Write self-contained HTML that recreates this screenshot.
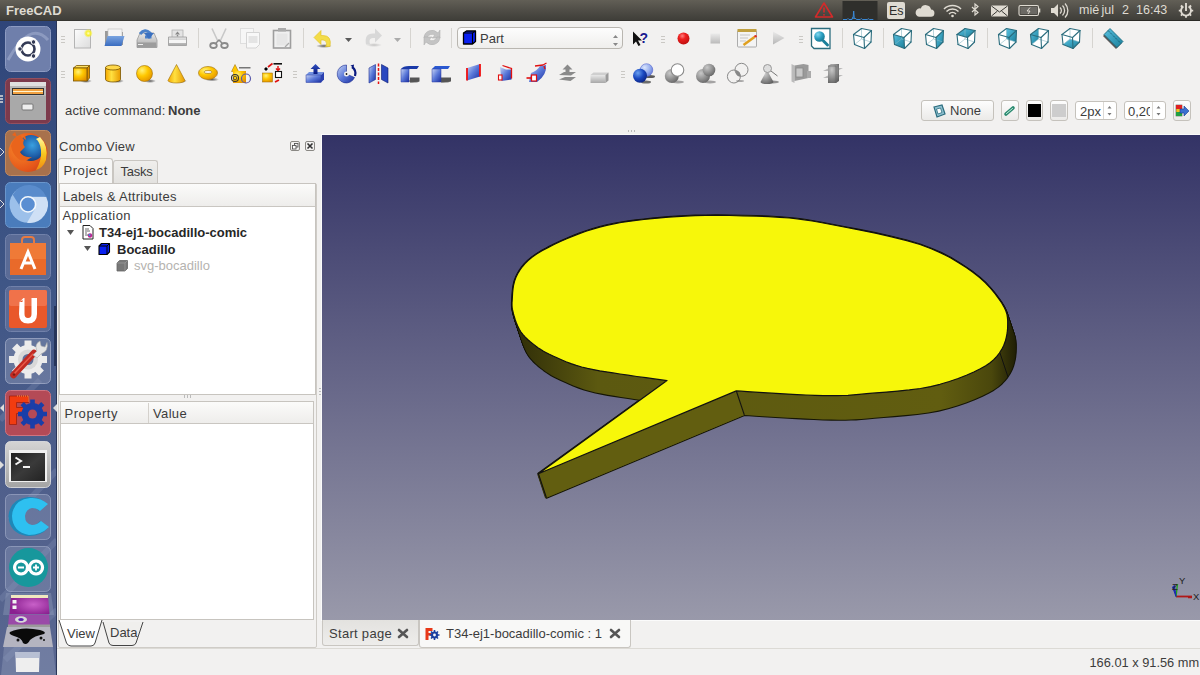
<!DOCTYPE html>
<html><head><meta charset="utf-8">
<style>
*{margin:0;padding:0;box-sizing:border-box}
html,body{width:1200px;height:675px;overflow:hidden;background:#f2f1f0;font-family:"Liberation Sans",sans-serif;color:#3c3c3c;position:relative}
.a{position:absolute}
.t{position:absolute;white-space:nowrap;font-size:13px;line-height:15px;color:#3c3c3c}
#panel{left:0;top:0;width:1200px;height:21px;background:linear-gradient(#625f56,#4b4943 60%,#3f3e39 95%,#2e2d29)}
#launcher{left:0;top:21px;width:57px;height:654px;background:linear-gradient(#1e2b4f 0px,#34497c 20px,#3d5589 300px,#41588a 654px);border-right:1px solid #1e2a48}
#view{left:322px;top:135px;width:878px;height:485px;background:linear-gradient(#333366,#9999aa)}
.grip{position:absolute;width:4px;height:7px;background:repeating-linear-gradient(#cac8c4 0 1px,transparent 1px 3px)}
.sep{position:absolute;width:1px;height:20px;background:#d6d4d0}
.box{position:absolute;background:#fff;border:1px solid #c7c4bf}
.hdr{position:absolute;background:linear-gradient(#fbfbfa,#eeedeb);border-bottom:1px solid #c9c6c1}
.tile{position:absolute;left:5px;width:46px;height:46px;border-radius:5px}
</style></head><body>
<div id="panel" class="a"><div class="t" style="left:6px;top:3px;font-weight:bold;color:#dfdbd2;font-size:13px;line-height:15px">FreeCAD</div>
<svg class="a" style="left:800px;top:0" width="400" height="21" viewBox="800 0 400 21">
<path d="M824 3 L832.5 17 H815.5z" fill="none" stroke="#d42a2a" stroke-width="1.6" stroke-linejoin="round"/>
<path d="M824 7.5 v5" stroke="#d42a2a" stroke-width="1.6"/><circle cx="824" cy="14.8" r="0.9" fill="#d42a2a"/>
<rect x="842.5" y="1" width="35" height="19" fill="#2f2f2c"/>
<path d="M843 19.5 h4 l1 -1 l1 1 h3 l0.5 -2 l0.5 1.5 l0.7 -8 l0.6 8 l1 -1 l1 1.5 h4 l1 -1 l1 1 h5 l1 -0.8 l1 0.8 h4" stroke="#3a8ad8" stroke-width="1" fill="none"/>
<rect x="887" y="2" width="18" height="17" rx="2" fill="#dfdbd2"/>
<text x="889" y="15" font-family="Liberation Sans" font-size="12.5" fill="#2e2d2a">Es</text>
<path d="M919 16.8 h11.5 a3.6 3.6 0 0 0 0.6 -7.2 a5.4 5.4 0 0 0 -10.3 -1.2 a4 4 0 0 0 -1.8 8.4z" fill="#dfdbd2"/>
<path d="M944 9 a12 12 0 0 1 17 0 M946.5 11.5 a8.5 8.5 0 0 1 12 0 M949 14 a5 5 0 0 1 7 0" stroke="#dfdbd2" stroke-width="1.5" fill="none"/>
<circle cx="952.5" cy="16" r="1.3" fill="#dfdbd2"/>
<path d="M972 7 l6 5.5 l-3 2.5 v-11 l3 2.5 l-6 5.5" stroke="#dfdbd2" stroke-width="1.2" fill="none"/>
<rect x="991" y="5.5" width="17" height="11" rx="1" fill="#dfdbd2"/>
<path d="M991.5 6 l8 6 l8 -6 M991.5 16 l6 -5 M1007.5 16 l-6 -5" stroke="#3c3b37" stroke-width="1" fill="none"/>
<rect x="1019" y="5.5" width="19.5" height="10" rx="1.5" fill="none" stroke="#dfdbd2" stroke-width="1.1"/>
<rect x="1038.5" y="8.5" width="1.8" height="4" fill="#dfdbd2"/>
<rect x="1020.5" y="7" width="16.5" height="7" fill="#6b6964"/>
<path d="M1030 7.5 l-3 3.5 h3 l-2 3" stroke="#dfdbd2" stroke-width="1" fill="none"/>
<path d="M1051 8 h3 l4 -4 v13 l-4 -4 h-3z" fill="#dfdbd2"/>
<path d="M1060 7.5 a4 4 0 0 1 0 6 M1062.5 5.5 a7 7 0 0 1 0 10 M1065 3.5 a10 10 0 0 1 0 14" stroke="#dfdbd2" stroke-width="1.3" fill="none"/>
<g transform="translate(1186 10.6)">
<path d="M-2.6 -4.2 A5 5 0 1 0 2.6 -4.2" fill="none" stroke="#dfdbd2" stroke-width="1.9"/>
<path d="M0 -7.5 v8" stroke="#dfdbd2" stroke-width="1.9"/>
<g stroke="#dfdbd2" stroke-width="1.8"><path d="M-7.2 0h2.2M5 0h2.2M0 5v2.2M-5.1 -5.1l1.5 1.5M5.1 -5.1l-1.5 1.5M-5.1 5.1l1.5 -1.5M5.1 5.1l-1.5 -1.5"/></g>
</g>
<rect x="800" y="20" width="400" height="1" fill="#2a2925"/>
</svg>
<div class="t" style="left:1079px;top:3px;color:#dfdbd2;font-size:12.5px">mié</div>
<div class="t" style="left:1101.5px;top:3px;color:#dfdbd2;font-size:12.5px">jul</div>
<div class="t" style="left:1122px;top:3px;color:#dfdbd2;font-size:12.5px">2</div>
<div class="t" style="left:1136px;top:3px;color:#dfdbd2;font-size:12.5px">16:43</div>
</div>
<div id="launcher" class="a"><svg class="a" style="left:0;top:-21px" width="57" height="675" viewBox="0 0 57 675">
<defs>
<linearGradient id="lbg" x1="0" y1="0" x2="0" y2="1"><stop offset="0" stop-color="#2f4579"/><stop offset="0.4" stop-color="#3f5686"/><stop offset="0.7" stop-color="#4f5f8b"/><stop offset="1" stop-color="#5a6790"/></linearGradient>
<linearGradient id="tileg" x1="0" y1="0" x2="0" y2="1"><stop offset="0" stop-color="#ffffff" stop-opacity="0.28"/><stop offset="1" stop-color="#ffffff" stop-opacity="0.08"/></linearGradient>
<radialGradient id="ffg" cx="0.55" cy="0.4" r="0.6"><stop offset="0" stop-color="#3aa0e0"/><stop offset="0.7" stop-color="#1e5ea8"/><stop offset="1" stop-color="#16407e"/></radialGradient>
</defs>
<rect x="0" y="21" width="57" height="654" fill="url(#lbg)"/>
<path d="M10 520 L57 470 M0 600 L57 540 M5 660 L57 610 M0 420 L40 380" stroke="#8e9cc0" stroke-width="6" opacity="0.25"/>
<rect x="54" y="306" width="2" height="60" fill="#26355a"/>
<rect x="56" y="21" width="1" height="654" fill="#2a3658"/>
<!-- 1 ubuntu -->
<rect x="5.5" y="26.5" width="45" height="45" rx="5" fill="#6f7fab" stroke="#8d9bc2"/>
<path d="M8 60 Q30 20 48 40" stroke="#a9b5d6" stroke-width="3" fill="none" opacity="0.5"/>
<circle cx="28" cy="49" r="12.5" fill="#fff"/>
<circle cx="28" cy="49" r="6.5" fill="none" stroke="#333a55" stroke-width="2.6"/>
<circle cx="33.5" cy="42" r="2.3" fill="#333a55" stroke="#fff" stroke-width="1"/><circle cx="20" cy="49" r="2.3" fill="#333a55" stroke="#fff" stroke-width="1"/><circle cx="33.5" cy="56" r="2.3" fill="#333a55" stroke="#fff" stroke-width="1"/>
<!-- 2 files -->
<rect x="5.5" y="78.5" width="45" height="45" rx="5" fill="#7c3a4c" stroke="#94505f"/>
<rect x="10" y="82" width="36" height="38" rx="1.5" fill="#b9b9b9"/>
<rect x="10" y="82" width="36" height="4" fill="#e0e0e0"/>
<rect x="12" y="88" width="32" height="7" fill="#333"/>
<rect x="13" y="89" width="30" height="5" fill="#f0a040"/><rect x="13" y="91" width="30" height="1" fill="#fff5d0"/>
<rect x="10" y="96" width="36" height="24" fill="#a9a9a9"/>
<rect x="22" y="104" width="11" height="6" rx="1" fill="#eee" stroke="#777"/>
<path d="M0 96h3M0 99h3M0 102h3" stroke="#ddd" stroke-width="1.5"/>
<!-- 3 firefox -->
<rect x="5.5" y="130.5" width="45" height="45" rx="5" fill="#a8714c" stroke="#c08a62"/>
<radialGradient id="foxg" cx="0.3" cy="0.4" r="0.8"><stop offset="0" stop-color="#f7882a"/><stop offset="0.7" stop-color="#e5561a"/><stop offset="1" stop-color="#c8401a"/></radialGradient>
<linearGradient id="flame" x1="0" y1="0" x2="0" y2="1"><stop offset="0" stop-color="#fff8a0"/><stop offset="0.5" stop-color="#f8c820"/><stop offset="1" stop-color="#f08a10"/></linearGradient>
<circle cx="28" cy="152.5" r="19.5" fill="url(#foxg)"/>
<circle cx="31" cy="148" r="13" fill="url(#ffg)"/>
<path d="M40 137 Q49 146 46 160 Q43 168 36 170 Q42 160 41 150 Q40 142 36 139z" fill="url(#flame)"/>
<path d="M11 146 Q13 138 20 135 L24 140 Q22 144 25 147 L20 152 Q23 158 32 157 Q26 162 20 160 Q14 156 12 150z" fill="#e9641c"/>
<path d="M12 135 l3 -3 l2 5z M23 138 l2 -3 l1 5z" fill="#e9641c"/>
<path d="M0 148l4 4l-4 4" stroke="#ddd" fill="none" stroke-width="1"/>
<!-- 4 chromium -->
<rect x="5.5" y="182.5" width="45" height="45" rx="5" fill="#4a7cbc" stroke="#6a96cc"/>
<circle cx="28" cy="204.4" r="18.4" fill="#9cc0ea"/>
<path d="M28 196.8 H46.2 A18.4 18.4 0 0 1 27 222.8 L35 209z" fill="#cfe0f5"/>
<path d="M46.2 196.8 A18.4 18.4 0 0 0 12.7 194.7 L21 208 L28 196.8z" fill="#5a8ccc"/>
<circle cx="28" cy="204.4" r="7.6" fill="#5a8ed2" stroke="#f4f8fc" stroke-width="1.6"/>
<path d="M0 200l4 4l-4 4" stroke="#ddd" fill="none" stroke-width="1"/>
<!-- 5 software center -->
<rect x="5.5" y="234.5" width="45" height="45" rx="5" fill="#5a6b96" stroke="#7181aa"/>
<rect x="10" y="243" width="36" height="32" fill="#ef7a37"/>
<rect x="10" y="259" width="36" height="16" fill="#e96a2a"/>
<path d="M22 245 v-5 q0-3 3-3 h6 q3 0 3 3 v5" stroke="#e87a40" stroke-width="2" fill="none"/>
<path d="M21 269 L28 252 L35 269 M23 263 H33" stroke="#fff" stroke-width="3" fill="none"/>
<!-- 6 ubuntu one -->
<rect x="5.5" y="286.5" width="45" height="45" rx="5" fill="#5a6b96" stroke="#7181aa"/>
<rect x="9" y="290" width="38" height="38" rx="2" fill="#e9582a"/>
<rect x="9" y="290" width="38" height="16" rx="2" fill="#f0724a"/>
<path d="M19.5 302 l4 -4 h1 v16 q0 4 3.5 4 q3.5 0 3.5 -4 v-16 h5.5 v16 q0 9.5 -9 9.5 q-9 0 -9 -9.5z" fill="#fff"/><path d="M19.5 302 h3 v-2z" fill="#e9582a"/>
<!-- 7 system settings -->
<rect x="5.5" y="338.5" width="45" height="45" rx="5" fill="#8d98b8" fill-opacity="0.45" stroke="#a9b3cf" stroke-opacity="0.7"/>
<g transform="translate(28 359.5)">
<circle r="14.5" fill="#ececec"/>
<g fill="#ececec"><rect x="-3.5" y="-19" width="7" height="38"/><rect x="-19" y="-3.5" width="38" height="7"/><rect x="-3.5" y="-19" width="7" height="38" transform="rotate(45)"/><rect x="-3.5" y="-19" width="7" height="38" transform="rotate(-45)"/></g>
<circle r="10" fill="#d8d8d8"/>
<circle r="5.5" fill="#5d6e98"/>
</g>
<path d="M13.5 375 L34 353" stroke="#c02a22" stroke-width="6.5" stroke-linecap="round"/>
<path d="M14 374 L33 354" stroke="#e85a4a" stroke-width="1.5" stroke-linecap="round"/>
<circle cx="14" cy="374.5" r="1.2" fill="#7a1a14"/>
<path d="M33 355 L37 351 Q34 344 40 341 L41 346 L45 347 L47 342.5 Q49 351 41 354 L37 358z" fill="#e4e4e4" stroke="#aaa" stroke-width="0.6"/>
<!-- 8 freecad -->
<rect x="5.5" y="390.5" width="45" height="45" rx="5" fill="#b44a56" stroke="#cf7480"/>
<path d="M9.5 396 h19 v6.5 h-12 v5 h9 v6 h-9 v11 h-7z" fill="#f23c10" stroke="#9a1a08" stroke-width="0.7"/>
<path d="M17 396 h11.5 v6" fill="none" stroke="#ff9a50" stroke-width="1" stroke-dasharray="1 1"/>
<g transform="translate(32.5 414)"><circle r="11" fill="#1a3ea8"/><g stroke="#1a3ea8" stroke-width="4.6"><path d="M0 -14.5v29M-14.5 0h29M-10.3 -10.3l20.6 20.6M10.3 -10.3l-20.6 20.6"/></g><circle r="4.5" fill="#b44a56"/></g>
<path d="M0 408l4 -4v8z M57 404 l-4 4 l4 4z" fill="#ddd"/>
<!-- 9 terminal -->
<linearGradient id="termg" x1="0" y1="0" x2="0" y2="1"><stop offset="0" stop-color="#d4d4d4"/><stop offset="1" stop-color="#a4a4a4"/></linearGradient>
<linearGradient id="scrg" x1="0" y1="0" x2="1" y2="1"><stop offset="0" stop-color="#1e1e1e"/><stop offset="0.5" stop-color="#3a3a3a"/><stop offset="1" stop-color="#222"/></linearGradient>
<rect x="5.5" y="441.5" width="45" height="46" rx="5" fill="url(#termg)" stroke="#e4e4e4" stroke-width="0.8"/>
<rect x="9" y="450" width="38" height="32" fill="#f0f0f0"/>
<rect x="11" y="453" width="34" height="28" fill="url(#scrg)"/>
<path d="M15.5 457.5l5.5 3.5l-5.5 3.5" stroke="#f4f4f4" stroke-width="2" fill="none"/><path d="M23 467h7" stroke="#f4f4f4" stroke-width="2"/>
<path d="M0 461l4 4l-4 4z" fill="#ddd"/>
<!-- 10 C -->
<rect x="5.5" y="494.5" width="45" height="45" rx="5" fill="#8d98b8" fill-opacity="0.4" stroke="#a9b3cf" stroke-opacity="0.6"/>
<path d="M46 503 Q38 496 28 497 Q10 499 8.5 516 Q9 533 27 536 Q40 537 48 528 L40 521 Q36 526 31 526 Q23 525 23 516 Q24 508 31 507 Q36 507 39 511z" fill="#1e88b8"/>
<path d="M48 504 Q40 497 30 498 Q13 500 12 516 Q12.5 532 29 535 Q41 535 49 527 L41 521 Q37 525 32 525 Q25 524 25 516 Q26 509 32 508 Q37 508 40 511z" fill="#2ec0f0"/>
<!-- 11 arduino -->
<rect x="5.5" y="546.5" width="45" height="45" rx="5" fill="#8d98b8" fill-opacity="0.4" stroke="#a9b3cf" stroke-opacity="0.6"/>
<circle cx="28.5" cy="567.5" r="19.5" fill="#17979c"/>
<path d="M21 561 a6.5 6.5 0 1 0 0.1 0z M36 561 a6.5 6.5 0 1 0 0.1 0z" fill="none" stroke="#fff" stroke-width="3"/>
<path d="M18 567.5h6M33 567.5h6M36 564.5v6" stroke="#fff" stroke-width="1.8"/>
<!-- stacked -->
<radialGradient id="purp" cx="0.6" cy="0.5" r="0.6"><stop offset="0" stop-color="#c860c8"/><stop offset="1" stop-color="#8a2090"/></radialGradient>
<path d="M6 593 h45 l3 22 h-51z" fill="#9aa6c4" fill-opacity="0.35"/>
<path d="M11 595 h37 l1.5 19 h-40z" fill="url(#purp)"/>
<rect x="11" y="595" width="37" height="3" fill="#f0e8c0"/>
<rect x="12.5" y="600" width="4" height="3.5" fill="#f2f2f2"/><rect x="12.5" y="605.5" width="4" height="3.5" fill="#f2f2f2"/>
<path d="M9 614.5 h40 l1 12.5 h-42z" fill="#9a4aa8"/>
<ellipse cx="21" cy="619.5" rx="6" ry="3.2" fill="#d8d8d8"/><ellipse cx="21" cy="619.5" rx="2.8" ry="1.6" fill="#5a20b0"/>
<rect x="8" y="624.5" width="42" height="2.5" fill="#9a9a9a"/>
<path d="M7 627 h43 l3 20 h-50z" fill="#b4b4c0"/>
<path d="M10 632 Q22 626 40 630 Q47 632 44 634 Q34 636 30 640 Q27 646 23 643 Q22 638 14 636 Q8 634 10 632z" fill="#0a0a0a"/>
<circle cx="18" cy="640" r="1.5" fill="#111"/><circle cx="41" cy="638" r="1.5" fill="#111"/><circle cx="44" cy="640" r="1" fill="#111"/>
<path d="M4 647 h49 l3 28 h-55z" fill="#9aa6c4" fill-opacity="0.35"/>
<path d="M15 652 h25 l-1 20 h-23z" fill="#c9cfe0" fill-opacity="0.8"/>
<path d="M16 658 h23 v14 h-23z" fill="#eeeeee"/>
</svg>
</div>

<!-- toolbars -->
<div class="grip" style="left:61px;top:36px"></div>
<div class="grip" style="left:61px;top:71px"></div>
<div class="sep" style="left:198px;top:28px"></div>
<div class="sep" style="left:303px;top:28px"></div>
<div class="sep" style="left:410px;top:28px"></div>
<div class="sep" style="left:451px;top:28px"></div>
<div class="grip" style="left:661px;top:36px"></div>
<div class="grip" style="left:799px;top:36px"></div>
<div class="sep" style="left:842px;top:28px"></div>
<div class="sep" style="left:883px;top:28px"></div>
<div class="sep" style="left:987px;top:28px"></div>
<div class="sep" style="left:1092px;top:28px"></div>
<div class="grip" style="left:293px;top:71px"></div>
<div class="grip" style="left:621px;top:71px"></div>
<!-- workbench combo -->
<div class="a" style="left:457px;top:27px;width:166px;height:22px;border:1px solid #b9b6b0;border-radius:4px;background:linear-gradient(#fdfdfd,#efeeec)"></div>
<div class="t" style="left:480px;top:31px;font-size:13px;color:#3c3c3c">Part</div>
<svg class="a" style="left:0;top:0" width="1200" height="100" viewBox="0 0 1200 100">
<defs>
<linearGradient id="pg" x1="0" y1="0" x2="1" y2="1"><stop offset="0" stop-color="#fdfdfd"/><stop offset="1" stop-color="#dcdcdc"/></linearGradient>
<radialGradient id="glow"><stop offset="0" stop-color="#ffffc0"/><stop offset="0.5" stop-color="#f6ee30"/><stop offset="1" stop-color="#f6ee30" stop-opacity="0"/></radialGradient>
<linearGradient id="blu" x1="0" y1="0" x2="0" y2="1"><stop offset="0" stop-color="#7aa4e0"/><stop offset="1" stop-color="#3a6cc0"/></linearGradient>
<linearGradient id="gry" x1="0" y1="0" x2="0" y2="1"><stop offset="0" stop-color="#e8e8e8"/><stop offset="1" stop-color="#a8a8a8"/></linearGradient>
<radialGradient id="gold" cx="0.35" cy="0.3" r="0.8"><stop offset="0" stop-color="#fff27a"/><stop offset="0.45" stop-color="#ffc800"/><stop offset="1" stop-color="#e08e00"/></radialGradient>
<linearGradient id="goldl" x1="0" y1="0" x2="1" y2="0"><stop offset="0" stop-color="#f5a800"/><stop offset="0.4" stop-color="#ffe040"/><stop offset="1" stop-color="#e89a00"/></linearGradient>
<linearGradient id="pb" x1="0" y1="0" x2="1" y2="1"><stop offset="0" stop-color="#c8d4f4"/><stop offset="0.5" stop-color="#5a78d8"/><stop offset="1" stop-color="#1a2ea0"/></linearGradient>
<linearGradient id="pbd" x1="0" y1="0" x2="0" y2="1"><stop offset="0" stop-color="#3050c0"/><stop offset="1" stop-color="#0a1a80"/></linearGradient>
<radialGradient id="rball" cx="0.4" cy="0.3" r="0.7"><stop offset="0" stop-color="#ff8080"/><stop offset="0.4" stop-color="#ee2020"/><stop offset="1" stop-color="#c01010"/></radialGradient>
<linearGradient id="teal" x1="0" y1="0" x2="1" y2="1"><stop offset="0" stop-color="#58c0e0"/><stop offset="1" stop-color="#1a7f9a"/></linearGradient>
<radialGradient id="tball" cx="0.35" cy="0.3" r="0.8"><stop offset="0" stop-color="#80d8f0"/><stop offset="0.5" stop-color="#2a9ec0"/><stop offset="1" stop-color="#13708a"/></radialGradient>
<radialGradient id="bball" cx="0.35" cy="0.3" r="0.8"><stop offset="0" stop-color="#6aa0f0"/><stop offset="0.5" stop-color="#1a48c0"/><stop offset="1" stop-color="#0a1e7a"/></radialGradient>
<radialGradient id="lbball" cx="0.35" cy="0.3" r="0.8"><stop offset="0" stop-color="#d8e4fc"/><stop offset="0.6" stop-color="#90a8ec"/><stop offset="1" stop-color="#5a70d0"/></radialGradient>
<radialGradient id="gball" cx="0.35" cy="0.3" r="0.8"><stop offset="0" stop-color="#c8c8c8"/><stop offset="0.6" stop-color="#8a8a8a"/><stop offset="1" stop-color="#606060"/></radialGradient>
<radialGradient id="shad"><stop offset="0" stop-color="#333" stop-opacity="0.8"/><stop offset="1" stop-color="#333" stop-opacity="0"/></radialGradient>
</defs>
<!-- ===== ROW 1 ===== -->
<!-- new -->
<rect x="74.5" y="29.5" width="16" height="18.5" fill="url(#pg)" stroke="#b4b4b4"/>
<circle cx="88.3" cy="33.3" r="4.5" fill="url(#glow)"/>
<!-- open -->
<path d="M105 31 h6 l1 1 h11 v13 h-18z" fill="#9a9a9a"/>
<rect x="108" y="29" width="14" height="8" fill="#f4f4f4" stroke="#bbb" stroke-width="0.6"/>
<path d="M107.5 36 h17 l-3 10 h-17z" fill="url(#blu)"/>
<!-- save -->
<path d="M137 40 l3 -7 h14 l3 7 v7.5 h-20z" fill="url(#gry)" stroke="#9a9a9a" stroke-width="0.8"/>
<rect x="137" y="42.5" width="19" height="5" fill="#9c9c9c"/>
<rect x="138" y="44" width="5" height="1" fill="#eee"/>
<path d="M140 34 q5 -6 10 -1 l0 -1 v5 h-5" fill="none" stroke="#4a80c8" stroke-width="3"/>
<path d="M144 33 h10 l-5 6z" fill="#3a70c0"/>
<!-- print -->
<rect x="172" y="30" width="11" height="8" fill="#e4e4e4" stroke="#aaa" stroke-width="0.7"/>
<path d="M177.5 31.5 l-2.5 3 h5z M176.8 34 h1.4 v2.5 h-1.4z" fill="#888"/>
<path d="M168.5 37 h18 v8.5 h-18z" fill="url(#gry)" stroke="#999" stroke-width="0.8"/>
<rect x="169" y="40" width="17" height="3" fill="#f5f5f5"/>
<!-- cut -->
<path d="M212 28.5 l6 13 M226 28.5 l-6 13" stroke="#c8c8c8" stroke-width="1.6" fill="none"/>
<ellipse cx="213.5" cy="45.5" rx="3.3" ry="2.5" fill="none" stroke="#8a8a8a" stroke-width="1.8"/>
<ellipse cx="224.5" cy="45.5" rx="3.3" ry="2.5" fill="none" stroke="#8a8a8a" stroke-width="1.8"/>
<path d="M216 43 l3 -3 l3 3" stroke="#8a8a8a" stroke-width="1.5" fill="none"/>
<!-- copy -->
<rect x="240.5" y="28.5" width="13" height="15" fill="#f6f6f6" stroke="#dedede"/>
<path d="M246.5 32.5 h13 v12 l-3.5 3.5 h-9.5z" fill="#f8f8f8" stroke="#d4d4d4"/>
<rect x="248.5" y="36" width="9" height="7" fill="#e4e4e4"/>
<!-- paste -->
<rect x="273.5" y="30.5" width="17" height="17.5" fill="#f0f0f0" stroke="#9e9e9e" stroke-width="1.6"/>
<rect x="278" y="28" width="8" height="3.5" fill="#aaa"/>
<rect x="276.5" y="33.5" width="11" height="12" fill="#e6e6e6"/>
<path d="M285 47 l4 -4" stroke="#aaa" stroke-width="1.2"/>
<!-- undo -->
<ellipse cx="324" cy="46" rx="8" ry="2" fill="url(#shad)"/>
<path d="M330 46.5 q2 -11 -7 -11 h-2 v-5 l-7 7 l7 7 v-4.5 h2 q3.5 0 3.5 3.5 q0 2 -1 3z" fill="#f3dc48" stroke="#e0c020" stroke-width="0.6"/>
<path d="M345 38 h7 l-3.5 4z" fill="#5a5a5a"/>
<!-- redo -->
<ellipse cx="374" cy="45" rx="8" ry="2" fill="url(#shad)" opacity="0.3"/>
<path d="M366 44.5 q-2 -11 7 -11 h2 v-5 l7 7 l-7 7 v-4.5 h-2 q-3.5 0 -3.5 3.5 q0 2 1 3z" fill="#d8d8d8"/>
<path d="M394 38 h7 l-3.5 4z" fill="#ababab"/>
<!-- refresh -->
<path d="M424 38 a8 8 0 0 1 14 -5 l2 -3 v8 h-8 l3 -2.5 a5 5 0 0 0 -8 2.5z" fill="#c4c4c4" stroke="#aaa" stroke-width="0.5"/>
<path d="M440 37 a8 8 0 0 1 -14 5 l-2 3 v-8 h8 l-3 2.5 a5 5 0 0 0 8 -2.5z" fill="#c4c4c4" stroke="#aaa" stroke-width="0.5"/>
<!-- workbench cube -->
<path d="M463.5 33 l3 -2 h9 v10.5 l-3 2.5 h-9z" fill="#0a20f0" stroke="#000" stroke-width="1.3" stroke-linejoin="round"/>
<path d="M463.5 33 h9 l3 -2 M472.5 33 v11" stroke="#000" stroke-width="1.1" fill="none"/>
<path d="M613 38 l2.5 -3 l2.5 3z M613 43 l2.5 3 l2.5 -3z" fill="#888"/>
<!-- whats this -->
<path d="M633 31.5 v13 l3 -3 l2.5 4.5 l2 -1 l-2.5 -4.5 h4z" fill="#111"/>
<text x="639.5" y="43" font-family="Liberation Sans" font-weight="bold" font-size="14" fill="#1a1a90">?</text>
<!-- record -->
<circle cx="683.5" cy="38.4" r="6" fill="url(#rball)"/>
<!-- stop -->
<rect x="710.5" y="33.5" width="9.5" height="10" fill="url(#gry)" opacity="0.75"/>
<!-- macro edit -->
<rect x="737.5" y="30.5" width="19" height="16.5" rx="1" fill="#f4f4f4" stroke="#999" stroke-width="0.8"/>
<rect x="737.5" y="29" width="19" height="3" fill="#c0a040"/>
<path d="M740 35h10M740 38h8M740 41h6" stroke="#bbb" stroke-width="0.8"/>
<path d="M743.5 45 l11 -8" stroke="#e0a020" stroke-width="2.6"/>
<circle cx="755.5" cy="36.3" r="1.3" fill="#e03020"/>
<!-- play -->
<path d="M773 31.5 v13 l11.5 -6.5z" fill="url(#gry)" opacity="0.8"/>
<!-- fit all -->
<path d="M811.5 28.5 h18.5 v20 h-16 l-2.5 -2.5z" fill="#fff" stroke="#2b6d7e" stroke-width="1.3"/>
<circle cx="819.5" cy="36.5" r="5.3" fill="url(#tball)"/>
<path d="M823.5 41 l4 4" stroke="#1a7f9a" stroke-width="3" stroke-linecap="round"/>
<!-- ruler -->
<path d="M1104 34.5 l6 -6 l13 13 l-6 6z" fill="#333" opacity="0.8" transform="translate(-1 1.5)"/>
<path d="M1104 34.5 l6 -6 l13 13 l-6 6z" fill="url(#teal)" stroke="#15677c" stroke-width="0.8"/>
<path d="M1108 30.5l2 2M1110.5 33l1.5 1.5M1113 35.5l2 2M1115.5 38l1.5 1.5M1118 40.5l2 2" stroke="#13576a" stroke-width="0.8"/>
<!--CUBES--><polygon points="853.5,34.5 861.5,28.5 871.5,30.5 871.0,42.0 864.5,48.5 854.5,44.5" fill="#fff"/><line x1="861.5" y1="39.0" x2="861.5" y2="28.5" stroke="#8ab8c4" stroke-width="0.6"/><line x1="861.5" y1="39.0" x2="871.0" y2="42.0" stroke="#8ab8c4" stroke-width="0.6"/><line x1="861.5" y1="39.0" x2="854.5" y2="44.5" stroke="#8ab8c4" stroke-width="0.6"/><line x1="853.5" y1="34.5" x2="864.0" y2="37.5" stroke="#2b6d7e" stroke-width="1.1" stroke-linecap="round"/><line x1="864.0" y1="37.5" x2="864.5" y2="48.5" stroke="#2b6d7e" stroke-width="1.1" stroke-linecap="round"/><line x1="864.5" y1="48.5" x2="854.5" y2="44.5" stroke="#2b6d7e" stroke-width="1.1" stroke-linecap="round"/><line x1="854.5" y1="44.5" x2="853.5" y2="34.5" stroke="#2b6d7e" stroke-width="1.1" stroke-linecap="round"/><line x1="853.5" y1="34.5" x2="861.5" y2="28.5" stroke="#2b6d7e" stroke-width="1.1" stroke-linecap="round"/><line x1="861.5" y1="28.5" x2="871.5" y2="30.5" stroke="#2b6d7e" stroke-width="1.1" stroke-linecap="round"/><line x1="871.5" y1="30.5" x2="864.0" y2="37.5" stroke="#2b6d7e" stroke-width="1.1" stroke-linecap="round"/><line x1="871.5" y1="30.5" x2="871.0" y2="42.0" stroke="#2b6d7e" stroke-width="1.1" stroke-linecap="round"/><line x1="871.0" y1="42.0" x2="864.5" y2="48.5" stroke="#2b6d7e" stroke-width="1.1" stroke-linecap="round"/><polygon points="893.5,34.5 901.5,28.5 911.5,30.5 911.0,42.0 904.5,48.5 894.5,44.5" fill="#fff"/><polygon points="893.5,34.5 904.0,37.5 904.5,48.5 894.5,44.5" fill="url(#teal)"/><line x1="901.5" y1="39.0" x2="901.5" y2="28.5" stroke="#8ab8c4" stroke-width="0.6"/><line x1="901.5" y1="39.0" x2="911.0" y2="42.0" stroke="#8ab8c4" stroke-width="0.6"/><line x1="901.5" y1="39.0" x2="894.5" y2="44.5" stroke="#8ab8c4" stroke-width="0.6"/><line x1="893.5" y1="34.5" x2="904.0" y2="37.5" stroke="#2b6d7e" stroke-width="1.1" stroke-linecap="round"/><line x1="904.0" y1="37.5" x2="904.5" y2="48.5" stroke="#2b6d7e" stroke-width="1.1" stroke-linecap="round"/><line x1="904.5" y1="48.5" x2="894.5" y2="44.5" stroke="#2b6d7e" stroke-width="1.1" stroke-linecap="round"/><line x1="894.5" y1="44.5" x2="893.5" y2="34.5" stroke="#2b6d7e" stroke-width="1.1" stroke-linecap="round"/><line x1="893.5" y1="34.5" x2="901.5" y2="28.5" stroke="#2b6d7e" stroke-width="1.1" stroke-linecap="round"/><line x1="901.5" y1="28.5" x2="911.5" y2="30.5" stroke="#2b6d7e" stroke-width="1.1" stroke-linecap="round"/><line x1="911.5" y1="30.5" x2="904.0" y2="37.5" stroke="#2b6d7e" stroke-width="1.1" stroke-linecap="round"/><line x1="911.5" y1="30.5" x2="911.0" y2="42.0" stroke="#2b6d7e" stroke-width="1.1" stroke-linecap="round"/><line x1="911.0" y1="42.0" x2="904.5" y2="48.5" stroke="#2b6d7e" stroke-width="1.1" stroke-linecap="round"/><polygon points="925.5,34.5 933.5,28.5 943.5,30.5 943.0,42.0 936.5,48.5 926.5,44.5" fill="#fff"/><polygon points="936.0,37.5 943.5,30.5 943.0,42.0 936.5,48.5" fill="url(#teal)"/><line x1="933.5" y1="39.0" x2="933.5" y2="28.5" stroke="#8ab8c4" stroke-width="0.6"/><line x1="933.5" y1="39.0" x2="943.0" y2="42.0" stroke="#8ab8c4" stroke-width="0.6"/><line x1="933.5" y1="39.0" x2="926.5" y2="44.5" stroke="#8ab8c4" stroke-width="0.6"/><line x1="925.5" y1="34.5" x2="936.0" y2="37.5" stroke="#2b6d7e" stroke-width="1.1" stroke-linecap="round"/><line x1="936.0" y1="37.5" x2="936.5" y2="48.5" stroke="#2b6d7e" stroke-width="1.1" stroke-linecap="round"/><line x1="936.5" y1="48.5" x2="926.5" y2="44.5" stroke="#2b6d7e" stroke-width="1.1" stroke-linecap="round"/><line x1="926.5" y1="44.5" x2="925.5" y2="34.5" stroke="#2b6d7e" stroke-width="1.1" stroke-linecap="round"/><line x1="925.5" y1="34.5" x2="933.5" y2="28.5" stroke="#2b6d7e" stroke-width="1.1" stroke-linecap="round"/><line x1="933.5" y1="28.5" x2="943.5" y2="30.5" stroke="#2b6d7e" stroke-width="1.1" stroke-linecap="round"/><line x1="943.5" y1="30.5" x2="936.0" y2="37.5" stroke="#2b6d7e" stroke-width="1.1" stroke-linecap="round"/><line x1="943.5" y1="30.5" x2="943.0" y2="42.0" stroke="#2b6d7e" stroke-width="1.1" stroke-linecap="round"/><line x1="943.0" y1="42.0" x2="936.5" y2="48.5" stroke="#2b6d7e" stroke-width="1.1" stroke-linecap="round"/><polygon points="957.0,34.5 965.0,28.5 975.0,30.5 974.5,42.0 968.0,48.5 958.0,44.5" fill="#fff"/><polygon points="957.0,34.5 965.0,28.5 975.0,30.5 967.5,37.5" fill="url(#teal)"/><line x1="965.0" y1="39.0" x2="965.0" y2="28.5" stroke="#8ab8c4" stroke-width="0.6"/><line x1="965.0" y1="39.0" x2="974.5" y2="42.0" stroke="#8ab8c4" stroke-width="0.6"/><line x1="965.0" y1="39.0" x2="958.0" y2="44.5" stroke="#8ab8c4" stroke-width="0.6"/><line x1="957.0" y1="34.5" x2="967.5" y2="37.5" stroke="#2b6d7e" stroke-width="1.1" stroke-linecap="round"/><line x1="967.5" y1="37.5" x2="968.0" y2="48.5" stroke="#2b6d7e" stroke-width="1.1" stroke-linecap="round"/><line x1="968.0" y1="48.5" x2="958.0" y2="44.5" stroke="#2b6d7e" stroke-width="1.1" stroke-linecap="round"/><line x1="958.0" y1="44.5" x2="957.0" y2="34.5" stroke="#2b6d7e" stroke-width="1.1" stroke-linecap="round"/><line x1="957.0" y1="34.5" x2="965.0" y2="28.5" stroke="#2b6d7e" stroke-width="1.1" stroke-linecap="round"/><line x1="965.0" y1="28.5" x2="975.0" y2="30.5" stroke="#2b6d7e" stroke-width="1.1" stroke-linecap="round"/><line x1="975.0" y1="30.5" x2="967.5" y2="37.5" stroke="#2b6d7e" stroke-width="1.1" stroke-linecap="round"/><line x1="975.0" y1="30.5" x2="974.5" y2="42.0" stroke="#2b6d7e" stroke-width="1.1" stroke-linecap="round"/><line x1="974.5" y1="42.0" x2="968.0" y2="48.5" stroke="#2b6d7e" stroke-width="1.1" stroke-linecap="round"/><polygon points="998.5,34.5 1006.5,28.5 1016.5,30.5 1016.0,42.0 1009.5,48.5 999.5,44.5" fill="#fff"/><polygon points="1006.5,28.5 1016.5,30.5 1016.0,42.0 1006.5,39.0" fill="url(#teal)"/><line x1="1006.5" y1="39.0" x2="1006.5" y2="28.5" stroke="#8ab8c4" stroke-width="0.6"/><line x1="1006.5" y1="39.0" x2="1016.0" y2="42.0" stroke="#8ab8c4" stroke-width="0.6"/><line x1="1006.5" y1="39.0" x2="999.5" y2="44.5" stroke="#8ab8c4" stroke-width="0.6"/><line x1="998.5" y1="34.5" x2="1009.0" y2="37.5" stroke="#2b6d7e" stroke-width="1.1" stroke-linecap="round"/><line x1="1009.0" y1="37.5" x2="1009.5" y2="48.5" stroke="#2b6d7e" stroke-width="1.1" stroke-linecap="round"/><line x1="1009.5" y1="48.5" x2="999.5" y2="44.5" stroke="#2b6d7e" stroke-width="1.1" stroke-linecap="round"/><line x1="999.5" y1="44.5" x2="998.5" y2="34.5" stroke="#2b6d7e" stroke-width="1.1" stroke-linecap="round"/><line x1="998.5" y1="34.5" x2="1006.5" y2="28.5" stroke="#2b6d7e" stroke-width="1.1" stroke-linecap="round"/><line x1="1006.5" y1="28.5" x2="1016.5" y2="30.5" stroke="#2b6d7e" stroke-width="1.1" stroke-linecap="round"/><line x1="1016.5" y1="30.5" x2="1009.0" y2="37.5" stroke="#2b6d7e" stroke-width="1.1" stroke-linecap="round"/><line x1="1016.5" y1="30.5" x2="1016.0" y2="42.0" stroke="#2b6d7e" stroke-width="1.1" stroke-linecap="round"/><line x1="1016.0" y1="42.0" x2="1009.5" y2="48.5" stroke="#2b6d7e" stroke-width="1.1" stroke-linecap="round"/><polygon points="1030.5,34.5 1038.5,28.5 1048.5,30.5 1048.0,42.0 1041.5,48.5 1031.5,44.5" fill="#fff"/><polygon points="1030.5,34.5 1038.5,28.5 1038.5,39.0 1031.5,44.5" fill="url(#teal)"/><line x1="1038.5" y1="39.0" x2="1038.5" y2="28.5" stroke="#8ab8c4" stroke-width="0.6"/><line x1="1038.5" y1="39.0" x2="1048.0" y2="42.0" stroke="#8ab8c4" stroke-width="0.6"/><line x1="1038.5" y1="39.0" x2="1031.5" y2="44.5" stroke="#8ab8c4" stroke-width="0.6"/><line x1="1030.5" y1="34.5" x2="1041.0" y2="37.5" stroke="#2b6d7e" stroke-width="1.1" stroke-linecap="round"/><line x1="1041.0" y1="37.5" x2="1041.5" y2="48.5" stroke="#2b6d7e" stroke-width="1.1" stroke-linecap="round"/><line x1="1041.5" y1="48.5" x2="1031.5" y2="44.5" stroke="#2b6d7e" stroke-width="1.1" stroke-linecap="round"/><line x1="1031.5" y1="44.5" x2="1030.5" y2="34.5" stroke="#2b6d7e" stroke-width="1.1" stroke-linecap="round"/><line x1="1030.5" y1="34.5" x2="1038.5" y2="28.5" stroke="#2b6d7e" stroke-width="1.1" stroke-linecap="round"/><line x1="1038.5" y1="28.5" x2="1048.5" y2="30.5" stroke="#2b6d7e" stroke-width="1.1" stroke-linecap="round"/><line x1="1048.5" y1="30.5" x2="1041.0" y2="37.5" stroke="#2b6d7e" stroke-width="1.1" stroke-linecap="round"/><line x1="1048.5" y1="30.5" x2="1048.0" y2="42.0" stroke="#2b6d7e" stroke-width="1.1" stroke-linecap="round"/><line x1="1048.0" y1="42.0" x2="1041.5" y2="48.5" stroke="#2b6d7e" stroke-width="1.1" stroke-linecap="round"/><polygon points="1062.0,34.5 1070.0,28.5 1080.0,30.5 1079.5,42.0 1073.0,48.5 1063.0,44.5" fill="#fff"/><polygon points="1063.0,44.5 1070.0,39.0 1079.5,42.0 1073.0,48.5" fill="url(#teal)"/><line x1="1070.0" y1="39.0" x2="1070.0" y2="28.5" stroke="#8ab8c4" stroke-width="0.6"/><line x1="1070.0" y1="39.0" x2="1079.5" y2="42.0" stroke="#8ab8c4" stroke-width="0.6"/><line x1="1070.0" y1="39.0" x2="1063.0" y2="44.5" stroke="#8ab8c4" stroke-width="0.6"/><line x1="1062.0" y1="34.5" x2="1072.5" y2="37.5" stroke="#2b6d7e" stroke-width="1.1" stroke-linecap="round"/><line x1="1072.5" y1="37.5" x2="1073.0" y2="48.5" stroke="#2b6d7e" stroke-width="1.1" stroke-linecap="round"/><line x1="1073.0" y1="48.5" x2="1063.0" y2="44.5" stroke="#2b6d7e" stroke-width="1.1" stroke-linecap="round"/><line x1="1063.0" y1="44.5" x2="1062.0" y2="34.5" stroke="#2b6d7e" stroke-width="1.1" stroke-linecap="round"/><line x1="1062.0" y1="34.5" x2="1070.0" y2="28.5" stroke="#2b6d7e" stroke-width="1.1" stroke-linecap="round"/><line x1="1070.0" y1="28.5" x2="1080.0" y2="30.5" stroke="#2b6d7e" stroke-width="1.1" stroke-linecap="round"/><line x1="1080.0" y1="30.5" x2="1072.5" y2="37.5" stroke="#2b6d7e" stroke-width="1.1" stroke-linecap="round"/><line x1="1080.0" y1="30.5" x2="1079.5" y2="42.0" stroke="#2b6d7e" stroke-width="1.1" stroke-linecap="round"/><line x1="1079.5" y1="42.0" x2="1073.0" y2="48.5" stroke="#2b6d7e" stroke-width="1.1" stroke-linecap="round"/><!--/CUBES-->
<!-- ===== ROW 2 ===== -->
<!-- box -->
<ellipse cx="86" cy="81" rx="6" ry="2" fill="url(#shad)"/>
<path d="M73.5 68 l3 -2.5 h13 l-2.5 2.5z" fill="#ffe060" stroke="#7a5500" stroke-width="0.8"/>
<path d="M87 68 l2.5 -2.5 v12.5 l-2.5 3z" fill="#e09000" stroke="#7a5500" stroke-width="0.8"/>
<rect x="73.5" y="68" width="13.5" height="13" fill="url(#gold)" stroke="#7a5500" stroke-width="0.8"/>
<!-- cylinder -->
<ellipse cx="118" cy="81" rx="6" ry="2" fill="url(#shad)"/>
<path d="M105.5 67.5 v12 a7.5 2.5 0 0 0 15 0 v-12z" fill="url(#goldl)" stroke="#7a5500" stroke-width="0.8"/>
<ellipse cx="113" cy="67.5" rx="7.5" ry="2.5" fill="#ffd84a" stroke="#7a5500" stroke-width="0.8"/>
<!-- sphere -->
<ellipse cx="150" cy="81" rx="6" ry="2" fill="url(#shad)"/>
<circle cx="144.5" cy="73.5" r="8" fill="url(#gold)" stroke="#9a6a00" stroke-width="0.6"/>
<!-- cone -->
<ellipse cx="181" cy="81" rx="6" ry="2" fill="url(#shad)"/>
<path d="M176.5 64.5 l-8.5 16 a8.5 2.5 0 0 0 17 0z" fill="url(#goldl)" stroke="#9a6a00" stroke-width="0.6"/>
<!-- torus -->
<ellipse cx="212" cy="79.5" rx="7" ry="2" fill="url(#shad)"/>
<ellipse cx="208" cy="73" rx="9.5" ry="6.5" fill="url(#gold)" stroke="#9a6a00" stroke-width="0.6"/>
<ellipse cx="208" cy="72" rx="4" ry="1.6" fill="#f5f0e8" stroke="#a07000" stroke-width="0.6"/>
<!-- primitives -->
<path d="M235 64.5 l-3.5 7 h7z" fill="#ffc800" stroke="#9a6a00" stroke-width="0.5"/>
<rect x="239" y="67" width="11.5" height="1.5" fill="#777"/>
<rect x="233" y="71" width="13" height="12" fill="url(#gold)"/>
<circle cx="235" cy="78" r="3.5" fill="none" stroke="#333" stroke-width="1.1"/>
<circle cx="235" cy="78" r="1.8" fill="none" stroke="#333" stroke-width="0.8"/>
<circle cx="246" cy="78.5" r="4.5" fill="none" stroke="#5a5aaa" stroke-width="1.2"/>
<!-- shape builder -->
<path d="M264 69 l2 -2 l2 2 l-2 2z" fill="#000"/>
<path d="M268 67 l4.5 -3.5" stroke="#e01010" stroke-width="1.6"/>
<rect x="273.5" y="63" width="8.5" height="1.6" fill="#111"/>
<path d="M278 66 v4 M276 68.5 l2 2 l2 -2" stroke="#e01010" stroke-width="1.4" fill="none"/>
<rect x="275.5" y="71.5" width="6" height="6" fill="#fff" stroke="#111" stroke-width="1.1"/>
<rect x="262.5" y="73" width="10" height="9" fill="url(#gold)" stroke="#9a6a00" stroke-width="0.5"/>
<path d="M275 82 l4 -2" stroke="#e01010" stroke-width="1.6"/>
<!-- extrude -->
<path d="M306 75 l3 -3 h15 l-3 3z" fill="#7090e0"/>
<rect x="306" y="75" width="15" height="7.5" fill="url(#pb)" stroke="#2a3aa0" stroke-width="0.5"/>
<path d="M321 75 l3 -3 v7.5 l-3 3z" fill="#2a40b0"/>
<path d="M315.5 64 l-5 5 h3 v5 h4 v-5 h3z" fill="url(#pbd)"/>
<!-- revolve -->
<path d="M346.5 65 a9 9 0 1 0 8 12.5 l-8 -3.5z" fill="url(#pb)" stroke="#1a2a90" stroke-width="0.6"/>
<circle cx="346.5" cy="74" r="2.5" fill="#f2f1f0"/><circle cx="346.5" cy="74" r="0.9" fill="#111"/>
<path d="M352 67 a8 8 0 0 1 3 9" stroke="#0a1a80" stroke-width="2.2" fill="none"/>
<path d="M350.5 65.5 l3.5 -1 l-0.5 3.5z" fill="#0a1a80"/>
<!-- mirror -->
<path d="M369 68 l6.5 -3.5 v15 l-6.5 3.5z" fill="url(#pb)" stroke="#1a2a90" stroke-width="0.6"/>
<path d="M381.5 64.5 l6.5 3.5 v15 l-6.5 -3.5z" fill="#2a48c0" stroke="#0a1a70" stroke-width="0.6"/>
<path d="M378.5 63.5 v20.5" stroke="#e81010" stroke-width="1.5" stroke-dasharray="3 1.5"/>
<!-- fillet -->
<ellipse cx="414" cy="81" rx="5" ry="1.5" fill="#444" opacity="0.7"/>
<path d="M410 77.5 h9.5 v4 l-9.5 1z" fill="#555"/>
<path d="M401 69 q2 -3 8 -3 h10 l-2 3 h-7 q-3 0 -3 4" fill="#1a3aa8"/>
<path d="M401 69 h8 v13 h-8z" fill="url(#pb)" stroke="#2a3aa0" stroke-width="0.5"/>
<!-- chamfer -->
<ellipse cx="445" cy="81" rx="5" ry="1.5" fill="#444" opacity="0.7"/>
<path d="M441 77.5 h10 v4 l-10 1z" fill="#555"/>
<path d="M432 69 l3 -3 h15 l-2 3z" fill="#2a58d0"/>
<path d="M432 69 h9 v13 h-9z" fill="url(#pb)" stroke="#2a3aa0" stroke-width="0.5"/>
<!-- ruled -->
<path d="M467 68 l13 -4 v12.5 l-13 4z" fill="url(#pb)"/>
<path d="M467 68 v12.5 M480 64 v12.5" stroke="#f01010" stroke-width="1.8"/>
<!-- loft -->
<path d="M500 67 l6 2.5 l5.5 0 v10 l-10 1.5z" fill="url(#pb)"/>
<path d="M502.5 65.5 l9 3 v10" stroke="#e01010" stroke-width="1.3" fill="none"/>
<rect x="498.5" y="75" width="3.5" height="5" fill="#fff" stroke="#e01010" stroke-width="1.1"/>
<!-- sweep -->
<path d="M531 73 q6 -2 9 -7 l6 -1 q1 10 -9 17 l-8 0z" fill="url(#pb)"/>
<path d="M535 66 l8 -1 M543 65 l3.5 -2 M544 66 l1 3" stroke="#e01010" stroke-width="1.3"/>
<rect x="531.5" y="75" width="5" height="6" fill="#fff" stroke="#e01010" stroke-width="1.2"/>
<path d="M526.5 78 h5" stroke="#e01010" stroke-width="1.6"/>
<!-- offset -->
<path d="M559 79.5 l6 -2.5 h11 l-5.5 4z" fill="#8a8a8a"/>
<path d="M559 75 l5 -3 h12 l-5 3.5z" fill="#8a8a8a"/>
<path d="M567.5 64.5 l-5 5 h3 v4 h4 v-4 h3z" fill="#8a8a8a"/>
<!-- thickness -->
<path d="M590.5 75 l3 -2.5 h15 l-3 2.5z" fill="#cfcfcf"/>
<rect x="590.5" y="75" width="15" height="8" fill="url(#gry)"/>
<path d="M605.5 75 l3 -2.5 v8 l-3 2.5z" fill="#9a9a9a"/>
<!-- union -->
<ellipse cx="650" cy="76.5" rx="5" ry="1.5" fill="#333" opacity="0.8"/>
<ellipse cx="646" cy="82" rx="5" ry="1.5" fill="#333" opacity="0.7"/>
<circle cx="646.5" cy="70" r="6.3" fill="url(#lbball)" stroke="#5a6ad0" stroke-width="0.6"/>
<circle cx="640" cy="75.8" r="7" fill="url(#bball)"/>
<!-- cut -->
<ellipse cx="678" cy="82" rx="6" ry="1.5" fill="#555" opacity="0.5"/>
<circle cx="671.8" cy="76" r="7" fill="url(#gball)"/>
<circle cx="677.5" cy="70" r="6.3" fill="#fff" stroke="#8a8a8a" stroke-width="1.1"/>
<!-- fuse -->
<ellipse cx="710" cy="82" rx="6" ry="1.5" fill="#555" opacity="0.5"/>
<circle cx="703" cy="76" r="7" fill="url(#gball)"/>
<circle cx="709" cy="70" r="6.3" fill="url(#gball)"/>
<!-- common -->
<circle cx="733.9" cy="76.5" r="6.5" fill="none" stroke="#8a8a8a" stroke-width="1"/>
<circle cx="741.5" cy="69.8" r="6.5" fill="none" stroke="#8a8a8a" stroke-width="1"/>
<path d="M735.5 70.5 q5 0 5 6 q-5 0 -5 -6z" fill="#888"/>
<ellipse cx="740" cy="81" rx="4" ry="1" fill="#777" opacity="0.6"/>
<!-- section -->
<ellipse cx="773" cy="82" rx="6" ry="1.5" fill="#555" opacity="0.6"/>
<path d="M767 70 l-6.5 12 a6.5 2 0 0 0 13 0z" fill="url(#gball)"/>
<circle cx="767.5" cy="68.5" r="4" fill="#ddd" stroke="#999" stroke-width="1"/>
<path d="M771 71 l6.5 5" stroke="#777" stroke-width="1"/>
<!-- cross sections -->
<path d="M791.5 64 l3 1.5 v17.5 l-3 -1.5z" fill="#bbb"/>
<path d="M794.5 65.5 l9 -1.5 l5 1 v13 l-14 3z" fill="#9a9a9a"/>
<rect x="796" y="68" width="7" height="9" fill="#c8c8c8" stroke="#888" stroke-width="0.8"/>
<path d="M807 71 h4 v7 h-4z" fill="#aaa"/>
<!-- compound -->
<path d="M823 78 l6 -3 h14 l-6 3z" fill="#aaa" opacity="0.8"/>
<path d="M823 71 l6 -3 h14 l-6 3z" fill="#aaa" opacity="0.8"/>
<path d="M828 66 l3 -2 h8 v17 l-3 2 h-8z" fill="url(#gball)"/>
<path d="M828 66 h8 v17" stroke="#666" stroke-width="0.6" fill="none"/>
</svg>


<div class="t" style="left:65px;top:103px;letter-spacing:0.15px">active command:</div><div class="t" style="left:168px;top:103px;font-weight:bold">None</div>

<!-- right row3 controls -->
<!-- None button -->
<div class="a" style="left:921px;top:100px;width:73px;height:21px;border:1px solid #c5c2bc;border-radius:3px;background:linear-gradient(#fdfdfd,#ebeae8)"></div>
<svg class="a" style="left:931px;top:103px" width="16" height="16"><path d="M3 4 l8 -2 l3 9 l-8 3z" fill="#8fc0d0" stroke="#2b6d7e" stroke-width="1.2"/><path d="M5.5 6 l4 -1 l1.5 4.5 l-4 1.5z" fill="#fff" stroke="#2b6d7e" stroke-width="0.8"/></svg>
<div class="t" style="left:950px;top:103px">None</div>
<!-- link -->
<div class="a" style="left:1001px;top:100px;width:18px;height:21px;border:1px solid #c5c2bc;border-radius:3px;background:linear-gradient(#fdfdfd,#ebeae8)"></div>
<svg class="a" style="left:1003px;top:104px" width="14" height="14"><path d="M3 10 l7 -6" stroke="#2b8a70" stroke-width="3.6" stroke-linecap="round"/><path d="M3.5 9.5 l6 -5" stroke="#c8f0e0" stroke-width="1" stroke-linecap="round"/></svg>
<!-- black swatch -->
<div class="a" style="left:1026px;top:100px;width:17px;height:21px;border:1px solid #c5c2bc;border-radius:3px;background:linear-gradient(#fdfdfd,#ebeae8)"></div>
<div class="a" style="left:1028px;top:104px;width:13px;height:13px;background:#000"></div>
<!-- gray swatch -->
<div class="a" style="left:1050px;top:100px;width:18px;height:21px;border:1px solid #c5c2bc;border-radius:3px;background:linear-gradient(#fdfdfd,#ebeae8)"></div>
<div class="a" style="left:1052px;top:104px;width:14px;height:13px;background:#cdcdcd"></div>
<!-- 2px spin -->
<div class="a" style="left:1075px;top:101px;width:42px;height:19px;border:1px solid #c5c2bc;border-radius:3px;background:#fff"></div>
<div class="a" style="left:1103px;top:102px;width:1px;height:17px;background:#dcdad6"></div>
<svg class="a" style="left:1105px;top:104px" width="10" height="14"><path d="M2.5 4.5 l2 -2.5 l2 2.5z M2.5 9 l2 2.5 l2 -2.5z" fill="#777"/></svg>
<div class="t" style="left:1080px;top:104px">2px</div>
<!-- 0,20 spin -->
<div class="a" style="left:1124px;top:101px;width:42px;height:19px;border:1px solid #c5c2bc;border-radius:3px;background:#fff;overflow:hidden"></div>
<div class="a" style="left:1127px;top:104px;width:23px;height:15px;overflow:hidden"><div class="t" style="left:1px;top:0">0,20</div></div>
<div class="a" style="left:1152px;top:102px;width:1px;height:17px;background:#dcdad6"></div>
<svg class="a" style="left:1154px;top:104px" width="10" height="14"><path d="M2.5 4.5 l2 -2.5 l2 2.5z M2.5 9 l2 2.5 l2 -2.5z" fill="#777"/></svg>
<!-- last icon button -->
<div class="a" style="left:1173px;top:100px;width:18px;height:21px;border:1px solid #c5c2bc;border-radius:3px;background:linear-gradient(#fdfdfd,#ebeae8)"></div>
<svg class="a" style="left:1175px;top:103px" width="15" height="16"><rect x="1" y="2" width="6" height="11" fill="#f0c020" stroke="#555" stroke-width="0.6"/><rect x="1" y="2" width="6" height="4" fill="#e02020"/><rect x="1" y="9" width="6" height="4" fill="#20a040"/><path d="M5 6 h4 v-3 l5 5 l-5 5 v-3 h-4z" fill="#3a70d0" stroke="#1a3a90" stroke-width="0.6"/></svg>


<!-- combo view -->
<div class="t" style="left:59px;top:139px;letter-spacing:0.25px">Combo View</div>
<div class="a" style="left:290px;top:141px;width:10px;height:10px;border:1px solid #8a8884;border-radius:2px"></div>
<div class="a" style="left:305px;top:141px;width:10px;height:10px;border:1px solid #8a8884;border-radius:2px"></div>
<svg class="a" style="left:290px;top:141px" width="26" height="10"><rect x="4.5" y="2.5" width="3.5" height="3.5" fill="none" stroke="#555" stroke-width="0.9"/><rect x="2.5" y="4.5" width="3.5" height="3.5" fill="#fff" stroke="#555" stroke-width="0.9"/><path d="M17.5 2.5l5 5M22.5 2.5l-5 5" stroke="#333" stroke-width="1.6"/></svg>

<!-- combo frame -->
<div class="a" style="left:58px;top:183px;width:259px;height:465px;border:1px solid #cfccc7;border-radius:2px;background:#f2f1f0"></div>
<!-- tabs -->
<div class="a" style="left:113px;top:160px;width:45px;height:24px;border:1px solid #c9c6c1;border-bottom:none;border-radius:3px 3px 0 0;background:linear-gradient(#efeeec,#e3e2df)"></div>
<div class="a" style="left:58px;top:158px;width:55px;height:26px;border:1px solid #c9c6c1;border-bottom:none;border-radius:3px 3px 0 0;background:#f6f6f5"></div>
<div class="t" style="left:63.5px;top:162.5px;letter-spacing:0.55px">Project</div>
<div class="t" style="left:120.5px;top:163.5px;letter-spacing:-0.25px">Tasks</div>

<!-- tree -->
<div class="box" style="left:59px;top:183px;width:257px;height:212px"></div>
<div class="hdr" style="left:60px;top:184px;width:255px;height:23px"></div>
<div class="t" style="left:63px;top:189px;letter-spacing:0.28px">Labels &amp; Attributes</div>
<div class="t" style="left:62.5px;top:208px;letter-spacing:0.45px">Application</div>
<svg class="a" style="left:66px;top:229px" width="30" height="26"><path d="M1 1h7l-3.5 5z" fill="#555"/><path d="M18 17h7l-3.5 5z" fill="#555"/></svg>
<div class="t" style="left:99px;top:225px;font-weight:bold;color:#262626">T34-ej1-bocadillo-comic</div>
<div class="t" style="left:117px;top:242px;font-weight:bold;color:#262626">Bocadillo</div>
<div class="t" style="left:134px;top:258px;color:#b5b3b0">svg-bocadillo</div>
<svg class="a" style="left:80px;top:224px" width="50" height="48" viewBox="80 224 50 48">
<path d="M83 225.5 h7 l3 3 v10.5 h-10z" fill="#fff" stroke="#222" stroke-width="1"/>
<path d="M85 229h4M85 231h5M85 233h2M85 235h5" stroke="#444" stroke-width="0.8"/>
<circle cx="90" cy="235.5" r="2.2" fill="#c02090"/><circle cx="89.5" cy="235" r="1" fill="#30a0e0"/>
<path d="M99 246 l2.5 -2.5 h8 v8.5 l-2.5 2.5 h-8z" fill="#0a20f0" stroke="#000" stroke-width="1.1" stroke-linejoin="round"/>
<path d="M99 246 h8 l2.5 -2.5 M107 246 v8.5" stroke="#000" stroke-width="1" fill="none"/>
<path d="M117 263 l2.5 -2.5 h8 v8 l-2.5 2.5 h-8z" fill="#777" stroke="#666" stroke-width="0.8" stroke-linejoin="round"/>
<path d="M117 263 h8 l2.5 -2.5 M125 263 v8" stroke="#9a9a9a" stroke-width="0.8" fill="none"/>
</svg>

<div class="a" style="left:184px;top:395px;width:7px;height:3px;background:repeating-linear-gradient(90deg,#bbb 0 1px,transparent 1px 3px)"></div>

<!-- property -->
<div class="box" style="left:60px;top:401px;width:254px;height:219px;border-color:#c7c4bf"></div>
<div class="hdr" style="left:61px;top:402px;width:252px;height:22px"></div>
<div class="a" style="left:148px;top:403px;width:1px;height:20px;background:#d4d1cc"></div>
<div class="t" style="left:64.5px;top:406px;letter-spacing:0.55px">Property</div>
<div class="t" style="left:153px;top:406px;letter-spacing:0.35px">Value</div>
<!-- View / Data tabs -->
<svg class="a" style="left:58px;top:619px" width="90" height="30">
<path d="M1 1 L8.5 24 Q10 27 13 27 L33 27 Q36 27 37 24 L44 1" fill="#fff" stroke="#444" stroke-width="1"/>
<path d="M45 3 L51 24 Q52 26.5 55 26.5 L74 26.5 Q77 26.5 78 24 L85 3" fill="#f0efed" stroke="#444" stroke-width="1"/>
</svg>
<div class="t" style="left:67px;top:626px">View</div>
<div class="t" style="left:110px;top:625px">Data</div>

<!-- vertical splitter -->
<div class="a" style="left:319px;top:388px;width:2px;height:8px;background:repeating-linear-gradient(#bbb 0 1px,transparent 1px 3px)"></div>
<div class="a" style="left:628px;top:130px;width:7px;height:2px;background:repeating-linear-gradient(90deg,#bbb 0 1px,transparent 1px 3px)"></div>

<!-- 3D view -->
<div class="a" style="left:321px;top:134px;width:879px;height:487px;background:#fbfbfb"></div>
<div id="view" class="a"></div>
<svg class="a" style="left:0;top:0" width="1200" height="675" viewBox="0 0 1200 675">
<g fill="#151505" stroke="#151505" stroke-width="2.2" stroke-linejoin="round"><polygon points="538.4,473.7 667.0,380.6 661.8,379.9 654.5,378.9 645.9,377.7 636.8,376.5 627.9,375.2 620.0,374.0 613.0,372.9 606.2,371.8 599.7,370.8 593.4,369.6 587.4,368.4 581.7,367.0 576.2,365.4 571.0,363.6 566.0,361.7 561.4,359.7 557.0,357.8 553.0,356.0 549.4,354.3 546.3,352.7 543.5,351.2 540.9,349.6 538.3,347.9 535.7,346.0 533.0,343.9 530.3,341.8 527.7,339.5 525.3,337.1 523.0,334.6 521.0,332.0 519.3,329.2 517.7,326.1 516.4,323.0 515.3,319.9 514.3,316.8 513.5,314.0 512.9,311.5 512.4,309.4 512.1,307.3 512.0,305.2 512.0,302.8 512.2,300.0 512.4,296.7 512.6,293.0 513.0,289.0 513.6,285.0 514.6,281.0 516.0,277.3 517.7,273.8 519.7,270.4 522.1,267.0 524.8,263.8 528.1,260.5 532.0,257.3 536.6,254.1 542.0,250.8 547.9,247.6 554.0,244.5 560.4,241.5 566.7,238.7 573.0,236.1 579.4,233.6 586.0,231.2 592.8,229.1 599.7,227.1 606.7,225.3 613.9,223.8 621.1,222.5 628.5,221.4 636.1,220.4 643.9,219.5 652.0,218.7 660.2,217.9 668.4,217.2 676.8,216.6 685.7,216.1 695.1,215.7 705.3,215.5 716.8,215.4 729.5,215.5 742.8,215.8 756.1,216.1 768.7,216.6 780.0,217.3 789.4,218.0 797.3,218.8 804.6,219.8 812.1,221.0 820.6,222.5 831.0,224.5 844.0,227.0 859.2,229.9 875.4,233.2 891.6,236.8 906.8,240.6 920.0,244.5 931.2,248.7 941.3,253.1 950.4,257.8 958.6,262.7 966.2,267.6 973.2,272.5 979.6,277.5 985.4,282.8 990.4,288.2 994.8,293.4 998.5,298.4 1001.7,303.0 1004.1,307.1 1005.8,310.7 1006.9,314.0 1007.4,317.3 1007.7,320.7 1007.7,324.4 1007.6,328.4 1007.2,332.7 1006.4,337.0 1005.3,341.3 1003.7,345.5 1001.7,349.4 999.4,353.0 996.8,356.3 993.7,359.6 990.1,362.7 985.7,365.7 980.3,368.8 973.8,372.0 966.4,375.2 958.1,378.5 949.3,381.5 940.0,384.3 930.6,386.6 920.4,388.5 909.3,389.9 897.7,391.1 886.4,392.1 875.8,392.9 866.6,393.7 859.2,394.4 853.2,394.9 848.0,395.3 843.0,395.5 837.5,395.7 831.0,395.7 823.3,395.6 814.9,395.4 806.0,395.0 797.0,394.6 788.3,394.1 780.0,393.7 771.8,393.2 763.3,392.7 755.0,392.2 747.4,391.7 741.0,391.2 736.3,390.9"/><polygon points="538.7,474.7 667.3,381.6 662.1,380.9 654.8,379.9 646.2,378.7 637.1,377.5 628.2,376.2 620.3,375.0 613.3,373.9 606.6,372.8 600.0,371.8 593.8,370.6 587.8,369.4 582.0,368.0 576.6,366.4 571.3,364.6 566.4,362.7 561.7,360.7 557.3,358.8 553.3,357.0 549.8,355.3 546.6,353.7 543.8,352.2 541.2,350.6 538.6,348.9 536.0,347.0 533.3,344.9 530.7,342.8 528.1,340.5 525.6,338.1 523.3,335.6 521.3,333.0 519.6,330.2 518.1,327.1 516.7,324.0 515.6,320.9 514.6,317.8 513.8,315.0 513.2,312.5 512.8,310.4 512.5,308.3 512.4,306.2 512.4,303.8 512.5,301.0 512.7,297.7 513.0,294.0 513.4,290.0 514.0,286.0 514.9,282.0 516.3,278.3 518.1,274.8 520.1,271.4 522.4,268.0 525.2,264.8 528.4,261.5 532.3,258.3 537.0,255.1 542.3,251.8 548.2,248.6 554.4,245.5 560.7,242.5 567.0,239.7 573.3,237.1 579.8,234.6 586.4,232.2 593.1,230.1 600.0,228.1 607.0,226.3 614.2,224.8 621.4,223.5 628.9,222.4 636.4,221.4 644.3,220.5 652.3,219.7 660.5,218.9 668.7,218.2 677.1,217.6 686.0,217.1 695.4,216.7 705.6,216.5 717.1,216.4 729.8,216.5 743.1,216.8 756.4,217.1 769.0,217.6 780.3,218.3 789.8,219.0 797.7,219.8 804.9,220.8 812.4,222.0 820.9,223.5 831.3,225.5 844.4,228.0 859.5,230.9 875.7,234.2 891.9,237.8 907.1,241.6 920.3,245.5 931.6,249.7 941.6,254.1 950.7,258.8 959.0,263.7 966.5,268.6 973.5,273.5 980.0,278.5 985.7,283.8 990.7,289.2 995.1,294.4 998.9,299.4 1002.0,304.0 1004.5,308.1 1006.1,311.7 1007.2,315.0 1007.8,318.3 1008.0,321.7 1008.0,325.4 1007.9,329.4 1007.5,333.7 1006.7,338.0 1005.6,342.3 1004.1,346.5 1002.0,350.4 999.7,354.0 997.1,357.3 994.1,360.6 990.4,363.7 986.0,366.7 980.6,369.8 974.2,373.0 966.7,376.2 958.4,379.5 949.6,382.5 940.4,385.3 930.9,387.6 920.8,389.5 909.6,390.9 898.1,392.1 886.7,393.1 876.1,393.9 866.9,394.7 859.5,395.4 853.5,395.9 848.3,396.3 843.3,396.5 837.8,396.7 831.3,396.7 823.6,396.6 815.2,396.4 806.3,396.0 797.4,395.6 788.6,395.1 780.3,394.7 772.1,394.2 763.6,393.7 755.3,393.2 747.7,392.7 741.3,392.2 736.6,391.9"/><polygon points="539.1,475.7 667.7,382.6 662.5,381.9 655.2,380.9 646.6,379.7 637.4,378.5 628.5,377.2 620.7,376.0 613.7,374.9 606.9,373.8 600.4,372.8 594.1,371.6 588.1,370.4 582.4,369.0 576.9,367.4 571.7,365.6 566.7,363.7 562.0,361.7 557.7,359.8 553.7,358.0 550.1,356.3 547.0,354.7 544.1,353.2 541.5,351.6 539.0,349.9 536.4,348.0 533.7,345.9 531.0,343.8 528.4,341.5 525.9,339.1 523.7,336.6 521.7,334.0 519.9,331.2 518.4,328.1 517.1,325.0 515.9,321.9 515.0,318.8 514.2,316.0 513.5,313.5 513.1,311.4 512.8,309.3 512.7,307.2 512.7,304.8 512.9,302.0 513.1,298.7 513.3,295.0 513.7,291.0 514.3,287.0 515.3,283.0 516.7,279.3 518.4,275.8 520.4,272.4 522.7,269.0 525.5,265.8 528.8,262.5 532.7,259.3 537.3,256.1 542.7,252.8 548.5,249.6 554.7,246.5 561.1,243.5 567.4,240.7 573.7,238.1 580.1,235.6 586.7,233.2 593.4,231.1 600.3,229.1 607.4,227.3 614.5,225.8 621.8,224.5 629.2,223.4 636.8,222.4 644.6,221.5 652.7,220.7 660.8,219.9 669.0,219.2 677.5,218.6 686.3,218.1 695.8,217.7 706.0,217.5 717.5,217.4 730.2,217.5 743.5,217.8 756.7,218.1 769.3,218.6 780.7,219.3 790.1,220.0 798.0,220.8 805.3,221.8 812.7,223.0 821.2,224.5 831.7,226.5 844.7,229.0 859.8,231.9 876.0,235.2 892.2,238.8 907.5,242.6 920.7,246.5 931.9,250.7 942.0,255.1 951.0,259.8 959.3,264.7 966.8,269.6 973.9,274.5 980.3,279.5 986.0,284.8 991.1,290.2 995.4,295.4 999.2,300.4 1002.4,305.0 1004.8,309.1 1006.5,312.7 1007.5,316.0 1008.1,319.3 1008.3,322.7 1008.4,326.4 1008.2,330.4 1007.8,334.7 1007.1,339.0 1006.0,343.3 1004.4,347.5 1002.4,351.4 1000.0,355.0 997.4,358.3 994.4,361.6 990.8,364.7 986.3,367.7 981.0,370.8 974.5,374.0 967.0,377.2 958.8,380.5 949.9,383.5 940.7,386.3 931.3,388.6 921.1,390.5 909.9,391.9 898.4,393.1 887.0,394.1 876.5,394.9 867.3,395.7 859.9,396.4 853.9,396.9 848.7,397.3 843.6,397.5 838.2,397.7 831.7,397.7 824.0,397.6 815.5,397.4 806.7,397.0 797.7,396.6 788.9,396.1 780.7,395.7 772.5,395.2 763.9,394.7 755.6,394.2 748.0,393.7 741.6,393.2 737.0,392.9"/><polygon points="539.4,476.7 668.0,383.6 662.8,382.9 655.5,381.9 646.9,380.7 637.8,379.5 628.9,378.2 621.0,377.0 614.0,375.9 607.2,374.8 600.7,373.8 594.4,372.6 588.4,371.4 582.7,370.0 577.2,368.4 572.0,366.6 567.0,364.7 562.4,362.7 558.0,360.8 554.0,359.0 550.4,357.3 547.3,355.7 544.5,354.2 541.9,352.6 539.3,350.9 536.7,349.0 534.0,346.9 531.3,344.8 528.7,342.5 526.3,340.1 524.0,337.6 522.0,335.0 520.3,332.2 518.7,329.1 517.4,326.0 516.3,322.9 515.3,319.8 514.5,317.0 513.9,314.5 513.4,312.4 513.1,310.3 513.0,308.2 513.0,305.8 513.2,303.0 513.4,299.7 513.6,296.0 514.0,292.0 514.6,288.0 515.6,284.0 517.0,280.3 518.7,276.8 520.7,273.4 523.1,270.0 525.8,266.8 529.1,263.5 533.0,260.3 537.6,257.1 543.0,253.8 548.9,250.6 555.0,247.5 561.4,244.5 567.7,241.7 574.0,239.1 580.4,236.6 587.0,234.2 593.8,232.1 600.7,230.1 607.7,228.3 614.9,226.8 622.1,225.5 629.5,224.4 637.1,223.4 644.9,222.5 653.0,221.7 661.2,220.9 669.4,220.2 677.8,219.6 686.7,219.1 696.1,218.7 706.3,218.5 717.8,218.4 730.5,218.5 743.8,218.8 757.1,219.1 769.7,219.6 781.0,220.3 790.4,221.0 798.3,221.8 805.6,222.8 813.1,224.0 821.6,225.5 832.0,227.5 845.0,230.0 860.2,232.9 876.4,236.2 892.6,239.8 907.8,243.6 921.0,247.5 932.2,251.7 942.3,256.1 951.4,260.8 959.6,265.7 967.2,270.6 974.2,275.5 980.6,280.5 986.4,285.8 991.4,291.2 995.8,296.4 999.5,301.4 1002.7,306.0 1005.1,310.1 1006.8,313.7 1007.9,317.0 1008.4,320.3 1008.7,323.7 1008.7,327.4 1008.6,331.4 1008.2,335.7 1007.4,340.0 1006.3,344.3 1004.7,348.5 1002.7,352.4 1000.4,356.0 997.8,359.3 994.7,362.6 991.1,365.7 986.7,368.7 981.3,371.8 974.8,375.0 967.4,378.2 959.1,381.5 950.3,384.5 941.0,387.3 931.6,389.6 921.4,391.5 910.3,392.9 898.7,394.1 887.4,395.1 876.8,395.9 867.6,396.7 860.2,397.4 854.2,397.9 849.0,398.3 844.0,398.5 838.5,398.7 832.0,398.7 824.3,398.6 815.9,398.4 807.0,398.0 798.0,397.6 789.3,397.1 781.0,396.7 772.8,396.2 764.3,395.7 756.0,395.2 748.4,394.7 742.0,394.2 737.3,393.9"/><polygon points="539.7,477.7 668.3,384.6 663.1,383.9 655.8,382.9 647.2,381.7 638.1,380.5 629.2,379.2 621.3,378.0 614.3,376.9 607.6,375.8 601.0,374.8 594.8,373.6 588.8,372.4 583.0,371.0 577.6,369.4 572.3,367.6 567.4,365.7 562.7,363.7 558.3,361.8 554.3,360.0 550.8,358.3 547.6,356.7 544.8,355.2 542.2,353.6 539.6,351.9 537.0,350.0 534.3,347.9 531.7,345.8 529.1,343.5 526.6,341.1 524.3,338.6 522.3,336.0 520.6,333.2 519.1,330.1 517.7,327.0 516.6,323.9 515.6,320.8 514.8,318.0 514.2,315.5 513.8,313.4 513.5,311.3 513.4,309.2 513.4,306.8 513.5,304.0 513.7,300.7 514.0,297.0 514.4,293.0 515.0,289.0 515.9,285.0 517.3,281.3 519.1,277.8 521.1,274.4 523.4,271.0 526.2,267.8 529.4,264.5 533.3,261.3 538.0,258.1 543.3,254.8 549.2,251.6 555.4,248.5 561.7,245.5 568.0,242.7 574.3,240.1 580.8,237.6 587.4,235.2 594.1,233.1 601.0,231.1 608.0,229.3 615.2,227.8 622.4,226.5 629.9,225.4 637.4,224.4 645.3,223.5 653.3,222.7 661.5,221.9 669.7,221.2 678.1,220.6 687.0,220.1 696.4,219.7 706.6,219.5 718.1,219.4 730.8,219.5 744.1,219.8 757.4,220.1 770.0,220.6 781.3,221.3 790.8,222.0 798.7,222.8 805.9,223.8 813.4,225.0 821.9,226.5 832.3,228.5 845.4,231.0 860.5,233.9 876.7,237.2 892.9,240.8 908.1,244.6 921.3,248.5 932.6,252.7 942.6,257.1 951.7,261.8 960.0,266.7 967.5,271.6 974.5,276.5 981.0,281.5 986.7,286.8 991.7,292.2 996.1,297.4 999.9,302.4 1003.0,307.0 1005.5,311.1 1007.1,314.7 1008.2,318.0 1008.8,321.3 1009.0,324.7 1009.0,328.4 1008.9,332.4 1008.5,336.7 1007.7,341.0 1006.6,345.3 1005.1,349.5 1003.0,353.4 1000.7,357.0 998.1,360.3 995.1,363.6 991.4,366.7 987.0,369.7 981.6,372.8 975.2,376.0 967.7,379.2 959.4,382.5 950.6,385.5 941.4,388.3 931.9,390.6 921.8,392.5 910.6,393.9 899.1,395.1 887.7,396.1 877.1,396.9 867.9,397.7 860.5,398.4 854.5,398.9 849.3,399.3 844.3,399.5 838.8,399.7 832.3,399.7 824.6,399.6 816.2,399.4 807.3,399.0 798.4,398.6 789.6,398.1 781.3,397.7 773.1,397.2 764.6,396.7 756.3,396.2 748.7,395.7 742.3,395.2 737.6,394.9"/><polygon points="540.1,478.7 668.7,385.6 663.5,384.9 656.2,383.9 647.6,382.7 638.4,381.5 629.5,380.2 621.7,379.0 614.7,377.9 607.9,376.8 601.4,375.8 595.1,374.6 589.1,373.4 583.4,372.0 577.9,370.4 572.7,368.6 567.7,366.7 563.0,364.7 558.7,362.8 554.7,361.0 551.1,359.3 548.0,357.7 545.1,356.2 542.5,354.6 540.0,352.9 537.4,351.0 534.7,348.9 532.0,346.8 529.4,344.5 526.9,342.1 524.7,339.6 522.7,337.0 520.9,334.2 519.4,331.1 518.1,328.0 516.9,324.9 516.0,321.8 515.2,319.0 514.5,316.5 514.1,314.4 513.8,312.3 513.7,310.2 513.7,307.8 513.9,305.0 514.1,301.7 514.3,298.0 514.7,294.0 515.3,290.0 516.3,286.0 517.7,282.3 519.4,278.8 521.4,275.4 523.7,272.0 526.5,268.8 529.8,265.5 533.7,262.3 538.3,259.1 543.7,255.8 549.5,252.6 555.7,249.5 562.1,246.5 568.4,243.7 574.7,241.1 581.1,238.6 587.7,236.2 594.4,234.1 601.3,232.1 608.4,230.3 615.5,228.8 622.8,227.5 630.2,226.4 637.8,225.4 645.6,224.5 653.7,223.7 661.8,222.9 670.0,222.2 678.5,221.6 687.3,221.1 696.8,220.7 707.0,220.5 718.5,220.4 731.2,220.5 744.5,220.8 757.7,221.1 770.3,221.6 781.7,222.3 791.1,223.0 799.0,223.8 806.3,224.8 813.7,226.0 822.2,227.5 832.7,229.5 845.7,232.0 860.8,234.9 877.0,238.2 893.2,241.8 908.5,245.6 921.7,249.5 932.9,253.7 943.0,258.1 952.0,262.8 960.3,267.7 967.8,272.6 974.9,277.5 981.3,282.5 987.0,287.8 992.1,293.2 996.4,298.4 1000.2,303.4 1003.4,308.0 1005.8,312.1 1007.5,315.7 1008.5,319.0 1009.1,322.3 1009.3,325.7 1009.4,329.4 1009.2,333.4 1008.8,337.7 1008.1,342.0 1007.0,346.3 1005.4,350.5 1003.4,354.4 1001.0,358.0 998.4,361.3 995.4,364.6 991.8,367.7 987.3,370.7 982.0,373.8 975.5,377.0 968.0,380.2 959.8,383.5 950.9,386.5 941.7,389.3 932.3,391.6 922.1,393.5 910.9,394.9 899.4,396.1 888.0,397.1 877.5,397.9 868.3,398.7 860.9,399.4 854.9,399.9 849.7,400.3 844.6,400.5 839.2,400.7 832.7,400.7 825.0,400.6 816.5,400.4 807.7,400.0 798.7,399.6 789.9,399.1 781.7,398.7 773.5,398.2 764.9,397.7 756.6,397.2 749.0,396.7 742.6,396.2 738.0,395.9"/><polygon points="540.4,479.7 669.0,386.6 663.8,385.9 656.5,384.9 647.9,383.7 638.8,382.5 629.9,381.2 622.0,380.0 615.0,378.9 608.2,377.8 601.7,376.8 595.4,375.6 589.4,374.4 583.7,373.0 578.2,371.4 573.0,369.6 568.0,367.7 563.4,365.7 559.0,363.8 555.0,362.0 551.4,360.3 548.3,358.7 545.5,357.2 542.9,355.6 540.3,353.9 537.7,352.0 535.0,349.9 532.3,347.8 529.7,345.5 527.3,343.1 525.0,340.6 523.0,338.0 521.3,335.2 519.7,332.1 518.4,329.0 517.3,325.9 516.3,322.8 515.5,320.0 514.9,317.5 514.4,315.4 514.1,313.3 514.0,311.2 514.0,308.8 514.2,306.0 514.4,302.7 514.6,299.0 515.0,295.0 515.6,291.0 516.6,287.0 518.0,283.3 519.7,279.8 521.7,276.4 524.1,273.0 526.8,269.8 530.1,266.5 534.0,263.3 538.6,260.1 544.0,256.8 549.9,253.6 556.0,250.5 562.4,247.5 568.7,244.7 575.0,242.1 581.4,239.6 588.0,237.2 594.8,235.1 601.7,233.1 608.7,231.3 615.9,229.8 623.1,228.5 630.5,227.4 638.1,226.4 645.9,225.5 654.0,224.7 662.2,223.9 670.4,223.2 678.8,222.6 687.7,222.1 697.1,221.7 707.3,221.5 718.8,221.4 731.5,221.5 744.8,221.8 758.1,222.1 770.7,222.6 782.0,223.3 791.4,224.0 799.3,224.8 806.6,225.8 814.1,227.0 822.6,228.5 833.0,230.5 846.0,233.0 861.2,235.9 877.4,239.2 893.6,242.8 908.8,246.6 922.0,250.5 933.2,254.7 943.3,259.1 952.4,263.8 960.6,268.7 968.2,273.6 975.2,278.5 981.6,283.5 987.4,288.8 992.4,294.2 996.8,299.4 1000.5,304.4 1003.7,309.0 1006.1,313.1 1007.8,316.7 1008.9,320.0 1009.4,323.3 1009.7,326.7 1009.7,330.4 1009.6,334.4 1009.2,338.7 1008.4,343.0 1007.3,347.3 1005.7,351.5 1003.7,355.4 1001.4,359.0 998.8,362.3 995.7,365.6 992.1,368.7 987.7,371.7 982.3,374.8 975.8,378.0 968.4,381.2 960.1,384.5 951.3,387.5 942.0,390.3 932.6,392.6 922.4,394.5 911.3,395.9 899.7,397.1 888.4,398.1 877.8,398.9 868.6,399.7 861.2,400.4 855.2,400.9 850.0,401.3 845.0,401.5 839.5,401.7 833.0,401.7 825.3,401.6 816.9,401.4 808.0,401.0 799.0,400.6 790.3,400.1 782.0,399.7 773.8,399.2 765.3,398.7 757.0,398.2 749.4,397.7 743.0,397.2 738.3,396.9"/><polygon points="540.7,480.7 669.3,387.6 664.1,386.9 656.8,385.9 648.2,384.7 639.1,383.5 630.2,382.2 622.3,381.0 615.3,379.9 608.6,378.8 602.0,377.8 595.8,376.6 589.8,375.4 584.0,374.0 578.6,372.4 573.3,370.6 568.4,368.7 563.7,366.7 559.3,364.8 555.3,363.0 551.8,361.3 548.6,359.7 545.8,358.2 543.2,356.6 540.6,354.9 538.0,353.0 535.3,350.9 532.7,348.8 530.1,346.5 527.6,344.1 525.3,341.6 523.3,339.0 521.6,336.2 520.1,333.1 518.7,330.0 517.6,326.9 516.6,323.8 515.8,321.0 515.2,318.5 514.8,316.4 514.5,314.3 514.4,312.2 514.4,309.8 514.5,307.0 514.7,303.7 515.0,300.0 515.4,296.0 516.0,292.0 516.9,288.0 518.3,284.3 520.1,280.8 522.1,277.4 524.4,274.0 527.2,270.8 530.4,267.5 534.3,264.3 539.0,261.1 544.3,257.8 550.2,254.6 556.4,251.5 562.7,248.5 569.0,245.7 575.3,243.1 581.8,240.6 588.4,238.2 595.1,236.1 602.0,234.1 609.0,232.3 616.2,230.8 623.4,229.5 630.9,228.4 638.4,227.4 646.3,226.5 654.3,225.7 662.5,224.9 670.7,224.2 679.1,223.6 688.0,223.1 697.4,222.7 707.6,222.5 719.1,222.4 731.8,222.5 745.1,222.8 758.4,223.1 771.0,223.6 782.3,224.3 791.8,225.0 799.7,225.8 806.9,226.8 814.4,228.0 822.9,229.5 833.3,231.5 846.4,234.0 861.5,236.9 877.7,240.2 893.9,243.8 909.1,247.6 922.3,251.5 933.6,255.7 943.6,260.1 952.7,264.8 961.0,269.7 968.5,274.6 975.5,279.5 982.0,284.5 987.7,289.8 992.7,295.2 997.1,300.4 1000.9,305.4 1004.0,310.0 1006.5,314.1 1008.1,317.7 1009.2,321.0 1009.8,324.3 1010.0,327.7 1010.0,331.4 1009.9,335.4 1009.5,339.7 1008.7,344.0 1007.6,348.3 1006.1,352.5 1004.0,356.4 1001.7,360.0 999.1,363.3 996.1,366.6 992.4,369.7 988.0,372.7 982.6,375.8 976.2,379.0 968.7,382.2 960.4,385.5 951.6,388.5 942.4,391.3 932.9,393.6 922.8,395.5 911.6,396.9 900.1,398.1 888.7,399.1 878.1,399.9 868.9,400.7 861.5,401.4 855.5,401.9 850.3,402.3 845.3,402.5 839.8,402.7 833.3,402.7 825.6,402.6 817.2,402.4 808.3,402.0 799.4,401.6 790.6,401.1 782.3,400.7 774.1,400.2 765.6,399.7 757.3,399.2 749.7,398.7 743.3,398.2 738.6,397.9"/><polygon points="541.1,481.7 669.7,388.6 664.5,387.9 657.2,386.9 648.6,385.7 639.4,384.5 630.5,383.2 622.7,382.0 615.7,380.9 608.9,379.8 602.4,378.8 596.1,377.6 590.1,376.4 584.4,375.0 578.9,373.4 573.7,371.6 568.7,369.7 564.0,367.7 559.7,365.8 555.7,364.0 552.1,362.3 549.0,360.7 546.1,359.2 543.5,357.6 541.0,355.9 538.4,354.0 535.7,351.9 533.0,349.8 530.4,347.5 527.9,345.1 525.7,342.6 523.7,340.0 521.9,337.2 520.4,334.1 519.1,331.0 517.9,327.9 517.0,324.8 516.2,322.0 515.5,319.5 515.1,317.4 514.8,315.3 514.7,313.2 514.7,310.8 514.9,308.0 515.1,304.7 515.3,301.0 515.7,297.0 516.3,293.0 517.3,289.0 518.7,285.3 520.4,281.8 522.4,278.4 524.7,275.0 527.5,271.8 530.8,268.5 534.7,265.3 539.3,262.1 544.7,258.8 550.5,255.6 556.7,252.5 563.1,249.5 569.4,246.7 575.7,244.1 582.1,241.6 588.7,239.2 595.4,237.1 602.3,235.1 609.4,233.3 616.5,231.8 623.8,230.5 631.2,229.4 638.8,228.4 646.6,227.5 654.7,226.7 662.8,225.9 671.0,225.2 679.5,224.6 688.3,224.1 697.8,223.7 708.0,223.5 719.5,223.4 732.2,223.5 745.5,223.8 758.7,224.1 771.3,224.6 782.7,225.3 792.1,226.0 800.0,226.8 807.3,227.8 814.7,229.0 823.2,230.5 833.7,232.5 846.7,235.0 861.8,237.9 878.0,241.2 894.2,244.8 909.5,248.6 922.7,252.5 933.9,256.7 944.0,261.1 953.0,265.8 961.3,270.7 968.8,275.6 975.9,280.5 982.3,285.5 988.0,290.8 993.1,296.2 997.4,301.4 1001.2,306.4 1004.4,311.0 1006.8,315.1 1008.5,318.7 1009.5,322.0 1010.1,325.3 1010.3,328.7 1010.4,332.4 1010.2,336.4 1009.8,340.7 1009.1,345.0 1008.0,349.3 1006.4,353.5 1004.4,357.4 1002.0,361.0 999.4,364.3 996.4,367.6 992.8,370.7 988.3,373.7 983.0,376.8 976.5,380.0 969.0,383.2 960.8,386.5 951.9,389.5 942.7,392.3 933.3,394.6 923.1,396.5 911.9,397.9 900.4,399.1 889.0,400.1 878.5,400.9 869.3,401.7 861.9,402.4 855.9,402.9 850.7,403.3 845.6,403.5 840.2,403.7 833.7,403.7 826.0,403.6 817.5,403.4 808.7,403.0 799.7,402.6 790.9,402.1 782.7,401.7 774.5,401.2 765.9,400.7 757.6,400.2 750.0,399.7 743.6,399.2 739.0,398.9"/><polygon points="541.4,482.7 670.0,389.6 664.8,388.9 657.5,387.9 648.9,386.7 639.8,385.5 630.9,384.2 623.0,383.0 616.0,381.9 609.2,380.8 602.7,379.8 596.4,378.6 590.4,377.4 584.7,376.0 579.2,374.4 574.0,372.6 569.0,370.7 564.4,368.7 560.0,366.8 556.0,365.0 552.4,363.3 549.3,361.7 546.5,360.2 543.9,358.6 541.3,356.9 538.7,355.0 536.0,352.9 533.3,350.8 530.7,348.5 528.3,346.1 526.0,343.6 524.0,341.0 522.3,338.2 520.7,335.1 519.4,332.0 518.3,328.9 517.3,325.8 516.5,323.0 515.9,320.5 515.4,318.4 515.1,316.3 515.0,314.2 515.0,311.8 515.2,309.0 515.4,305.7 515.6,302.0 516.0,298.0 516.6,294.0 517.6,290.0 519.0,286.3 520.7,282.8 522.7,279.4 525.1,276.0 527.8,272.8 531.1,269.5 535.0,266.3 539.6,263.1 545.0,259.8 550.9,256.6 557.0,253.5 563.4,250.5 569.7,247.7 576.0,245.1 582.4,242.6 589.0,240.2 595.8,238.1 602.7,236.1 609.7,234.3 616.9,232.8 624.1,231.5 631.5,230.4 639.1,229.4 646.9,228.5 655.0,227.7 663.2,226.9 671.4,226.2 679.8,225.6 688.7,225.1 698.1,224.7 708.3,224.5 719.8,224.4 732.5,224.5 745.8,224.8 759.1,225.1 771.7,225.6 783.0,226.3 792.4,227.0 800.3,227.8 807.6,228.8 815.1,230.0 823.6,231.5 834.0,233.5 847.0,236.0 862.2,238.9 878.4,242.2 894.6,245.8 909.8,249.6 923.0,253.5 934.2,257.7 944.3,262.1 953.4,266.8 961.6,271.7 969.2,276.6 976.2,281.5 982.6,286.5 988.4,291.8 993.4,297.2 997.8,302.4 1001.5,307.4 1004.7,312.0 1007.1,316.1 1008.8,319.7 1009.9,323.0 1010.4,326.3 1010.7,329.7 1010.7,333.4 1010.6,337.4 1010.2,341.7 1009.4,346.0 1008.3,350.3 1006.7,354.5 1004.7,358.4 1002.4,362.0 999.8,365.3 996.7,368.6 993.1,371.7 988.7,374.7 983.3,377.8 976.8,381.0 969.4,384.2 961.1,387.5 952.3,390.5 943.0,393.3 933.6,395.6 923.4,397.5 912.3,398.9 900.7,400.1 889.4,401.1 878.8,401.9 869.6,402.7 862.2,403.4 856.2,403.9 851.0,404.3 846.0,404.5 840.5,404.7 834.0,404.7 826.3,404.6 817.9,404.4 809.0,404.0 800.0,403.6 791.3,403.1 783.0,402.7 774.8,402.2 766.3,401.7 758.0,401.2 750.4,400.7 744.0,400.2 739.3,399.9"/><polygon points="541.7,483.7 670.3,390.6 665.1,389.9 657.8,388.9 649.2,387.7 640.1,386.5 631.2,385.2 623.3,384.0 616.3,382.9 609.6,381.8 603.0,380.8 596.8,379.6 590.8,378.4 585.0,377.0 579.6,375.4 574.3,373.6 569.4,371.7 564.7,369.7 560.3,367.8 556.3,366.0 552.8,364.3 549.6,362.7 546.8,361.2 544.2,359.6 541.6,357.9 539.0,356.0 536.3,353.9 533.7,351.8 531.1,349.5 528.6,347.1 526.3,344.6 524.3,342.0 522.6,339.2 521.1,336.1 519.7,333.0 518.6,329.9 517.6,326.8 516.8,324.0 516.2,321.5 515.8,319.4 515.5,317.3 515.4,315.2 515.4,312.8 515.5,310.0 515.7,306.7 516.0,303.0 516.4,299.0 517.0,295.0 517.9,291.0 519.3,287.3 521.1,283.8 523.1,280.4 525.4,277.0 528.2,273.8 531.4,270.5 535.3,267.3 540.0,264.1 545.3,260.8 551.2,257.6 557.4,254.5 563.7,251.5 570.0,248.7 576.3,246.1 582.8,243.6 589.4,241.2 596.1,239.1 603.0,237.1 610.0,235.3 617.2,233.8 624.4,232.5 631.9,231.4 639.4,230.4 647.3,229.5 655.3,228.7 663.5,227.9 671.7,227.2 680.1,226.6 689.0,226.1 698.4,225.7 708.6,225.5 720.1,225.4 732.8,225.5 746.1,225.8 759.4,226.1 772.0,226.6 783.3,227.3 792.8,228.0 800.7,228.8 807.9,229.8 815.4,231.0 823.9,232.5 834.3,234.5 847.4,237.0 862.5,239.9 878.7,243.2 894.9,246.8 910.1,250.6 923.3,254.5 934.6,258.7 944.6,263.1 953.7,267.8 962.0,272.7 969.5,277.6 976.5,282.5 983.0,287.5 988.7,292.8 993.7,298.2 998.1,303.4 1001.9,308.4 1005.0,313.0 1007.5,317.1 1009.1,320.7 1010.2,324.0 1010.8,327.3 1011.0,330.7 1011.0,334.4 1010.9,338.4 1010.5,342.7 1009.7,347.0 1008.6,351.3 1007.1,355.5 1005.0,359.4 1002.7,363.0 1000.1,366.3 997.1,369.6 993.4,372.7 989.0,375.7 983.6,378.8 977.2,382.0 969.7,385.2 961.4,388.5 952.6,391.5 943.4,394.3 933.9,396.6 923.8,398.5 912.6,399.9 901.1,401.1 889.7,402.1 879.1,402.9 869.9,403.7 862.5,404.4 856.5,404.9 851.3,405.3 846.3,405.5 840.8,405.7 834.3,405.7 826.6,405.6 818.2,405.4 809.3,405.0 800.4,404.6 791.6,404.1 783.3,403.7 775.1,403.2 766.6,402.7 758.3,402.2 750.7,401.7 744.3,401.2 739.6,400.9"/><polygon points="542.1,484.7 670.7,391.6 665.5,390.9 658.2,389.9 649.6,388.7 640.4,387.5 631.5,386.2 623.7,385.0 616.7,383.9 609.9,382.8 603.4,381.8 597.1,380.6 591.1,379.4 585.4,378.0 579.9,376.4 574.7,374.6 569.7,372.7 565.0,370.7 560.7,368.8 556.7,367.0 553.1,365.3 550.0,363.7 547.1,362.2 544.5,360.6 542.0,358.9 539.4,357.0 536.7,354.9 534.0,352.8 531.4,350.5 528.9,348.1 526.7,345.6 524.7,343.0 522.9,340.2 521.4,337.1 520.1,334.0 518.9,330.9 518.0,327.8 517.2,325.0 516.5,322.5 516.1,320.4 515.8,318.3 515.7,316.2 515.7,313.8 515.9,311.0 516.1,307.7 516.3,304.0 516.7,300.0 517.3,296.0 518.3,292.0 519.7,288.3 521.4,284.8 523.4,281.4 525.7,278.0 528.5,274.8 531.8,271.5 535.7,268.3 540.3,265.1 545.7,261.8 551.5,258.6 557.7,255.5 564.1,252.5 570.4,249.7 576.7,247.1 583.1,244.6 589.7,242.2 596.4,240.1 603.3,238.1 610.4,236.3 617.5,234.8 624.8,233.5 632.2,232.4 639.8,231.4 647.6,230.5 655.7,229.7 663.8,228.9 672.0,228.2 680.5,227.6 689.3,227.1 698.8,226.7 709.0,226.5 720.5,226.4 733.2,226.5 746.5,226.8 759.7,227.1 772.3,227.6 783.7,228.3 793.1,229.0 801.0,229.8 808.3,230.8 815.7,232.0 824.2,233.5 834.7,235.5 847.7,238.0 862.8,240.9 879.0,244.2 895.2,247.8 910.5,251.6 923.7,255.5 934.9,259.7 945.0,264.1 954.0,268.8 962.3,273.7 969.8,278.6 976.9,283.5 983.3,288.5 989.0,293.8 994.1,299.2 998.4,304.4 1002.2,309.4 1005.4,314.0 1007.8,318.1 1009.5,321.7 1010.5,325.0 1011.1,328.3 1011.3,331.7 1011.4,335.4 1011.2,339.4 1010.8,343.7 1010.1,348.0 1009.0,352.3 1007.4,356.5 1005.4,360.4 1003.0,364.0 1000.4,367.3 997.4,370.6 993.8,373.7 989.3,376.7 984.0,379.8 977.5,383.0 970.0,386.2 961.8,389.5 952.9,392.5 943.7,395.3 934.3,397.6 924.1,399.5 912.9,400.9 901.4,402.1 890.0,403.1 879.5,403.9 870.3,404.7 862.9,405.4 856.9,405.9 851.7,406.3 846.6,406.5 841.2,406.7 834.7,406.7 827.0,406.6 818.5,406.4 809.7,406.0 800.7,405.6 791.9,405.1 783.7,404.7 775.5,404.2 766.9,403.7 758.6,403.2 751.0,402.7 744.6,402.2 740.0,401.9"/><polygon points="542.4,485.7 671.0,392.6 665.8,391.9 658.5,390.9 649.9,389.7 640.8,388.5 631.9,387.2 624.0,386.0 617.0,384.9 610.2,383.8 603.7,382.8 597.4,381.6 591.4,380.4 585.7,379.0 580.2,377.4 575.0,375.6 570.0,373.7 565.4,371.7 561.0,369.8 557.0,368.0 553.4,366.3 550.3,364.7 547.5,363.2 544.9,361.6 542.3,359.9 539.7,358.0 537.0,355.9 534.3,353.8 531.7,351.5 529.3,349.1 527.0,346.6 525.0,344.0 523.3,341.2 521.7,338.1 520.4,335.0 519.3,331.9 518.3,328.8 517.5,326.0 516.9,323.5 516.4,321.4 516.1,319.3 516.0,317.2 516.0,314.8 516.2,312.0 516.4,308.7 516.6,305.0 517.0,301.0 517.6,297.0 518.6,293.0 520.0,289.3 521.7,285.8 523.7,282.4 526.1,279.0 528.8,275.8 532.1,272.5 536.0,269.3 540.6,266.1 546.0,262.8 551.9,259.6 558.0,256.5 564.4,253.5 570.7,250.7 577.0,248.1 583.4,245.6 590.0,243.2 596.8,241.1 603.7,239.1 610.7,237.3 617.9,235.8 625.1,234.5 632.5,233.4 640.1,232.4 647.9,231.5 656.0,230.7 664.2,229.9 672.4,229.2 680.8,228.6 689.7,228.1 699.1,227.7 709.3,227.5 720.8,227.4 733.5,227.5 746.8,227.8 760.1,228.1 772.7,228.6 784.0,229.3 793.4,230.0 801.3,230.8 808.6,231.8 816.1,233.0 824.6,234.5 835.0,236.5 848.0,239.0 863.2,241.9 879.4,245.2 895.6,248.8 910.8,252.6 924.0,256.5 935.2,260.7 945.3,265.1 954.4,269.8 962.6,274.7 970.2,279.6 977.2,284.5 983.6,289.5 989.4,294.8 994.4,300.2 998.8,305.4 1002.5,310.4 1005.7,315.0 1008.1,319.1 1009.8,322.7 1010.9,326.0 1011.4,329.3 1011.7,332.7 1011.7,336.4 1011.6,340.4 1011.2,344.7 1010.4,349.0 1009.3,353.3 1007.7,357.5 1005.7,361.4 1003.4,365.0 1000.8,368.3 997.7,371.6 994.1,374.7 989.7,377.7 984.3,380.8 977.8,384.0 970.4,387.2 962.1,390.5 953.3,393.5 944.0,396.3 934.6,398.6 924.4,400.5 913.3,401.9 901.7,403.1 890.4,404.1 879.8,404.9 870.6,405.7 863.2,406.4 857.2,406.9 852.0,407.3 847.0,407.5 841.5,407.7 835.0,407.7 827.3,407.6 818.9,407.4 810.0,407.0 801.0,406.6 792.3,406.1 784.0,405.7 775.8,405.2 767.3,404.7 759.0,404.2 751.4,403.7 745.0,403.2 740.3,402.9"/><polygon points="542.7,486.7 671.3,393.6 666.1,392.9 658.8,391.9 650.2,390.7 641.1,389.5 632.2,388.2 624.3,387.0 617.3,385.9 610.6,384.8 604.0,383.8 597.8,382.6 591.8,381.4 586.0,380.0 580.6,378.4 575.3,376.6 570.4,374.7 565.7,372.7 561.3,370.8 557.3,369.0 553.8,367.3 550.6,365.7 547.8,364.2 545.2,362.6 542.6,360.9 540.0,359.0 537.3,356.9 534.7,354.8 532.1,352.5 529.6,350.1 527.3,347.6 525.3,345.0 523.6,342.2 522.1,339.1 520.7,336.0 519.6,332.9 518.6,329.8 517.8,327.0 517.2,324.5 516.8,322.4 516.5,320.3 516.4,318.2 516.4,315.8 516.5,313.0 516.7,309.7 517.0,306.0 517.4,302.0 518.0,298.0 518.9,294.0 520.3,290.3 522.1,286.8 524.1,283.4 526.4,280.0 529.2,276.8 532.4,273.5 536.3,270.3 541.0,267.1 546.3,263.8 552.2,260.6 558.4,257.5 564.7,254.5 571.0,251.7 577.3,249.1 583.8,246.6 590.4,244.2 597.1,242.1 604.0,240.1 611.0,238.3 618.2,236.8 625.4,235.5 632.9,234.4 640.4,233.4 648.3,232.5 656.3,231.7 664.5,230.9 672.7,230.2 681.1,229.6 690.0,229.1 699.4,228.7 709.6,228.5 721.1,228.4 733.8,228.5 747.1,228.8 760.4,229.1 773.0,229.6 784.3,230.3 793.8,231.0 801.7,231.8 808.9,232.8 816.4,234.0 824.9,235.5 835.3,237.5 848.4,240.0 863.5,242.9 879.7,246.2 895.9,249.8 911.1,253.6 924.3,257.5 935.6,261.7 945.6,266.1 954.7,270.8 963.0,275.7 970.5,280.6 977.5,285.5 984.0,290.5 989.7,295.8 994.7,301.2 999.1,306.4 1002.9,311.4 1006.0,316.0 1008.5,320.1 1010.1,323.7 1011.2,327.0 1011.8,330.3 1012.0,333.7 1012.0,337.4 1011.9,341.4 1011.5,345.7 1010.7,350.0 1009.6,354.3 1008.1,358.5 1006.0,362.4 1003.7,366.0 1001.1,369.3 998.1,372.6 994.4,375.7 990.0,378.7 984.6,381.8 978.2,385.0 970.7,388.2 962.4,391.5 953.6,394.5 944.4,397.3 934.9,399.6 924.8,401.5 913.6,402.9 902.1,404.1 890.7,405.1 880.1,405.9 870.9,406.7 863.5,407.4 857.5,407.9 852.3,408.3 847.3,408.5 841.8,408.7 835.3,408.7 827.6,408.6 819.2,408.4 810.3,408.0 801.4,407.6 792.6,407.1 784.3,406.7 776.1,406.2 767.6,405.7 759.3,405.2 751.7,404.7 745.3,404.2 740.6,403.9"/><polygon points="543.1,487.7 671.7,394.6 666.5,393.9 659.2,392.9 650.6,391.7 641.4,390.5 632.5,389.2 624.7,388.0 617.7,386.9 610.9,385.8 604.4,384.8 598.1,383.6 592.1,382.4 586.4,381.0 580.9,379.4 575.7,377.6 570.7,375.7 566.0,373.7 561.7,371.8 557.7,370.0 554.1,368.3 551.0,366.7 548.1,365.2 545.5,363.6 543.0,361.9 540.4,360.0 537.7,357.9 535.0,355.8 532.4,353.5 529.9,351.1 527.7,348.6 525.7,346.0 523.9,343.2 522.4,340.1 521.1,337.0 519.9,333.9 519.0,330.8 518.2,328.0 517.5,325.5 517.1,323.4 516.8,321.3 516.7,319.2 516.7,316.8 516.9,314.0 517.1,310.7 517.3,307.0 517.7,303.0 518.3,299.0 519.3,295.0 520.7,291.3 522.4,287.8 524.4,284.4 526.7,281.0 529.5,277.8 532.8,274.5 536.7,271.3 541.3,268.1 546.7,264.8 552.5,261.6 558.7,258.5 565.1,255.5 571.4,252.7 577.7,250.1 584.1,247.6 590.7,245.2 597.4,243.1 604.3,241.1 611.4,239.3 618.5,237.8 625.8,236.5 633.2,235.4 640.8,234.4 648.6,233.5 656.7,232.7 664.8,231.9 673.0,231.2 681.5,230.6 690.3,230.1 699.8,229.7 710.0,229.5 721.5,229.4 734.2,229.5 747.5,229.8 760.7,230.1 773.3,230.6 784.7,231.3 794.1,232.0 802.0,232.8 809.3,233.8 816.7,235.0 825.2,236.5 835.7,238.5 848.7,241.0 863.8,243.9 880.0,247.2 896.2,250.8 911.5,254.6 924.7,258.5 935.9,262.7 946.0,267.1 955.0,271.8 963.3,276.7 970.8,281.6 977.9,286.5 984.3,291.5 990.0,296.8 995.1,302.2 999.4,307.4 1003.2,312.4 1006.4,317.0 1008.8,321.1 1010.5,324.7 1011.5,328.0 1012.1,331.3 1012.3,334.7 1012.4,338.4 1012.2,342.4 1011.8,346.7 1011.1,351.0 1010.0,355.3 1008.4,359.5 1006.4,363.4 1004.0,367.0 1001.4,370.3 998.4,373.6 994.8,376.7 990.3,379.7 985.0,382.8 978.5,386.0 971.0,389.2 962.8,392.5 953.9,395.5 944.7,398.3 935.3,400.6 925.1,402.5 913.9,403.9 902.4,405.1 891.0,406.1 880.5,406.9 871.3,407.7 863.9,408.4 857.9,408.9 852.7,409.3 847.6,409.5 842.2,409.7 835.7,409.7 828.0,409.6 819.5,409.4 810.7,409.0 801.7,408.6 792.9,408.1 784.7,407.7 776.5,407.2 767.9,406.7 759.6,406.2 752.0,405.7 745.6,405.2 741.0,404.9"/><polygon points="543.4,488.7 672.0,395.6 666.8,394.9 659.5,393.9 650.9,392.7 641.8,391.5 632.9,390.2 625.0,389.0 618.0,387.9 611.2,386.8 604.7,385.8 598.4,384.6 592.4,383.4 586.7,382.0 581.2,380.4 576.0,378.6 571.0,376.7 566.4,374.7 562.0,372.8 558.0,371.0 554.4,369.3 551.3,367.7 548.5,366.2 545.9,364.6 543.3,362.9 540.7,361.0 538.0,358.9 535.3,356.8 532.7,354.5 530.3,352.1 528.0,349.6 526.0,347.0 524.3,344.2 522.7,341.1 521.4,338.0 520.3,334.9 519.3,331.8 518.5,329.0 517.9,326.5 517.4,324.4 517.1,322.3 517.0,320.2 517.0,317.8 517.2,315.0 517.4,311.7 517.6,308.0 518.0,304.0 518.6,300.0 519.6,296.0 521.0,292.3 522.7,288.8 524.7,285.4 527.1,282.0 529.8,278.8 533.1,275.5 537.0,272.3 541.6,269.1 547.0,265.8 552.9,262.6 559.0,259.5 565.4,256.5 571.7,253.7 578.0,251.1 584.4,248.6 591.0,246.2 597.8,244.1 604.7,242.1 611.7,240.3 618.9,238.8 626.1,237.5 633.5,236.4 641.1,235.4 648.9,234.5 657.0,233.7 665.2,232.9 673.4,232.2 681.8,231.6 690.7,231.1 700.1,230.7 710.3,230.5 721.8,230.4 734.5,230.5 747.8,230.8 761.1,231.1 773.7,231.6 785.0,232.3 794.4,233.0 802.3,233.8 809.6,234.8 817.1,236.0 825.6,237.5 836.0,239.5 849.0,242.0 864.2,244.9 880.4,248.2 896.6,251.8 911.8,255.6 925.0,259.5 936.2,263.7 946.3,268.1 955.4,272.8 963.6,277.7 971.2,282.6 978.2,287.5 984.6,292.5 990.4,297.8 995.4,303.2 999.8,308.4 1003.5,313.4 1006.7,318.0 1009.1,322.1 1010.8,325.7 1011.9,329.0 1012.4,332.3 1012.7,335.7 1012.7,339.4 1012.6,343.4 1012.2,347.7 1011.4,352.0 1010.3,356.3 1008.7,360.5 1006.7,364.4 1004.4,368.0 1001.8,371.3 998.7,374.6 995.1,377.7 990.7,380.7 985.3,383.8 978.8,387.0 971.4,390.2 963.1,393.5 954.3,396.5 945.0,399.3 935.6,401.6 925.4,403.5 914.3,404.9 902.7,406.1 891.4,407.1 880.8,407.9 871.6,408.7 864.2,409.4 858.2,409.9 853.0,410.3 848.0,410.5 842.5,410.7 836.0,410.7 828.3,410.6 819.9,410.4 811.0,410.0 802.0,409.6 793.3,409.1 785.0,408.7 776.8,408.2 768.3,407.7 760.0,407.2 752.4,406.7 746.0,406.2 741.3,405.9"/><polygon points="543.7,489.7 672.3,396.6 667.1,395.9 659.8,394.9 651.2,393.7 642.1,392.5 633.2,391.2 625.3,390.0 618.3,388.9 611.6,387.8 605.0,386.8 598.8,385.6 592.8,384.4 587.0,383.0 581.6,381.4 576.3,379.6 571.4,377.7 566.7,375.7 562.3,373.8 558.3,372.0 554.8,370.3 551.6,368.7 548.8,367.2 546.2,365.6 543.6,363.9 541.0,362.0 538.3,359.9 535.7,357.8 533.1,355.5 530.6,353.1 528.3,350.6 526.3,348.0 524.6,345.2 523.1,342.1 521.7,339.0 520.6,335.9 519.6,332.8 518.8,330.0 518.2,327.5 517.8,325.4 517.5,323.3 517.4,321.2 517.4,318.8 517.5,316.0 517.7,312.7 518.0,309.0 518.4,305.0 519.0,301.0 519.9,297.0 521.3,293.3 523.1,289.8 525.1,286.4 527.4,283.0 530.2,279.8 533.4,276.5 537.3,273.3 542.0,270.1 547.3,266.8 553.2,263.6 559.4,260.5 565.7,257.5 572.0,254.7 578.3,252.1 584.8,249.6 591.4,247.2 598.1,245.1 605.0,243.1 612.0,241.3 619.2,239.8 626.4,238.5 633.9,237.4 641.4,236.4 649.3,235.5 657.3,234.7 665.5,233.9 673.7,233.2 682.1,232.6 691.0,232.1 700.4,231.7 710.6,231.5 722.1,231.4 734.8,231.5 748.1,231.8 761.4,232.1 774.0,232.6 785.3,233.3 794.8,234.0 802.7,234.8 809.9,235.8 817.4,237.0 825.9,238.5 836.3,240.5 849.4,243.0 864.5,245.9 880.7,249.2 896.9,252.8 912.1,256.6 925.3,260.5 936.6,264.7 946.6,269.1 955.7,273.8 964.0,278.7 971.5,283.6 978.5,288.5 985.0,293.5 990.7,298.8 995.7,304.2 1000.1,309.4 1003.9,314.4 1007.0,319.0 1009.5,323.1 1011.1,326.7 1012.2,330.0 1012.8,333.3 1013.0,336.7 1013.0,340.4 1012.9,344.4 1012.5,348.7 1011.7,353.0 1010.6,357.3 1009.1,361.5 1007.0,365.4 1004.7,369.0 1002.1,372.3 999.1,375.6 995.4,378.7 991.0,381.7 985.6,384.8 979.2,388.0 971.7,391.2 963.4,394.5 954.6,397.5 945.4,400.3 935.9,402.6 925.8,404.5 914.6,405.9 903.1,407.1 891.7,408.1 881.1,408.9 871.9,409.7 864.5,410.4 858.5,410.9 853.3,411.3 848.3,411.5 842.8,411.7 836.3,411.7 828.6,411.6 820.2,411.4 811.3,411.0 802.4,410.6 793.6,410.1 785.3,409.7 777.1,409.2 768.6,408.7 760.3,408.2 752.7,407.7 746.3,407.2 741.6,406.9"/><polygon points="544.1,490.7 672.7,397.6 667.5,396.9 660.2,395.9 651.6,394.7 642.4,393.5 633.5,392.2 625.7,391.0 618.7,389.9 611.9,388.8 605.4,387.8 599.1,386.6 593.1,385.4 587.4,384.0 581.9,382.4 576.7,380.6 571.7,378.7 567.0,376.7 562.7,374.8 558.7,373.0 555.1,371.3 552.0,369.7 549.1,368.2 546.5,366.6 544.0,364.9 541.4,363.0 538.7,360.9 536.0,358.8 533.4,356.5 530.9,354.1 528.7,351.6 526.7,349.0 524.9,346.2 523.4,343.1 522.1,340.0 520.9,336.9 520.0,333.8 519.2,331.0 518.5,328.5 518.1,326.4 517.8,324.3 517.7,322.2 517.7,319.8 517.9,317.0 518.1,313.7 518.3,310.0 518.7,306.0 519.3,302.0 520.3,298.0 521.7,294.3 523.4,290.8 525.4,287.4 527.7,284.0 530.5,280.8 533.8,277.5 537.7,274.3 542.3,271.1 547.7,267.8 553.5,264.6 559.7,261.5 566.1,258.5 572.4,255.7 578.7,253.1 585.1,250.6 591.7,248.2 598.4,246.1 605.3,244.1 612.4,242.3 619.5,240.8 626.8,239.5 634.2,238.4 641.8,237.4 649.6,236.5 657.7,235.7 665.8,234.9 674.0,234.2 682.5,233.6 691.3,233.1 700.8,232.7 711.0,232.5 722.5,232.4 735.2,232.5 748.5,232.8 761.7,233.1 774.3,233.6 785.7,234.3 795.1,235.0 803.0,235.8 810.3,236.8 817.7,238.0 826.2,239.5 836.7,241.5 849.7,244.0 864.8,246.9 881.0,250.2 897.2,253.8 912.5,257.6 925.7,261.5 936.9,265.7 947.0,270.1 956.0,274.8 964.3,279.7 971.8,284.6 978.9,289.5 985.3,294.5 991.0,299.8 996.1,305.2 1000.4,310.4 1004.2,315.4 1007.4,320.0 1009.8,324.1 1011.5,327.7 1012.5,331.0 1013.1,334.3 1013.3,337.7 1013.4,341.4 1013.2,345.4 1012.8,349.7 1012.1,354.0 1011.0,358.3 1009.4,362.5 1007.4,366.4 1005.0,370.0 1002.4,373.3 999.4,376.6 995.8,379.7 991.3,382.7 986.0,385.8 979.5,389.0 972.0,392.2 963.8,395.5 954.9,398.5 945.7,401.3 936.3,403.6 926.1,405.5 914.9,406.9 903.4,408.1 892.0,409.1 881.5,409.9 872.3,410.7 864.9,411.4 858.9,411.9 853.7,412.3 848.6,412.5 843.2,412.7 836.7,412.7 829.0,412.6 820.5,412.4 811.7,412.0 802.7,411.6 793.9,411.1 785.7,410.7 777.5,410.2 768.9,409.7 760.6,409.2 753.0,408.7 746.6,408.2 742.0,407.9"/><polygon points="544.4,491.7 673.0,398.6 667.8,397.9 660.5,396.9 651.9,395.7 642.8,394.5 633.9,393.2 626.0,392.0 619.0,390.9 612.2,389.8 605.7,388.8 599.4,387.6 593.4,386.4 587.7,385.0 582.2,383.4 577.0,381.6 572.0,379.7 567.4,377.7 563.0,375.8 559.0,374.0 555.4,372.3 552.3,370.7 549.5,369.2 546.9,367.6 544.3,365.9 541.7,364.0 539.0,361.9 536.3,359.8 533.7,357.5 531.3,355.1 529.0,352.6 527.0,350.0 525.3,347.2 523.7,344.1 522.4,341.0 521.3,337.9 520.3,334.8 519.5,332.0 518.9,329.5 518.4,327.4 518.1,325.3 518.0,323.2 518.0,320.8 518.2,318.0 518.4,314.7 518.6,311.0 519.0,307.0 519.6,303.0 520.6,299.0 522.0,295.3 523.7,291.8 525.7,288.4 528.1,285.0 530.8,281.8 534.1,278.5 538.0,275.3 542.6,272.1 548.0,268.8 553.9,265.6 560.0,262.5 566.4,259.5 572.7,256.7 579.0,254.1 585.4,251.6 592.0,249.2 598.8,247.1 605.7,245.1 612.7,243.3 619.9,241.8 627.1,240.5 634.5,239.4 642.1,238.4 649.9,237.5 658.0,236.7 666.2,235.9 674.4,235.2 682.8,234.6 691.7,234.1 701.1,233.7 711.3,233.5 722.8,233.4 735.5,233.5 748.8,233.8 762.1,234.1 774.7,234.6 786.0,235.3 795.4,236.0 803.3,236.8 810.6,237.8 818.1,239.0 826.6,240.5 837.0,242.5 850.0,245.0 865.2,247.9 881.4,251.2 897.6,254.8 912.8,258.6 926.0,262.5 937.2,266.7 947.3,271.1 956.4,275.8 964.6,280.7 972.2,285.6 979.2,290.5 985.6,295.5 991.4,300.8 996.4,306.2 1000.8,311.4 1004.5,316.4 1007.7,321.0 1010.1,325.1 1011.8,328.7 1012.9,332.0 1013.4,335.3 1013.7,338.7 1013.7,342.4 1013.6,346.4 1013.2,350.7 1012.4,355.0 1011.3,359.3 1009.7,363.5 1007.7,367.4 1005.4,371.0 1002.8,374.3 999.7,377.6 996.1,380.7 991.7,383.7 986.3,386.8 979.8,390.0 972.4,393.2 964.1,396.5 955.3,399.5 946.0,402.3 936.6,404.6 926.4,406.5 915.3,407.9 903.7,409.1 892.4,410.1 881.8,410.9 872.6,411.7 865.2,412.4 859.2,412.9 854.0,413.3 849.0,413.5 843.5,413.7 837.0,413.7 829.3,413.6 820.9,413.4 812.0,413.0 803.0,412.6 794.3,412.1 786.0,411.7 777.8,411.2 769.3,410.7 761.0,410.2 753.4,409.7 747.0,409.2 742.3,408.9"/><polygon points="544.7,492.7 673.3,399.6 668.1,398.9 660.8,397.9 652.2,396.7 643.1,395.5 634.2,394.2 626.3,393.0 619.3,391.9 612.6,390.8 606.0,389.8 599.8,388.6 593.8,387.4 588.0,386.0 582.6,384.4 577.3,382.6 572.4,380.7 567.7,378.7 563.3,376.8 559.3,375.0 555.8,373.3 552.6,371.7 549.8,370.2 547.2,368.6 544.6,366.9 542.0,365.0 539.3,362.9 536.7,360.8 534.1,358.5 531.6,356.1 529.3,353.6 527.3,351.0 525.6,348.2 524.1,345.1 522.7,342.0 521.6,338.9 520.6,335.8 519.8,333.0 519.2,330.5 518.8,328.4 518.5,326.3 518.4,324.2 518.4,321.8 518.5,319.0 518.7,315.7 519.0,312.0 519.4,308.0 520.0,304.0 520.9,300.0 522.3,296.3 524.1,292.8 526.1,289.4 528.4,286.0 531.2,282.8 534.4,279.5 538.3,276.3 543.0,273.1 548.3,269.8 554.2,266.6 560.4,263.5 566.7,260.5 573.0,257.7 579.3,255.1 585.8,252.6 592.4,250.2 599.1,248.1 606.0,246.1 613.0,244.3 620.2,242.8 627.4,241.5 634.9,240.4 642.4,239.4 650.3,238.5 658.3,237.7 666.5,236.9 674.7,236.2 683.1,235.6 692.0,235.1 701.4,234.7 711.6,234.5 723.1,234.4 735.8,234.5 749.1,234.8 762.4,235.1 775.0,235.6 786.3,236.3 795.8,237.0 803.7,237.8 810.9,238.8 818.4,240.0 826.9,241.5 837.3,243.5 850.4,246.0 865.5,248.9 881.7,252.2 897.9,255.8 913.1,259.6 926.3,263.5 937.6,267.7 947.6,272.1 956.7,276.8 965.0,281.7 972.5,286.6 979.5,291.5 986.0,296.5 991.7,301.8 996.7,307.2 1001.1,312.4 1004.9,317.4 1008.0,322.0 1010.5,326.1 1012.1,329.7 1013.2,333.0 1013.8,336.3 1014.0,339.7 1014.0,343.4 1013.9,347.4 1013.5,351.7 1012.7,356.0 1011.6,360.3 1010.1,364.5 1008.0,368.4 1005.7,372.0 1003.1,375.3 1000.1,378.6 996.4,381.7 992.0,384.7 986.6,387.8 980.2,391.0 972.7,394.2 964.4,397.5 955.6,400.5 946.4,403.3 936.9,405.6 926.8,407.5 915.6,408.9 904.1,410.1 892.7,411.1 882.1,411.9 872.9,412.7 865.5,413.4 859.5,413.9 854.3,414.3 849.3,414.5 843.8,414.7 837.3,414.7 829.6,414.6 821.2,414.4 812.3,414.0 803.4,413.6 794.6,413.1 786.3,412.7 778.1,412.2 769.6,411.7 761.3,411.2 753.7,410.7 747.3,410.2 742.6,409.9"/><polygon points="545.1,493.7 673.7,400.6 668.5,399.9 661.2,398.9 652.6,397.7 643.4,396.5 634.5,395.2 626.7,394.0 619.7,392.9 612.9,391.8 606.4,390.8 600.1,389.6 594.1,388.4 588.4,387.0 582.9,385.4 577.7,383.6 572.7,381.7 568.0,379.7 563.7,377.8 559.7,376.0 556.1,374.3 553.0,372.7 550.1,371.2 547.5,369.6 545.0,367.9 542.4,366.0 539.7,363.9 537.0,361.8 534.4,359.5 531.9,357.1 529.7,354.6 527.7,352.0 525.9,349.2 524.4,346.1 523.1,343.0 521.9,339.9 521.0,336.8 520.2,334.0 519.5,331.5 519.1,329.4 518.8,327.3 518.7,325.2 518.7,322.8 518.9,320.0 519.1,316.7 519.3,313.0 519.7,309.0 520.3,305.0 521.3,301.0 522.7,297.3 524.4,293.8 526.4,290.4 528.7,287.0 531.5,283.8 534.8,280.5 538.7,277.3 543.3,274.1 548.7,270.8 554.5,267.6 560.7,264.5 567.1,261.5 573.4,258.7 579.7,256.1 586.1,253.6 592.7,251.2 599.4,249.1 606.3,247.1 613.4,245.3 620.5,243.8 627.8,242.5 635.2,241.4 642.8,240.4 650.6,239.5 658.7,238.7 666.8,237.9 675.0,237.2 683.5,236.6 692.3,236.1 701.8,235.7 712.0,235.5 723.5,235.4 736.2,235.5 749.5,235.8 762.7,236.1 775.3,236.6 786.7,237.3 796.1,238.0 804.0,238.8 811.3,239.8 818.7,241.0 827.2,242.5 837.7,244.5 850.7,247.0 865.8,249.9 882.0,253.2 898.2,256.8 913.5,260.6 926.7,264.5 937.9,268.7 948.0,273.1 957.0,277.8 965.3,282.7 972.8,287.6 979.9,292.5 986.3,297.5 992.0,302.8 997.1,308.2 1001.4,313.4 1005.2,318.4 1008.4,323.0 1010.8,327.1 1012.5,330.7 1013.5,334.0 1014.1,337.3 1014.3,340.7 1014.4,344.4 1014.2,348.4 1013.8,352.7 1013.1,357.0 1012.0,361.3 1010.4,365.5 1008.4,369.4 1006.0,373.0 1003.4,376.3 1000.4,379.6 996.8,382.7 992.3,385.7 987.0,388.8 980.5,392.0 973.0,395.2 964.8,398.5 955.9,401.5 946.7,404.3 937.3,406.6 927.1,408.5 915.9,409.9 904.4,411.1 893.0,412.1 882.5,412.9 873.3,413.7 865.9,414.4 859.9,414.9 854.7,415.3 849.6,415.5 844.2,415.7 837.7,415.7 830.0,415.6 821.5,415.4 812.7,415.0 803.7,414.6 794.9,414.1 786.7,413.7 778.5,413.2 769.9,412.7 761.6,412.2 754.0,411.7 747.6,411.2 743.0,410.9"/><polygon points="545.4,494.7 674.0,401.6 668.8,400.9 661.5,399.9 652.9,398.7 643.8,397.5 634.9,396.2 627.0,395.0 620.0,393.9 613.2,392.8 606.7,391.8 600.4,390.6 594.4,389.4 588.7,388.0 583.2,386.4 578.0,384.6 573.0,382.7 568.4,380.7 564.0,378.8 560.0,377.0 556.4,375.3 553.3,373.7 550.5,372.2 547.9,370.6 545.3,368.9 542.7,367.0 540.0,364.9 537.3,362.8 534.7,360.5 532.3,358.1 530.0,355.6 528.0,353.0 526.3,350.2 524.7,347.1 523.4,344.0 522.3,340.9 521.3,337.8 520.5,335.0 519.9,332.5 519.4,330.4 519.1,328.3 519.0,326.2 519.0,323.8 519.2,321.0 519.4,317.7 519.6,314.0 520.0,310.0 520.6,306.0 521.6,302.0 523.0,298.3 524.7,294.8 526.7,291.4 529.1,288.0 531.8,284.8 535.1,281.5 539.0,278.3 543.6,275.1 549.0,271.8 554.9,268.6 561.0,265.5 567.4,262.5 573.7,259.7 580.0,257.1 586.4,254.6 593.0,252.2 599.8,250.1 606.7,248.1 613.7,246.3 620.9,244.8 628.1,243.5 635.5,242.4 643.1,241.4 650.9,240.5 659.0,239.7 667.2,238.9 675.4,238.2 683.8,237.6 692.7,237.1 702.1,236.7 712.3,236.5 723.8,236.4 736.5,236.5 749.8,236.8 763.1,237.1 775.7,237.6 787.0,238.3 796.4,239.0 804.3,239.8 811.6,240.8 819.1,242.0 827.6,243.5 838.0,245.5 851.0,248.0 866.2,250.9 882.4,254.2 898.6,257.8 913.8,261.6 927.0,265.5 938.2,269.7 948.3,274.1 957.4,278.8 965.6,283.7 973.2,288.6 980.2,293.5 986.6,298.5 992.4,303.8 997.4,309.2 1001.8,314.4 1005.5,319.4 1008.7,324.0 1011.1,328.1 1012.8,331.7 1013.9,335.0 1014.4,338.3 1014.7,341.7 1014.7,345.4 1014.6,349.4 1014.2,353.7 1013.4,358.0 1012.3,362.3 1010.7,366.5 1008.7,370.4 1006.4,374.0 1003.8,377.3 1000.7,380.6 997.1,383.7 992.7,386.7 987.3,389.8 980.8,393.0 973.4,396.2 965.1,399.5 956.3,402.5 947.0,405.3 937.6,407.6 927.4,409.5 916.3,410.9 904.7,412.1 893.4,413.1 882.8,413.9 873.6,414.7 866.2,415.4 860.2,415.9 855.0,416.3 850.0,416.5 844.5,416.7 838.0,416.7 830.3,416.6 821.9,416.4 813.0,416.0 804.0,415.6 795.3,415.1 787.0,414.7 778.8,414.2 770.3,413.7 762.0,413.2 754.4,412.7 748.0,412.2 743.3,411.9"/><polygon points="545.7,495.7 674.3,402.6 669.1,401.9 661.8,400.9 653.2,399.7 644.1,398.5 635.2,397.2 627.3,396.0 620.3,394.9 613.6,393.8 607.0,392.8 600.8,391.6 594.8,390.4 589.0,389.0 583.6,387.4 578.3,385.6 573.4,383.7 568.7,381.7 564.3,379.8 560.3,378.0 556.8,376.3 553.6,374.7 550.8,373.2 548.2,371.6 545.6,369.9 543.0,368.0 540.3,365.9 537.7,363.8 535.1,361.5 532.6,359.1 530.3,356.6 528.3,354.0 526.6,351.2 525.1,348.1 523.7,345.0 522.6,341.9 521.6,338.8 520.8,336.0 520.2,333.5 519.8,331.4 519.5,329.3 519.4,327.2 519.4,324.8 519.5,322.0 519.7,318.7 520.0,315.0 520.4,311.0 521.0,307.0 521.9,303.0 523.3,299.3 525.1,295.8 527.1,292.4 529.4,289.0 532.2,285.8 535.4,282.5 539.3,279.3 544.0,276.1 549.3,272.8 555.2,269.6 561.4,266.5 567.7,263.5 574.0,260.7 580.3,258.1 586.8,255.6 593.4,253.2 600.1,251.1 607.0,249.1 614.0,247.3 621.2,245.8 628.4,244.5 635.9,243.4 643.4,242.4 651.3,241.5 659.3,240.7 667.5,239.9 675.7,239.2 684.1,238.6 693.0,238.1 702.4,237.7 712.6,237.5 724.1,237.4 736.8,237.5 750.1,237.8 763.4,238.1 776.0,238.6 787.3,239.3 796.8,240.0 804.7,240.8 811.9,241.8 819.4,243.0 827.9,244.5 838.3,246.5 851.4,249.0 866.5,251.9 882.7,255.2 898.9,258.8 914.1,262.6 927.3,266.5 938.6,270.7 948.6,275.1 957.7,279.8 966.0,284.7 973.5,289.6 980.5,294.5 987.0,299.5 992.7,304.8 997.7,310.2 1002.1,315.4 1005.9,320.4 1009.0,325.0 1011.5,329.1 1013.1,332.7 1014.2,336.0 1014.8,339.3 1015.0,342.7 1015.0,346.4 1014.9,350.4 1014.5,354.7 1013.7,359.0 1012.6,363.3 1011.1,367.5 1009.0,371.4 1006.7,375.0 1004.1,378.3 1001.1,381.6 997.4,384.7 993.0,387.7 987.6,390.8 981.2,394.0 973.7,397.2 965.4,400.5 956.6,403.5 947.4,406.3 937.9,408.6 927.8,410.5 916.6,411.9 905.1,413.1 893.7,414.1 883.1,414.9 873.9,415.7 866.5,416.4 860.5,416.9 855.3,417.3 850.3,417.5 844.8,417.7 838.3,417.7 830.6,417.6 822.2,417.4 813.3,417.0 804.4,416.6 795.6,416.1 787.3,415.7 779.1,415.2 770.6,414.7 762.3,414.2 754.7,413.7 748.3,413.2 743.6,412.9"/><polygon points="546.1,496.7 674.7,403.6 669.5,402.9 662.2,401.9 653.6,400.7 644.4,399.5 635.5,398.2 627.7,397.0 620.7,395.9 613.9,394.8 607.4,393.8 601.1,392.6 595.1,391.4 589.4,390.0 583.9,388.4 578.7,386.6 573.7,384.7 569.0,382.7 564.7,380.8 560.7,379.0 557.1,377.3 554.0,375.7 551.1,374.2 548.5,372.6 546.0,370.9 543.4,369.0 540.7,366.9 538.0,364.8 535.4,362.5 532.9,360.1 530.7,357.6 528.7,355.0 526.9,352.2 525.4,349.1 524.1,346.0 522.9,342.9 522.0,339.8 521.2,337.0 520.5,334.5 520.1,332.4 519.8,330.3 519.7,328.2 519.7,325.8 519.9,323.0 520.1,319.7 520.3,316.0 520.7,312.0 521.3,308.0 522.3,304.0 523.7,300.3 525.4,296.8 527.4,293.4 529.7,290.0 532.5,286.8 535.8,283.5 539.7,280.3 544.3,277.1 549.7,273.8 555.5,270.6 561.7,267.5 568.1,264.5 574.4,261.7 580.7,259.1 587.1,256.6 593.7,254.2 600.4,252.1 607.3,250.1 614.4,248.3 621.5,246.8 628.8,245.5 636.2,244.4 643.8,243.4 651.6,242.5 659.7,241.7 667.8,240.9 676.0,240.2 684.5,239.6 693.3,239.1 702.8,238.7 713.0,238.5 724.5,238.4 737.2,238.5 750.5,238.8 763.7,239.1 776.3,239.6 787.7,240.3 797.1,241.0 805.0,241.8 812.3,242.8 819.7,244.0 828.2,245.5 838.7,247.5 851.7,250.0 866.8,252.9 883.0,256.2 899.2,259.8 914.5,263.6 927.7,267.5 938.9,271.7 949.0,276.1 958.0,280.8 966.3,285.7 973.8,290.6 980.9,295.5 987.3,300.5 993.0,305.8 998.1,311.2 1002.4,316.4 1006.2,321.4 1009.4,326.0 1011.8,330.1 1013.5,333.7 1014.5,337.0 1015.1,340.3 1015.3,343.7 1015.4,347.4 1015.2,351.4 1014.8,355.7 1014.1,360.0 1013.0,364.3 1011.4,368.5 1009.4,372.4 1007.0,376.0 1004.4,379.3 1001.4,382.6 997.8,385.7 993.3,388.7 988.0,391.8 981.5,395.0 974.0,398.2 965.8,401.5 956.9,404.5 947.7,407.3 938.3,409.6 928.1,411.5 916.9,412.9 905.4,414.1 894.0,415.1 883.5,415.9 874.3,416.7 866.9,417.4 860.9,417.9 855.7,418.3 850.6,418.5 845.2,418.7 838.7,418.7 831.0,418.6 822.5,418.4 813.7,418.0 804.7,417.6 795.9,417.1 787.7,416.7 779.5,416.2 770.9,415.7 762.6,415.2 755.0,414.7 748.6,414.2 744.0,413.9"/><polygon points="546.4,497.7 675.0,404.6 669.8,403.9 662.5,402.9 653.9,401.7 644.8,400.5 635.9,399.2 628.0,398.0 621.0,396.9 614.2,395.8 607.7,394.8 601.4,393.6 595.4,392.4 589.7,391.0 584.2,389.4 579.0,387.6 574.0,385.7 569.4,383.7 565.0,381.8 561.0,380.0 557.4,378.3 554.3,376.7 551.5,375.2 548.9,373.6 546.3,371.9 543.7,370.0 541.0,367.9 538.3,365.8 535.7,363.5 533.3,361.1 531.0,358.6 529.0,356.0 527.3,353.2 525.7,350.1 524.4,347.0 523.3,343.9 522.3,340.8 521.5,338.0 520.9,335.5 520.4,333.4 520.1,331.3 520.0,329.2 520.0,326.8 520.2,324.0 520.4,320.7 520.6,317.0 521.0,313.0 521.6,309.0 522.6,305.0 524.0,301.3 525.7,297.8 527.7,294.4 530.1,291.0 532.8,287.8 536.1,284.5 540.0,281.3 544.6,278.1 550.0,274.8 555.9,271.6 562.0,268.5 568.4,265.5 574.7,262.7 581.0,260.1 587.4,257.6 594.0,255.2 600.8,253.1 607.7,251.1 614.7,249.3 621.9,247.8 629.1,246.5 636.5,245.4 644.1,244.4 651.9,243.5 660.0,242.7 668.2,241.9 676.4,241.2 684.8,240.6 693.7,240.1 703.1,239.7 713.3,239.5 724.8,239.4 737.5,239.5 750.8,239.8 764.1,240.1 776.7,240.6 788.0,241.3 797.4,242.0 805.3,242.8 812.6,243.8 820.1,245.0 828.6,246.5 839.0,248.5 852.0,251.0 867.2,253.9 883.4,257.2 899.6,260.8 914.8,264.6 928.0,268.5 939.2,272.7 949.3,277.1 958.4,281.8 966.6,286.7 974.2,291.6 981.2,296.5 987.6,301.5 993.4,306.8 998.4,312.2 1002.8,317.4 1006.5,322.4 1009.7,327.0 1012.1,331.1 1013.8,334.7 1014.9,338.0 1015.4,341.3 1015.7,344.7 1015.7,348.4 1015.6,352.4 1015.2,356.7 1014.4,361.0 1013.3,365.3 1011.7,369.5 1009.7,373.4 1007.4,377.0 1004.8,380.3 1001.7,383.6 998.1,386.7 993.7,389.7 988.3,392.8 981.8,396.0 974.4,399.2 966.1,402.5 957.3,405.5 948.0,408.3 938.6,410.6 928.4,412.5 917.3,413.9 905.7,415.1 894.4,416.1 883.8,416.9 874.6,417.7 867.2,418.4 861.2,418.9 856.0,419.3 851.0,419.5 845.5,419.7 839.0,419.7 831.3,419.6 822.9,419.4 814.0,419.0 805.0,418.6 796.3,418.1 788.0,417.7 779.8,417.2 771.3,416.7 763.0,416.2 755.4,415.7 749.0,415.2 744.3,414.9"/></g>
<linearGradient id="sideg" gradientUnits="userSpaceOnUse" x1="512" y1="0" x2="1017" y2="0"><stop offset="0" stop-color="#2e2c08"/><stop offset="0.17" stop-color="#5c5910"/><stop offset="0.85" stop-color="#615d10"/><stop offset="0.95" stop-color="#4a470c"/><stop offset="1" stop-color="#1e1d05"/></linearGradient>
<g fill="url(#sideg)" stroke="none"><polygon points="538.4,473.7 667.0,380.6 661.8,379.9 654.5,378.9 645.9,377.7 636.8,376.5 627.9,375.2 620.0,374.0 613.0,372.9 606.2,371.8 599.7,370.8 593.4,369.6 587.4,368.4 581.7,367.0 576.2,365.4 571.0,363.6 566.0,361.7 561.4,359.7 557.0,357.8 553.0,356.0 549.4,354.3 546.3,352.7 543.5,351.2 540.9,349.6 538.3,347.9 535.7,346.0 533.0,343.9 530.3,341.8 527.7,339.5 525.3,337.1 523.0,334.6 521.0,332.0 519.3,329.2 517.7,326.1 516.4,323.0 515.3,319.9 514.3,316.8 513.5,314.0 512.9,311.5 512.4,309.4 512.1,307.3 512.0,305.2 512.0,302.8 512.2,300.0 512.4,296.7 512.6,293.0 513.0,289.0 513.6,285.0 514.6,281.0 516.0,277.3 517.7,273.8 519.7,270.4 522.1,267.0 524.8,263.8 528.1,260.5 532.0,257.3 536.6,254.1 542.0,250.8 547.9,247.6 554.0,244.5 560.4,241.5 566.7,238.7 573.0,236.1 579.4,233.6 586.0,231.2 592.8,229.1 599.7,227.1 606.7,225.3 613.9,223.8 621.1,222.5 628.5,221.4 636.1,220.4 643.9,219.5 652.0,218.7 660.2,217.9 668.4,217.2 676.8,216.6 685.7,216.1 695.1,215.7 705.3,215.5 716.8,215.4 729.5,215.5 742.8,215.8 756.1,216.1 768.7,216.6 780.0,217.3 789.4,218.0 797.3,218.8 804.6,219.8 812.1,221.0 820.6,222.5 831.0,224.5 844.0,227.0 859.2,229.9 875.4,233.2 891.6,236.8 906.8,240.6 920.0,244.5 931.2,248.7 941.3,253.1 950.4,257.8 958.6,262.7 966.2,267.6 973.2,272.5 979.6,277.5 985.4,282.8 990.4,288.2 994.8,293.4 998.5,298.4 1001.7,303.0 1004.1,307.1 1005.8,310.7 1006.9,314.0 1007.4,317.3 1007.7,320.7 1007.7,324.4 1007.6,328.4 1007.2,332.7 1006.4,337.0 1005.3,341.3 1003.7,345.5 1001.7,349.4 999.4,353.0 996.8,356.3 993.7,359.6 990.1,362.7 985.7,365.7 980.3,368.8 973.8,372.0 966.4,375.2 958.1,378.5 949.3,381.5 940.0,384.3 930.6,386.6 920.4,388.5 909.3,389.9 897.7,391.1 886.4,392.1 875.8,392.9 866.6,393.7 859.2,394.4 853.2,394.9 848.0,395.3 843.0,395.5 837.5,395.7 831.0,395.7 823.3,395.6 814.9,395.4 806.0,395.0 797.0,394.6 788.3,394.1 780.0,393.7 771.8,393.2 763.3,392.7 755.0,392.2 747.4,391.7 741.0,391.2 736.3,390.9"/><polygon points="538.7,474.7 667.3,381.6 662.1,380.9 654.8,379.9 646.2,378.7 637.1,377.5 628.2,376.2 620.3,375.0 613.3,373.9 606.6,372.8 600.0,371.8 593.8,370.6 587.8,369.4 582.0,368.0 576.6,366.4 571.3,364.6 566.4,362.7 561.7,360.7 557.3,358.8 553.3,357.0 549.8,355.3 546.6,353.7 543.8,352.2 541.2,350.6 538.6,348.9 536.0,347.0 533.3,344.9 530.7,342.8 528.1,340.5 525.6,338.1 523.3,335.6 521.3,333.0 519.6,330.2 518.1,327.1 516.7,324.0 515.6,320.9 514.6,317.8 513.8,315.0 513.2,312.5 512.8,310.4 512.5,308.3 512.4,306.2 512.4,303.8 512.5,301.0 512.7,297.7 513.0,294.0 513.4,290.0 514.0,286.0 514.9,282.0 516.3,278.3 518.1,274.8 520.1,271.4 522.4,268.0 525.2,264.8 528.4,261.5 532.3,258.3 537.0,255.1 542.3,251.8 548.2,248.6 554.4,245.5 560.7,242.5 567.0,239.7 573.3,237.1 579.8,234.6 586.4,232.2 593.1,230.1 600.0,228.1 607.0,226.3 614.2,224.8 621.4,223.5 628.9,222.4 636.4,221.4 644.3,220.5 652.3,219.7 660.5,218.9 668.7,218.2 677.1,217.6 686.0,217.1 695.4,216.7 705.6,216.5 717.1,216.4 729.8,216.5 743.1,216.8 756.4,217.1 769.0,217.6 780.3,218.3 789.8,219.0 797.7,219.8 804.9,220.8 812.4,222.0 820.9,223.5 831.3,225.5 844.4,228.0 859.5,230.9 875.7,234.2 891.9,237.8 907.1,241.6 920.3,245.5 931.6,249.7 941.6,254.1 950.7,258.8 959.0,263.7 966.5,268.6 973.5,273.5 980.0,278.5 985.7,283.8 990.7,289.2 995.1,294.4 998.9,299.4 1002.0,304.0 1004.5,308.1 1006.1,311.7 1007.2,315.0 1007.8,318.3 1008.0,321.7 1008.0,325.4 1007.9,329.4 1007.5,333.7 1006.7,338.0 1005.6,342.3 1004.1,346.5 1002.0,350.4 999.7,354.0 997.1,357.3 994.1,360.6 990.4,363.7 986.0,366.7 980.6,369.8 974.2,373.0 966.7,376.2 958.4,379.5 949.6,382.5 940.4,385.3 930.9,387.6 920.8,389.5 909.6,390.9 898.1,392.1 886.7,393.1 876.1,393.9 866.9,394.7 859.5,395.4 853.5,395.9 848.3,396.3 843.3,396.5 837.8,396.7 831.3,396.7 823.6,396.6 815.2,396.4 806.3,396.0 797.4,395.6 788.6,395.1 780.3,394.7 772.1,394.2 763.6,393.7 755.3,393.2 747.7,392.7 741.3,392.2 736.6,391.9"/><polygon points="539.1,475.7 667.7,382.6 662.5,381.9 655.2,380.9 646.6,379.7 637.4,378.5 628.5,377.2 620.7,376.0 613.7,374.9 606.9,373.8 600.4,372.8 594.1,371.6 588.1,370.4 582.4,369.0 576.9,367.4 571.7,365.6 566.7,363.7 562.0,361.7 557.7,359.8 553.7,358.0 550.1,356.3 547.0,354.7 544.1,353.2 541.5,351.6 539.0,349.9 536.4,348.0 533.7,345.9 531.0,343.8 528.4,341.5 525.9,339.1 523.7,336.6 521.7,334.0 519.9,331.2 518.4,328.1 517.1,325.0 515.9,321.9 515.0,318.8 514.2,316.0 513.5,313.5 513.1,311.4 512.8,309.3 512.7,307.2 512.7,304.8 512.9,302.0 513.1,298.7 513.3,295.0 513.7,291.0 514.3,287.0 515.3,283.0 516.7,279.3 518.4,275.8 520.4,272.4 522.7,269.0 525.5,265.8 528.8,262.5 532.7,259.3 537.3,256.1 542.7,252.8 548.5,249.6 554.7,246.5 561.1,243.5 567.4,240.7 573.7,238.1 580.1,235.6 586.7,233.2 593.4,231.1 600.3,229.1 607.4,227.3 614.5,225.8 621.8,224.5 629.2,223.4 636.8,222.4 644.6,221.5 652.7,220.7 660.8,219.9 669.0,219.2 677.5,218.6 686.3,218.1 695.8,217.7 706.0,217.5 717.5,217.4 730.2,217.5 743.5,217.8 756.7,218.1 769.3,218.6 780.7,219.3 790.1,220.0 798.0,220.8 805.3,221.8 812.7,223.0 821.2,224.5 831.7,226.5 844.7,229.0 859.8,231.9 876.0,235.2 892.2,238.8 907.5,242.6 920.7,246.5 931.9,250.7 942.0,255.1 951.0,259.8 959.3,264.7 966.8,269.6 973.9,274.5 980.3,279.5 986.0,284.8 991.1,290.2 995.4,295.4 999.2,300.4 1002.4,305.0 1004.8,309.1 1006.5,312.7 1007.5,316.0 1008.1,319.3 1008.3,322.7 1008.4,326.4 1008.2,330.4 1007.8,334.7 1007.1,339.0 1006.0,343.3 1004.4,347.5 1002.4,351.4 1000.0,355.0 997.4,358.3 994.4,361.6 990.8,364.7 986.3,367.7 981.0,370.8 974.5,374.0 967.0,377.2 958.8,380.5 949.9,383.5 940.7,386.3 931.3,388.6 921.1,390.5 909.9,391.9 898.4,393.1 887.0,394.1 876.5,394.9 867.3,395.7 859.9,396.4 853.9,396.9 848.7,397.3 843.6,397.5 838.2,397.7 831.7,397.7 824.0,397.6 815.5,397.4 806.7,397.0 797.7,396.6 788.9,396.1 780.7,395.7 772.5,395.2 763.9,394.7 755.6,394.2 748.0,393.7 741.6,393.2 737.0,392.9"/><polygon points="539.4,476.7 668.0,383.6 662.8,382.9 655.5,381.9 646.9,380.7 637.8,379.5 628.9,378.2 621.0,377.0 614.0,375.9 607.2,374.8 600.7,373.8 594.4,372.6 588.4,371.4 582.7,370.0 577.2,368.4 572.0,366.6 567.0,364.7 562.4,362.7 558.0,360.8 554.0,359.0 550.4,357.3 547.3,355.7 544.5,354.2 541.9,352.6 539.3,350.9 536.7,349.0 534.0,346.9 531.3,344.8 528.7,342.5 526.3,340.1 524.0,337.6 522.0,335.0 520.3,332.2 518.7,329.1 517.4,326.0 516.3,322.9 515.3,319.8 514.5,317.0 513.9,314.5 513.4,312.4 513.1,310.3 513.0,308.2 513.0,305.8 513.2,303.0 513.4,299.7 513.6,296.0 514.0,292.0 514.6,288.0 515.6,284.0 517.0,280.3 518.7,276.8 520.7,273.4 523.1,270.0 525.8,266.8 529.1,263.5 533.0,260.3 537.6,257.1 543.0,253.8 548.9,250.6 555.0,247.5 561.4,244.5 567.7,241.7 574.0,239.1 580.4,236.6 587.0,234.2 593.8,232.1 600.7,230.1 607.7,228.3 614.9,226.8 622.1,225.5 629.5,224.4 637.1,223.4 644.9,222.5 653.0,221.7 661.2,220.9 669.4,220.2 677.8,219.6 686.7,219.1 696.1,218.7 706.3,218.5 717.8,218.4 730.5,218.5 743.8,218.8 757.1,219.1 769.7,219.6 781.0,220.3 790.4,221.0 798.3,221.8 805.6,222.8 813.1,224.0 821.6,225.5 832.0,227.5 845.0,230.0 860.2,232.9 876.4,236.2 892.6,239.8 907.8,243.6 921.0,247.5 932.2,251.7 942.3,256.1 951.4,260.8 959.6,265.7 967.2,270.6 974.2,275.5 980.6,280.5 986.4,285.8 991.4,291.2 995.8,296.4 999.5,301.4 1002.7,306.0 1005.1,310.1 1006.8,313.7 1007.9,317.0 1008.4,320.3 1008.7,323.7 1008.7,327.4 1008.6,331.4 1008.2,335.7 1007.4,340.0 1006.3,344.3 1004.7,348.5 1002.7,352.4 1000.4,356.0 997.8,359.3 994.7,362.6 991.1,365.7 986.7,368.7 981.3,371.8 974.8,375.0 967.4,378.2 959.1,381.5 950.3,384.5 941.0,387.3 931.6,389.6 921.4,391.5 910.3,392.9 898.7,394.1 887.4,395.1 876.8,395.9 867.6,396.7 860.2,397.4 854.2,397.9 849.0,398.3 844.0,398.5 838.5,398.7 832.0,398.7 824.3,398.6 815.9,398.4 807.0,398.0 798.0,397.6 789.3,397.1 781.0,396.7 772.8,396.2 764.3,395.7 756.0,395.2 748.4,394.7 742.0,394.2 737.3,393.9"/><polygon points="539.7,477.7 668.3,384.6 663.1,383.9 655.8,382.9 647.2,381.7 638.1,380.5 629.2,379.2 621.3,378.0 614.3,376.9 607.6,375.8 601.0,374.8 594.8,373.6 588.8,372.4 583.0,371.0 577.6,369.4 572.3,367.6 567.4,365.7 562.7,363.7 558.3,361.8 554.3,360.0 550.8,358.3 547.6,356.7 544.8,355.2 542.2,353.6 539.6,351.9 537.0,350.0 534.3,347.9 531.7,345.8 529.1,343.5 526.6,341.1 524.3,338.6 522.3,336.0 520.6,333.2 519.1,330.1 517.7,327.0 516.6,323.9 515.6,320.8 514.8,318.0 514.2,315.5 513.8,313.4 513.5,311.3 513.4,309.2 513.4,306.8 513.5,304.0 513.7,300.7 514.0,297.0 514.4,293.0 515.0,289.0 515.9,285.0 517.3,281.3 519.1,277.8 521.1,274.4 523.4,271.0 526.2,267.8 529.4,264.5 533.3,261.3 538.0,258.1 543.3,254.8 549.2,251.6 555.4,248.5 561.7,245.5 568.0,242.7 574.3,240.1 580.8,237.6 587.4,235.2 594.1,233.1 601.0,231.1 608.0,229.3 615.2,227.8 622.4,226.5 629.9,225.4 637.4,224.4 645.3,223.5 653.3,222.7 661.5,221.9 669.7,221.2 678.1,220.6 687.0,220.1 696.4,219.7 706.6,219.5 718.1,219.4 730.8,219.5 744.1,219.8 757.4,220.1 770.0,220.6 781.3,221.3 790.8,222.0 798.7,222.8 805.9,223.8 813.4,225.0 821.9,226.5 832.3,228.5 845.4,231.0 860.5,233.9 876.7,237.2 892.9,240.8 908.1,244.6 921.3,248.5 932.6,252.7 942.6,257.1 951.7,261.8 960.0,266.7 967.5,271.6 974.5,276.5 981.0,281.5 986.7,286.8 991.7,292.2 996.1,297.4 999.9,302.4 1003.0,307.0 1005.5,311.1 1007.1,314.7 1008.2,318.0 1008.8,321.3 1009.0,324.7 1009.0,328.4 1008.9,332.4 1008.5,336.7 1007.7,341.0 1006.6,345.3 1005.1,349.5 1003.0,353.4 1000.7,357.0 998.1,360.3 995.1,363.6 991.4,366.7 987.0,369.7 981.6,372.8 975.2,376.0 967.7,379.2 959.4,382.5 950.6,385.5 941.4,388.3 931.9,390.6 921.8,392.5 910.6,393.9 899.1,395.1 887.7,396.1 877.1,396.9 867.9,397.7 860.5,398.4 854.5,398.9 849.3,399.3 844.3,399.5 838.8,399.7 832.3,399.7 824.6,399.6 816.2,399.4 807.3,399.0 798.4,398.6 789.6,398.1 781.3,397.7 773.1,397.2 764.6,396.7 756.3,396.2 748.7,395.7 742.3,395.2 737.6,394.9"/><polygon points="540.1,478.7 668.7,385.6 663.5,384.9 656.2,383.9 647.6,382.7 638.4,381.5 629.5,380.2 621.7,379.0 614.7,377.9 607.9,376.8 601.4,375.8 595.1,374.6 589.1,373.4 583.4,372.0 577.9,370.4 572.7,368.6 567.7,366.7 563.0,364.7 558.7,362.8 554.7,361.0 551.1,359.3 548.0,357.7 545.1,356.2 542.5,354.6 540.0,352.9 537.4,351.0 534.7,348.9 532.0,346.8 529.4,344.5 526.9,342.1 524.7,339.6 522.7,337.0 520.9,334.2 519.4,331.1 518.1,328.0 516.9,324.9 516.0,321.8 515.2,319.0 514.5,316.5 514.1,314.4 513.8,312.3 513.7,310.2 513.7,307.8 513.9,305.0 514.1,301.7 514.3,298.0 514.7,294.0 515.3,290.0 516.3,286.0 517.7,282.3 519.4,278.8 521.4,275.4 523.7,272.0 526.5,268.8 529.8,265.5 533.7,262.3 538.3,259.1 543.7,255.8 549.5,252.6 555.7,249.5 562.1,246.5 568.4,243.7 574.7,241.1 581.1,238.6 587.7,236.2 594.4,234.1 601.3,232.1 608.4,230.3 615.5,228.8 622.8,227.5 630.2,226.4 637.8,225.4 645.6,224.5 653.7,223.7 661.8,222.9 670.0,222.2 678.5,221.6 687.3,221.1 696.8,220.7 707.0,220.5 718.5,220.4 731.2,220.5 744.5,220.8 757.7,221.1 770.3,221.6 781.7,222.3 791.1,223.0 799.0,223.8 806.3,224.8 813.7,226.0 822.2,227.5 832.7,229.5 845.7,232.0 860.8,234.9 877.0,238.2 893.2,241.8 908.5,245.6 921.7,249.5 932.9,253.7 943.0,258.1 952.0,262.8 960.3,267.7 967.8,272.6 974.9,277.5 981.3,282.5 987.0,287.8 992.1,293.2 996.4,298.4 1000.2,303.4 1003.4,308.0 1005.8,312.1 1007.5,315.7 1008.5,319.0 1009.1,322.3 1009.3,325.7 1009.4,329.4 1009.2,333.4 1008.8,337.7 1008.1,342.0 1007.0,346.3 1005.4,350.5 1003.4,354.4 1001.0,358.0 998.4,361.3 995.4,364.6 991.8,367.7 987.3,370.7 982.0,373.8 975.5,377.0 968.0,380.2 959.8,383.5 950.9,386.5 941.7,389.3 932.3,391.6 922.1,393.5 910.9,394.9 899.4,396.1 888.0,397.1 877.5,397.9 868.3,398.7 860.9,399.4 854.9,399.9 849.7,400.3 844.6,400.5 839.2,400.7 832.7,400.7 825.0,400.6 816.5,400.4 807.7,400.0 798.7,399.6 789.9,399.1 781.7,398.7 773.5,398.2 764.9,397.7 756.6,397.2 749.0,396.7 742.6,396.2 738.0,395.9"/><polygon points="540.4,479.7 669.0,386.6 663.8,385.9 656.5,384.9 647.9,383.7 638.8,382.5 629.9,381.2 622.0,380.0 615.0,378.9 608.2,377.8 601.7,376.8 595.4,375.6 589.4,374.4 583.7,373.0 578.2,371.4 573.0,369.6 568.0,367.7 563.4,365.7 559.0,363.8 555.0,362.0 551.4,360.3 548.3,358.7 545.5,357.2 542.9,355.6 540.3,353.9 537.7,352.0 535.0,349.9 532.3,347.8 529.7,345.5 527.3,343.1 525.0,340.6 523.0,338.0 521.3,335.2 519.7,332.1 518.4,329.0 517.3,325.9 516.3,322.8 515.5,320.0 514.9,317.5 514.4,315.4 514.1,313.3 514.0,311.2 514.0,308.8 514.2,306.0 514.4,302.7 514.6,299.0 515.0,295.0 515.6,291.0 516.6,287.0 518.0,283.3 519.7,279.8 521.7,276.4 524.1,273.0 526.8,269.8 530.1,266.5 534.0,263.3 538.6,260.1 544.0,256.8 549.9,253.6 556.0,250.5 562.4,247.5 568.7,244.7 575.0,242.1 581.4,239.6 588.0,237.2 594.8,235.1 601.7,233.1 608.7,231.3 615.9,229.8 623.1,228.5 630.5,227.4 638.1,226.4 645.9,225.5 654.0,224.7 662.2,223.9 670.4,223.2 678.8,222.6 687.7,222.1 697.1,221.7 707.3,221.5 718.8,221.4 731.5,221.5 744.8,221.8 758.1,222.1 770.7,222.6 782.0,223.3 791.4,224.0 799.3,224.8 806.6,225.8 814.1,227.0 822.6,228.5 833.0,230.5 846.0,233.0 861.2,235.9 877.4,239.2 893.6,242.8 908.8,246.6 922.0,250.5 933.2,254.7 943.3,259.1 952.4,263.8 960.6,268.7 968.2,273.6 975.2,278.5 981.6,283.5 987.4,288.8 992.4,294.2 996.8,299.4 1000.5,304.4 1003.7,309.0 1006.1,313.1 1007.8,316.7 1008.9,320.0 1009.4,323.3 1009.7,326.7 1009.7,330.4 1009.6,334.4 1009.2,338.7 1008.4,343.0 1007.3,347.3 1005.7,351.5 1003.7,355.4 1001.4,359.0 998.8,362.3 995.7,365.6 992.1,368.7 987.7,371.7 982.3,374.8 975.8,378.0 968.4,381.2 960.1,384.5 951.3,387.5 942.0,390.3 932.6,392.6 922.4,394.5 911.3,395.9 899.7,397.1 888.4,398.1 877.8,398.9 868.6,399.7 861.2,400.4 855.2,400.9 850.0,401.3 845.0,401.5 839.5,401.7 833.0,401.7 825.3,401.6 816.9,401.4 808.0,401.0 799.0,400.6 790.3,400.1 782.0,399.7 773.8,399.2 765.3,398.7 757.0,398.2 749.4,397.7 743.0,397.2 738.3,396.9"/><polygon points="540.7,480.7 669.3,387.6 664.1,386.9 656.8,385.9 648.2,384.7 639.1,383.5 630.2,382.2 622.3,381.0 615.3,379.9 608.6,378.8 602.0,377.8 595.8,376.6 589.8,375.4 584.0,374.0 578.6,372.4 573.3,370.6 568.4,368.7 563.7,366.7 559.3,364.8 555.3,363.0 551.8,361.3 548.6,359.7 545.8,358.2 543.2,356.6 540.6,354.9 538.0,353.0 535.3,350.9 532.7,348.8 530.1,346.5 527.6,344.1 525.3,341.6 523.3,339.0 521.6,336.2 520.1,333.1 518.7,330.0 517.6,326.9 516.6,323.8 515.8,321.0 515.2,318.5 514.8,316.4 514.5,314.3 514.4,312.2 514.4,309.8 514.5,307.0 514.7,303.7 515.0,300.0 515.4,296.0 516.0,292.0 516.9,288.0 518.3,284.3 520.1,280.8 522.1,277.4 524.4,274.0 527.2,270.8 530.4,267.5 534.3,264.3 539.0,261.1 544.3,257.8 550.2,254.6 556.4,251.5 562.7,248.5 569.0,245.7 575.3,243.1 581.8,240.6 588.4,238.2 595.1,236.1 602.0,234.1 609.0,232.3 616.2,230.8 623.4,229.5 630.9,228.4 638.4,227.4 646.3,226.5 654.3,225.7 662.5,224.9 670.7,224.2 679.1,223.6 688.0,223.1 697.4,222.7 707.6,222.5 719.1,222.4 731.8,222.5 745.1,222.8 758.4,223.1 771.0,223.6 782.3,224.3 791.8,225.0 799.7,225.8 806.9,226.8 814.4,228.0 822.9,229.5 833.3,231.5 846.4,234.0 861.5,236.9 877.7,240.2 893.9,243.8 909.1,247.6 922.3,251.5 933.6,255.7 943.6,260.1 952.7,264.8 961.0,269.7 968.5,274.6 975.5,279.5 982.0,284.5 987.7,289.8 992.7,295.2 997.1,300.4 1000.9,305.4 1004.0,310.0 1006.5,314.1 1008.1,317.7 1009.2,321.0 1009.8,324.3 1010.0,327.7 1010.0,331.4 1009.9,335.4 1009.5,339.7 1008.7,344.0 1007.6,348.3 1006.1,352.5 1004.0,356.4 1001.7,360.0 999.1,363.3 996.1,366.6 992.4,369.7 988.0,372.7 982.6,375.8 976.2,379.0 968.7,382.2 960.4,385.5 951.6,388.5 942.4,391.3 932.9,393.6 922.8,395.5 911.6,396.9 900.1,398.1 888.7,399.1 878.1,399.9 868.9,400.7 861.5,401.4 855.5,401.9 850.3,402.3 845.3,402.5 839.8,402.7 833.3,402.7 825.6,402.6 817.2,402.4 808.3,402.0 799.4,401.6 790.6,401.1 782.3,400.7 774.1,400.2 765.6,399.7 757.3,399.2 749.7,398.7 743.3,398.2 738.6,397.9"/><polygon points="541.1,481.7 669.7,388.6 664.5,387.9 657.2,386.9 648.6,385.7 639.4,384.5 630.5,383.2 622.7,382.0 615.7,380.9 608.9,379.8 602.4,378.8 596.1,377.6 590.1,376.4 584.4,375.0 578.9,373.4 573.7,371.6 568.7,369.7 564.0,367.7 559.7,365.8 555.7,364.0 552.1,362.3 549.0,360.7 546.1,359.2 543.5,357.6 541.0,355.9 538.4,354.0 535.7,351.9 533.0,349.8 530.4,347.5 527.9,345.1 525.7,342.6 523.7,340.0 521.9,337.2 520.4,334.1 519.1,331.0 517.9,327.9 517.0,324.8 516.2,322.0 515.5,319.5 515.1,317.4 514.8,315.3 514.7,313.2 514.7,310.8 514.9,308.0 515.1,304.7 515.3,301.0 515.7,297.0 516.3,293.0 517.3,289.0 518.7,285.3 520.4,281.8 522.4,278.4 524.7,275.0 527.5,271.8 530.8,268.5 534.7,265.3 539.3,262.1 544.7,258.8 550.5,255.6 556.7,252.5 563.1,249.5 569.4,246.7 575.7,244.1 582.1,241.6 588.7,239.2 595.4,237.1 602.3,235.1 609.4,233.3 616.5,231.8 623.8,230.5 631.2,229.4 638.8,228.4 646.6,227.5 654.7,226.7 662.8,225.9 671.0,225.2 679.5,224.6 688.3,224.1 697.8,223.7 708.0,223.5 719.5,223.4 732.2,223.5 745.5,223.8 758.7,224.1 771.3,224.6 782.7,225.3 792.1,226.0 800.0,226.8 807.3,227.8 814.7,229.0 823.2,230.5 833.7,232.5 846.7,235.0 861.8,237.9 878.0,241.2 894.2,244.8 909.5,248.6 922.7,252.5 933.9,256.7 944.0,261.1 953.0,265.8 961.3,270.7 968.8,275.6 975.9,280.5 982.3,285.5 988.0,290.8 993.1,296.2 997.4,301.4 1001.2,306.4 1004.4,311.0 1006.8,315.1 1008.5,318.7 1009.5,322.0 1010.1,325.3 1010.3,328.7 1010.4,332.4 1010.2,336.4 1009.8,340.7 1009.1,345.0 1008.0,349.3 1006.4,353.5 1004.4,357.4 1002.0,361.0 999.4,364.3 996.4,367.6 992.8,370.7 988.3,373.7 983.0,376.8 976.5,380.0 969.0,383.2 960.8,386.5 951.9,389.5 942.7,392.3 933.3,394.6 923.1,396.5 911.9,397.9 900.4,399.1 889.0,400.1 878.5,400.9 869.3,401.7 861.9,402.4 855.9,402.9 850.7,403.3 845.6,403.5 840.2,403.7 833.7,403.7 826.0,403.6 817.5,403.4 808.7,403.0 799.7,402.6 790.9,402.1 782.7,401.7 774.5,401.2 765.9,400.7 757.6,400.2 750.0,399.7 743.6,399.2 739.0,398.9"/><polygon points="541.4,482.7 670.0,389.6 664.8,388.9 657.5,387.9 648.9,386.7 639.8,385.5 630.9,384.2 623.0,383.0 616.0,381.9 609.2,380.8 602.7,379.8 596.4,378.6 590.4,377.4 584.7,376.0 579.2,374.4 574.0,372.6 569.0,370.7 564.4,368.7 560.0,366.8 556.0,365.0 552.4,363.3 549.3,361.7 546.5,360.2 543.9,358.6 541.3,356.9 538.7,355.0 536.0,352.9 533.3,350.8 530.7,348.5 528.3,346.1 526.0,343.6 524.0,341.0 522.3,338.2 520.7,335.1 519.4,332.0 518.3,328.9 517.3,325.8 516.5,323.0 515.9,320.5 515.4,318.4 515.1,316.3 515.0,314.2 515.0,311.8 515.2,309.0 515.4,305.7 515.6,302.0 516.0,298.0 516.6,294.0 517.6,290.0 519.0,286.3 520.7,282.8 522.7,279.4 525.1,276.0 527.8,272.8 531.1,269.5 535.0,266.3 539.6,263.1 545.0,259.8 550.9,256.6 557.0,253.5 563.4,250.5 569.7,247.7 576.0,245.1 582.4,242.6 589.0,240.2 595.8,238.1 602.7,236.1 609.7,234.3 616.9,232.8 624.1,231.5 631.5,230.4 639.1,229.4 646.9,228.5 655.0,227.7 663.2,226.9 671.4,226.2 679.8,225.6 688.7,225.1 698.1,224.7 708.3,224.5 719.8,224.4 732.5,224.5 745.8,224.8 759.1,225.1 771.7,225.6 783.0,226.3 792.4,227.0 800.3,227.8 807.6,228.8 815.1,230.0 823.6,231.5 834.0,233.5 847.0,236.0 862.2,238.9 878.4,242.2 894.6,245.8 909.8,249.6 923.0,253.5 934.2,257.7 944.3,262.1 953.4,266.8 961.6,271.7 969.2,276.6 976.2,281.5 982.6,286.5 988.4,291.8 993.4,297.2 997.8,302.4 1001.5,307.4 1004.7,312.0 1007.1,316.1 1008.8,319.7 1009.9,323.0 1010.4,326.3 1010.7,329.7 1010.7,333.4 1010.6,337.4 1010.2,341.7 1009.4,346.0 1008.3,350.3 1006.7,354.5 1004.7,358.4 1002.4,362.0 999.8,365.3 996.7,368.6 993.1,371.7 988.7,374.7 983.3,377.8 976.8,381.0 969.4,384.2 961.1,387.5 952.3,390.5 943.0,393.3 933.6,395.6 923.4,397.5 912.3,398.9 900.7,400.1 889.4,401.1 878.8,401.9 869.6,402.7 862.2,403.4 856.2,403.9 851.0,404.3 846.0,404.5 840.5,404.7 834.0,404.7 826.3,404.6 817.9,404.4 809.0,404.0 800.0,403.6 791.3,403.1 783.0,402.7 774.8,402.2 766.3,401.7 758.0,401.2 750.4,400.7 744.0,400.2 739.3,399.9"/><polygon points="541.7,483.7 670.3,390.6 665.1,389.9 657.8,388.9 649.2,387.7 640.1,386.5 631.2,385.2 623.3,384.0 616.3,382.9 609.6,381.8 603.0,380.8 596.8,379.6 590.8,378.4 585.0,377.0 579.6,375.4 574.3,373.6 569.4,371.7 564.7,369.7 560.3,367.8 556.3,366.0 552.8,364.3 549.6,362.7 546.8,361.2 544.2,359.6 541.6,357.9 539.0,356.0 536.3,353.9 533.7,351.8 531.1,349.5 528.6,347.1 526.3,344.6 524.3,342.0 522.6,339.2 521.1,336.1 519.7,333.0 518.6,329.9 517.6,326.8 516.8,324.0 516.2,321.5 515.8,319.4 515.5,317.3 515.4,315.2 515.4,312.8 515.5,310.0 515.7,306.7 516.0,303.0 516.4,299.0 517.0,295.0 517.9,291.0 519.3,287.3 521.1,283.8 523.1,280.4 525.4,277.0 528.2,273.8 531.4,270.5 535.3,267.3 540.0,264.1 545.3,260.8 551.2,257.6 557.4,254.5 563.7,251.5 570.0,248.7 576.3,246.1 582.8,243.6 589.4,241.2 596.1,239.1 603.0,237.1 610.0,235.3 617.2,233.8 624.4,232.5 631.9,231.4 639.4,230.4 647.3,229.5 655.3,228.7 663.5,227.9 671.7,227.2 680.1,226.6 689.0,226.1 698.4,225.7 708.6,225.5 720.1,225.4 732.8,225.5 746.1,225.8 759.4,226.1 772.0,226.6 783.3,227.3 792.8,228.0 800.7,228.8 807.9,229.8 815.4,231.0 823.9,232.5 834.3,234.5 847.4,237.0 862.5,239.9 878.7,243.2 894.9,246.8 910.1,250.6 923.3,254.5 934.6,258.7 944.6,263.1 953.7,267.8 962.0,272.7 969.5,277.6 976.5,282.5 983.0,287.5 988.7,292.8 993.7,298.2 998.1,303.4 1001.9,308.4 1005.0,313.0 1007.5,317.1 1009.1,320.7 1010.2,324.0 1010.8,327.3 1011.0,330.7 1011.0,334.4 1010.9,338.4 1010.5,342.7 1009.7,347.0 1008.6,351.3 1007.1,355.5 1005.0,359.4 1002.7,363.0 1000.1,366.3 997.1,369.6 993.4,372.7 989.0,375.7 983.6,378.8 977.2,382.0 969.7,385.2 961.4,388.5 952.6,391.5 943.4,394.3 933.9,396.6 923.8,398.5 912.6,399.9 901.1,401.1 889.7,402.1 879.1,402.9 869.9,403.7 862.5,404.4 856.5,404.9 851.3,405.3 846.3,405.5 840.8,405.7 834.3,405.7 826.6,405.6 818.2,405.4 809.3,405.0 800.4,404.6 791.6,404.1 783.3,403.7 775.1,403.2 766.6,402.7 758.3,402.2 750.7,401.7 744.3,401.2 739.6,400.9"/><polygon points="542.1,484.7 670.7,391.6 665.5,390.9 658.2,389.9 649.6,388.7 640.4,387.5 631.5,386.2 623.7,385.0 616.7,383.9 609.9,382.8 603.4,381.8 597.1,380.6 591.1,379.4 585.4,378.0 579.9,376.4 574.7,374.6 569.7,372.7 565.0,370.7 560.7,368.8 556.7,367.0 553.1,365.3 550.0,363.7 547.1,362.2 544.5,360.6 542.0,358.9 539.4,357.0 536.7,354.9 534.0,352.8 531.4,350.5 528.9,348.1 526.7,345.6 524.7,343.0 522.9,340.2 521.4,337.1 520.1,334.0 518.9,330.9 518.0,327.8 517.2,325.0 516.5,322.5 516.1,320.4 515.8,318.3 515.7,316.2 515.7,313.8 515.9,311.0 516.1,307.7 516.3,304.0 516.7,300.0 517.3,296.0 518.3,292.0 519.7,288.3 521.4,284.8 523.4,281.4 525.7,278.0 528.5,274.8 531.8,271.5 535.7,268.3 540.3,265.1 545.7,261.8 551.5,258.6 557.7,255.5 564.1,252.5 570.4,249.7 576.7,247.1 583.1,244.6 589.7,242.2 596.4,240.1 603.3,238.1 610.4,236.3 617.5,234.8 624.8,233.5 632.2,232.4 639.8,231.4 647.6,230.5 655.7,229.7 663.8,228.9 672.0,228.2 680.5,227.6 689.3,227.1 698.8,226.7 709.0,226.5 720.5,226.4 733.2,226.5 746.5,226.8 759.7,227.1 772.3,227.6 783.7,228.3 793.1,229.0 801.0,229.8 808.3,230.8 815.7,232.0 824.2,233.5 834.7,235.5 847.7,238.0 862.8,240.9 879.0,244.2 895.2,247.8 910.5,251.6 923.7,255.5 934.9,259.7 945.0,264.1 954.0,268.8 962.3,273.7 969.8,278.6 976.9,283.5 983.3,288.5 989.0,293.8 994.1,299.2 998.4,304.4 1002.2,309.4 1005.4,314.0 1007.8,318.1 1009.5,321.7 1010.5,325.0 1011.1,328.3 1011.3,331.7 1011.4,335.4 1011.2,339.4 1010.8,343.7 1010.1,348.0 1009.0,352.3 1007.4,356.5 1005.4,360.4 1003.0,364.0 1000.4,367.3 997.4,370.6 993.8,373.7 989.3,376.7 984.0,379.8 977.5,383.0 970.0,386.2 961.8,389.5 952.9,392.5 943.7,395.3 934.3,397.6 924.1,399.5 912.9,400.9 901.4,402.1 890.0,403.1 879.5,403.9 870.3,404.7 862.9,405.4 856.9,405.9 851.7,406.3 846.6,406.5 841.2,406.7 834.7,406.7 827.0,406.6 818.5,406.4 809.7,406.0 800.7,405.6 791.9,405.1 783.7,404.7 775.5,404.2 766.9,403.7 758.6,403.2 751.0,402.7 744.6,402.2 740.0,401.9"/><polygon points="542.4,485.7 671.0,392.6 665.8,391.9 658.5,390.9 649.9,389.7 640.8,388.5 631.9,387.2 624.0,386.0 617.0,384.9 610.2,383.8 603.7,382.8 597.4,381.6 591.4,380.4 585.7,379.0 580.2,377.4 575.0,375.6 570.0,373.7 565.4,371.7 561.0,369.8 557.0,368.0 553.4,366.3 550.3,364.7 547.5,363.2 544.9,361.6 542.3,359.9 539.7,358.0 537.0,355.9 534.3,353.8 531.7,351.5 529.3,349.1 527.0,346.6 525.0,344.0 523.3,341.2 521.7,338.1 520.4,335.0 519.3,331.9 518.3,328.8 517.5,326.0 516.9,323.5 516.4,321.4 516.1,319.3 516.0,317.2 516.0,314.8 516.2,312.0 516.4,308.7 516.6,305.0 517.0,301.0 517.6,297.0 518.6,293.0 520.0,289.3 521.7,285.8 523.7,282.4 526.1,279.0 528.8,275.8 532.1,272.5 536.0,269.3 540.6,266.1 546.0,262.8 551.9,259.6 558.0,256.5 564.4,253.5 570.7,250.7 577.0,248.1 583.4,245.6 590.0,243.2 596.8,241.1 603.7,239.1 610.7,237.3 617.9,235.8 625.1,234.5 632.5,233.4 640.1,232.4 647.9,231.5 656.0,230.7 664.2,229.9 672.4,229.2 680.8,228.6 689.7,228.1 699.1,227.7 709.3,227.5 720.8,227.4 733.5,227.5 746.8,227.8 760.1,228.1 772.7,228.6 784.0,229.3 793.4,230.0 801.3,230.8 808.6,231.8 816.1,233.0 824.6,234.5 835.0,236.5 848.0,239.0 863.2,241.9 879.4,245.2 895.6,248.8 910.8,252.6 924.0,256.5 935.2,260.7 945.3,265.1 954.4,269.8 962.6,274.7 970.2,279.6 977.2,284.5 983.6,289.5 989.4,294.8 994.4,300.2 998.8,305.4 1002.5,310.4 1005.7,315.0 1008.1,319.1 1009.8,322.7 1010.9,326.0 1011.4,329.3 1011.7,332.7 1011.7,336.4 1011.6,340.4 1011.2,344.7 1010.4,349.0 1009.3,353.3 1007.7,357.5 1005.7,361.4 1003.4,365.0 1000.8,368.3 997.7,371.6 994.1,374.7 989.7,377.7 984.3,380.8 977.8,384.0 970.4,387.2 962.1,390.5 953.3,393.5 944.0,396.3 934.6,398.6 924.4,400.5 913.3,401.9 901.7,403.1 890.4,404.1 879.8,404.9 870.6,405.7 863.2,406.4 857.2,406.9 852.0,407.3 847.0,407.5 841.5,407.7 835.0,407.7 827.3,407.6 818.9,407.4 810.0,407.0 801.0,406.6 792.3,406.1 784.0,405.7 775.8,405.2 767.3,404.7 759.0,404.2 751.4,403.7 745.0,403.2 740.3,402.9"/><polygon points="542.7,486.7 671.3,393.6 666.1,392.9 658.8,391.9 650.2,390.7 641.1,389.5 632.2,388.2 624.3,387.0 617.3,385.9 610.6,384.8 604.0,383.8 597.8,382.6 591.8,381.4 586.0,380.0 580.6,378.4 575.3,376.6 570.4,374.7 565.7,372.7 561.3,370.8 557.3,369.0 553.8,367.3 550.6,365.7 547.8,364.2 545.2,362.6 542.6,360.9 540.0,359.0 537.3,356.9 534.7,354.8 532.1,352.5 529.6,350.1 527.3,347.6 525.3,345.0 523.6,342.2 522.1,339.1 520.7,336.0 519.6,332.9 518.6,329.8 517.8,327.0 517.2,324.5 516.8,322.4 516.5,320.3 516.4,318.2 516.4,315.8 516.5,313.0 516.7,309.7 517.0,306.0 517.4,302.0 518.0,298.0 518.9,294.0 520.3,290.3 522.1,286.8 524.1,283.4 526.4,280.0 529.2,276.8 532.4,273.5 536.3,270.3 541.0,267.1 546.3,263.8 552.2,260.6 558.4,257.5 564.7,254.5 571.0,251.7 577.3,249.1 583.8,246.6 590.4,244.2 597.1,242.1 604.0,240.1 611.0,238.3 618.2,236.8 625.4,235.5 632.9,234.4 640.4,233.4 648.3,232.5 656.3,231.7 664.5,230.9 672.7,230.2 681.1,229.6 690.0,229.1 699.4,228.7 709.6,228.5 721.1,228.4 733.8,228.5 747.1,228.8 760.4,229.1 773.0,229.6 784.3,230.3 793.8,231.0 801.7,231.8 808.9,232.8 816.4,234.0 824.9,235.5 835.3,237.5 848.4,240.0 863.5,242.9 879.7,246.2 895.9,249.8 911.1,253.6 924.3,257.5 935.6,261.7 945.6,266.1 954.7,270.8 963.0,275.7 970.5,280.6 977.5,285.5 984.0,290.5 989.7,295.8 994.7,301.2 999.1,306.4 1002.9,311.4 1006.0,316.0 1008.5,320.1 1010.1,323.7 1011.2,327.0 1011.8,330.3 1012.0,333.7 1012.0,337.4 1011.9,341.4 1011.5,345.7 1010.7,350.0 1009.6,354.3 1008.1,358.5 1006.0,362.4 1003.7,366.0 1001.1,369.3 998.1,372.6 994.4,375.7 990.0,378.7 984.6,381.8 978.2,385.0 970.7,388.2 962.4,391.5 953.6,394.5 944.4,397.3 934.9,399.6 924.8,401.5 913.6,402.9 902.1,404.1 890.7,405.1 880.1,405.9 870.9,406.7 863.5,407.4 857.5,407.9 852.3,408.3 847.3,408.5 841.8,408.7 835.3,408.7 827.6,408.6 819.2,408.4 810.3,408.0 801.4,407.6 792.6,407.1 784.3,406.7 776.1,406.2 767.6,405.7 759.3,405.2 751.7,404.7 745.3,404.2 740.6,403.9"/><polygon points="543.1,487.7 671.7,394.6 666.5,393.9 659.2,392.9 650.6,391.7 641.4,390.5 632.5,389.2 624.7,388.0 617.7,386.9 610.9,385.8 604.4,384.8 598.1,383.6 592.1,382.4 586.4,381.0 580.9,379.4 575.7,377.6 570.7,375.7 566.0,373.7 561.7,371.8 557.7,370.0 554.1,368.3 551.0,366.7 548.1,365.2 545.5,363.6 543.0,361.9 540.4,360.0 537.7,357.9 535.0,355.8 532.4,353.5 529.9,351.1 527.7,348.6 525.7,346.0 523.9,343.2 522.4,340.1 521.1,337.0 519.9,333.9 519.0,330.8 518.2,328.0 517.5,325.5 517.1,323.4 516.8,321.3 516.7,319.2 516.7,316.8 516.9,314.0 517.1,310.7 517.3,307.0 517.7,303.0 518.3,299.0 519.3,295.0 520.7,291.3 522.4,287.8 524.4,284.4 526.7,281.0 529.5,277.8 532.8,274.5 536.7,271.3 541.3,268.1 546.7,264.8 552.5,261.6 558.7,258.5 565.1,255.5 571.4,252.7 577.7,250.1 584.1,247.6 590.7,245.2 597.4,243.1 604.3,241.1 611.4,239.3 618.5,237.8 625.8,236.5 633.2,235.4 640.8,234.4 648.6,233.5 656.7,232.7 664.8,231.9 673.0,231.2 681.5,230.6 690.3,230.1 699.8,229.7 710.0,229.5 721.5,229.4 734.2,229.5 747.5,229.8 760.7,230.1 773.3,230.6 784.7,231.3 794.1,232.0 802.0,232.8 809.3,233.8 816.7,235.0 825.2,236.5 835.7,238.5 848.7,241.0 863.8,243.9 880.0,247.2 896.2,250.8 911.5,254.6 924.7,258.5 935.9,262.7 946.0,267.1 955.0,271.8 963.3,276.7 970.8,281.6 977.9,286.5 984.3,291.5 990.0,296.8 995.1,302.2 999.4,307.4 1003.2,312.4 1006.4,317.0 1008.8,321.1 1010.5,324.7 1011.5,328.0 1012.1,331.3 1012.3,334.7 1012.4,338.4 1012.2,342.4 1011.8,346.7 1011.1,351.0 1010.0,355.3 1008.4,359.5 1006.4,363.4 1004.0,367.0 1001.4,370.3 998.4,373.6 994.8,376.7 990.3,379.7 985.0,382.8 978.5,386.0 971.0,389.2 962.8,392.5 953.9,395.5 944.7,398.3 935.3,400.6 925.1,402.5 913.9,403.9 902.4,405.1 891.0,406.1 880.5,406.9 871.3,407.7 863.9,408.4 857.9,408.9 852.7,409.3 847.6,409.5 842.2,409.7 835.7,409.7 828.0,409.6 819.5,409.4 810.7,409.0 801.7,408.6 792.9,408.1 784.7,407.7 776.5,407.2 767.9,406.7 759.6,406.2 752.0,405.7 745.6,405.2 741.0,404.9"/><polygon points="543.4,488.7 672.0,395.6 666.8,394.9 659.5,393.9 650.9,392.7 641.8,391.5 632.9,390.2 625.0,389.0 618.0,387.9 611.2,386.8 604.7,385.8 598.4,384.6 592.4,383.4 586.7,382.0 581.2,380.4 576.0,378.6 571.0,376.7 566.4,374.7 562.0,372.8 558.0,371.0 554.4,369.3 551.3,367.7 548.5,366.2 545.9,364.6 543.3,362.9 540.7,361.0 538.0,358.9 535.3,356.8 532.7,354.5 530.3,352.1 528.0,349.6 526.0,347.0 524.3,344.2 522.7,341.1 521.4,338.0 520.3,334.9 519.3,331.8 518.5,329.0 517.9,326.5 517.4,324.4 517.1,322.3 517.0,320.2 517.0,317.8 517.2,315.0 517.4,311.7 517.6,308.0 518.0,304.0 518.6,300.0 519.6,296.0 521.0,292.3 522.7,288.8 524.7,285.4 527.1,282.0 529.8,278.8 533.1,275.5 537.0,272.3 541.6,269.1 547.0,265.8 552.9,262.6 559.0,259.5 565.4,256.5 571.7,253.7 578.0,251.1 584.4,248.6 591.0,246.2 597.8,244.1 604.7,242.1 611.7,240.3 618.9,238.8 626.1,237.5 633.5,236.4 641.1,235.4 648.9,234.5 657.0,233.7 665.2,232.9 673.4,232.2 681.8,231.6 690.7,231.1 700.1,230.7 710.3,230.5 721.8,230.4 734.5,230.5 747.8,230.8 761.1,231.1 773.7,231.6 785.0,232.3 794.4,233.0 802.3,233.8 809.6,234.8 817.1,236.0 825.6,237.5 836.0,239.5 849.0,242.0 864.2,244.9 880.4,248.2 896.6,251.8 911.8,255.6 925.0,259.5 936.2,263.7 946.3,268.1 955.4,272.8 963.6,277.7 971.2,282.6 978.2,287.5 984.6,292.5 990.4,297.8 995.4,303.2 999.8,308.4 1003.5,313.4 1006.7,318.0 1009.1,322.1 1010.8,325.7 1011.9,329.0 1012.4,332.3 1012.7,335.7 1012.7,339.4 1012.6,343.4 1012.2,347.7 1011.4,352.0 1010.3,356.3 1008.7,360.5 1006.7,364.4 1004.4,368.0 1001.8,371.3 998.7,374.6 995.1,377.7 990.7,380.7 985.3,383.8 978.8,387.0 971.4,390.2 963.1,393.5 954.3,396.5 945.0,399.3 935.6,401.6 925.4,403.5 914.3,404.9 902.7,406.1 891.4,407.1 880.8,407.9 871.6,408.7 864.2,409.4 858.2,409.9 853.0,410.3 848.0,410.5 842.5,410.7 836.0,410.7 828.3,410.6 819.9,410.4 811.0,410.0 802.0,409.6 793.3,409.1 785.0,408.7 776.8,408.2 768.3,407.7 760.0,407.2 752.4,406.7 746.0,406.2 741.3,405.9"/><polygon points="543.7,489.7 672.3,396.6 667.1,395.9 659.8,394.9 651.2,393.7 642.1,392.5 633.2,391.2 625.3,390.0 618.3,388.9 611.6,387.8 605.0,386.8 598.8,385.6 592.8,384.4 587.0,383.0 581.6,381.4 576.3,379.6 571.4,377.7 566.7,375.7 562.3,373.8 558.3,372.0 554.8,370.3 551.6,368.7 548.8,367.2 546.2,365.6 543.6,363.9 541.0,362.0 538.3,359.9 535.7,357.8 533.1,355.5 530.6,353.1 528.3,350.6 526.3,348.0 524.6,345.2 523.1,342.1 521.7,339.0 520.6,335.9 519.6,332.8 518.8,330.0 518.2,327.5 517.8,325.4 517.5,323.3 517.4,321.2 517.4,318.8 517.5,316.0 517.7,312.7 518.0,309.0 518.4,305.0 519.0,301.0 519.9,297.0 521.3,293.3 523.1,289.8 525.1,286.4 527.4,283.0 530.2,279.8 533.4,276.5 537.3,273.3 542.0,270.1 547.3,266.8 553.2,263.6 559.4,260.5 565.7,257.5 572.0,254.7 578.3,252.1 584.8,249.6 591.4,247.2 598.1,245.1 605.0,243.1 612.0,241.3 619.2,239.8 626.4,238.5 633.9,237.4 641.4,236.4 649.3,235.5 657.3,234.7 665.5,233.9 673.7,233.2 682.1,232.6 691.0,232.1 700.4,231.7 710.6,231.5 722.1,231.4 734.8,231.5 748.1,231.8 761.4,232.1 774.0,232.6 785.3,233.3 794.8,234.0 802.7,234.8 809.9,235.8 817.4,237.0 825.9,238.5 836.3,240.5 849.4,243.0 864.5,245.9 880.7,249.2 896.9,252.8 912.1,256.6 925.3,260.5 936.6,264.7 946.6,269.1 955.7,273.8 964.0,278.7 971.5,283.6 978.5,288.5 985.0,293.5 990.7,298.8 995.7,304.2 1000.1,309.4 1003.9,314.4 1007.0,319.0 1009.5,323.1 1011.1,326.7 1012.2,330.0 1012.8,333.3 1013.0,336.7 1013.0,340.4 1012.9,344.4 1012.5,348.7 1011.7,353.0 1010.6,357.3 1009.1,361.5 1007.0,365.4 1004.7,369.0 1002.1,372.3 999.1,375.6 995.4,378.7 991.0,381.7 985.6,384.8 979.2,388.0 971.7,391.2 963.4,394.5 954.6,397.5 945.4,400.3 935.9,402.6 925.8,404.5 914.6,405.9 903.1,407.1 891.7,408.1 881.1,408.9 871.9,409.7 864.5,410.4 858.5,410.9 853.3,411.3 848.3,411.5 842.8,411.7 836.3,411.7 828.6,411.6 820.2,411.4 811.3,411.0 802.4,410.6 793.6,410.1 785.3,409.7 777.1,409.2 768.6,408.7 760.3,408.2 752.7,407.7 746.3,407.2 741.6,406.9"/><polygon points="544.1,490.7 672.7,397.6 667.5,396.9 660.2,395.9 651.6,394.7 642.4,393.5 633.5,392.2 625.7,391.0 618.7,389.9 611.9,388.8 605.4,387.8 599.1,386.6 593.1,385.4 587.4,384.0 581.9,382.4 576.7,380.6 571.7,378.7 567.0,376.7 562.7,374.8 558.7,373.0 555.1,371.3 552.0,369.7 549.1,368.2 546.5,366.6 544.0,364.9 541.4,363.0 538.7,360.9 536.0,358.8 533.4,356.5 530.9,354.1 528.7,351.6 526.7,349.0 524.9,346.2 523.4,343.1 522.1,340.0 520.9,336.9 520.0,333.8 519.2,331.0 518.5,328.5 518.1,326.4 517.8,324.3 517.7,322.2 517.7,319.8 517.9,317.0 518.1,313.7 518.3,310.0 518.7,306.0 519.3,302.0 520.3,298.0 521.7,294.3 523.4,290.8 525.4,287.4 527.7,284.0 530.5,280.8 533.8,277.5 537.7,274.3 542.3,271.1 547.7,267.8 553.5,264.6 559.7,261.5 566.1,258.5 572.4,255.7 578.7,253.1 585.1,250.6 591.7,248.2 598.4,246.1 605.3,244.1 612.4,242.3 619.5,240.8 626.8,239.5 634.2,238.4 641.8,237.4 649.6,236.5 657.7,235.7 665.8,234.9 674.0,234.2 682.5,233.6 691.3,233.1 700.8,232.7 711.0,232.5 722.5,232.4 735.2,232.5 748.5,232.8 761.7,233.1 774.3,233.6 785.7,234.3 795.1,235.0 803.0,235.8 810.3,236.8 817.7,238.0 826.2,239.5 836.7,241.5 849.7,244.0 864.8,246.9 881.0,250.2 897.2,253.8 912.5,257.6 925.7,261.5 936.9,265.7 947.0,270.1 956.0,274.8 964.3,279.7 971.8,284.6 978.9,289.5 985.3,294.5 991.0,299.8 996.1,305.2 1000.4,310.4 1004.2,315.4 1007.4,320.0 1009.8,324.1 1011.5,327.7 1012.5,331.0 1013.1,334.3 1013.3,337.7 1013.4,341.4 1013.2,345.4 1012.8,349.7 1012.1,354.0 1011.0,358.3 1009.4,362.5 1007.4,366.4 1005.0,370.0 1002.4,373.3 999.4,376.6 995.8,379.7 991.3,382.7 986.0,385.8 979.5,389.0 972.0,392.2 963.8,395.5 954.9,398.5 945.7,401.3 936.3,403.6 926.1,405.5 914.9,406.9 903.4,408.1 892.0,409.1 881.5,409.9 872.3,410.7 864.9,411.4 858.9,411.9 853.7,412.3 848.6,412.5 843.2,412.7 836.7,412.7 829.0,412.6 820.5,412.4 811.7,412.0 802.7,411.6 793.9,411.1 785.7,410.7 777.5,410.2 768.9,409.7 760.6,409.2 753.0,408.7 746.6,408.2 742.0,407.9"/><polygon points="544.4,491.7 673.0,398.6 667.8,397.9 660.5,396.9 651.9,395.7 642.8,394.5 633.9,393.2 626.0,392.0 619.0,390.9 612.2,389.8 605.7,388.8 599.4,387.6 593.4,386.4 587.7,385.0 582.2,383.4 577.0,381.6 572.0,379.7 567.4,377.7 563.0,375.8 559.0,374.0 555.4,372.3 552.3,370.7 549.5,369.2 546.9,367.6 544.3,365.9 541.7,364.0 539.0,361.9 536.3,359.8 533.7,357.5 531.3,355.1 529.0,352.6 527.0,350.0 525.3,347.2 523.7,344.1 522.4,341.0 521.3,337.9 520.3,334.8 519.5,332.0 518.9,329.5 518.4,327.4 518.1,325.3 518.0,323.2 518.0,320.8 518.2,318.0 518.4,314.7 518.6,311.0 519.0,307.0 519.6,303.0 520.6,299.0 522.0,295.3 523.7,291.8 525.7,288.4 528.1,285.0 530.8,281.8 534.1,278.5 538.0,275.3 542.6,272.1 548.0,268.8 553.9,265.6 560.0,262.5 566.4,259.5 572.7,256.7 579.0,254.1 585.4,251.6 592.0,249.2 598.8,247.1 605.7,245.1 612.7,243.3 619.9,241.8 627.1,240.5 634.5,239.4 642.1,238.4 649.9,237.5 658.0,236.7 666.2,235.9 674.4,235.2 682.8,234.6 691.7,234.1 701.1,233.7 711.3,233.5 722.8,233.4 735.5,233.5 748.8,233.8 762.1,234.1 774.7,234.6 786.0,235.3 795.4,236.0 803.3,236.8 810.6,237.8 818.1,239.0 826.6,240.5 837.0,242.5 850.0,245.0 865.2,247.9 881.4,251.2 897.6,254.8 912.8,258.6 926.0,262.5 937.2,266.7 947.3,271.1 956.4,275.8 964.6,280.7 972.2,285.6 979.2,290.5 985.6,295.5 991.4,300.8 996.4,306.2 1000.8,311.4 1004.5,316.4 1007.7,321.0 1010.1,325.1 1011.8,328.7 1012.9,332.0 1013.4,335.3 1013.7,338.7 1013.7,342.4 1013.6,346.4 1013.2,350.7 1012.4,355.0 1011.3,359.3 1009.7,363.5 1007.7,367.4 1005.4,371.0 1002.8,374.3 999.7,377.6 996.1,380.7 991.7,383.7 986.3,386.8 979.8,390.0 972.4,393.2 964.1,396.5 955.3,399.5 946.0,402.3 936.6,404.6 926.4,406.5 915.3,407.9 903.7,409.1 892.4,410.1 881.8,410.9 872.6,411.7 865.2,412.4 859.2,412.9 854.0,413.3 849.0,413.5 843.5,413.7 837.0,413.7 829.3,413.6 820.9,413.4 812.0,413.0 803.0,412.6 794.3,412.1 786.0,411.7 777.8,411.2 769.3,410.7 761.0,410.2 753.4,409.7 747.0,409.2 742.3,408.9"/><polygon points="544.7,492.7 673.3,399.6 668.1,398.9 660.8,397.9 652.2,396.7 643.1,395.5 634.2,394.2 626.3,393.0 619.3,391.9 612.6,390.8 606.0,389.8 599.8,388.6 593.8,387.4 588.0,386.0 582.6,384.4 577.3,382.6 572.4,380.7 567.7,378.7 563.3,376.8 559.3,375.0 555.8,373.3 552.6,371.7 549.8,370.2 547.2,368.6 544.6,366.9 542.0,365.0 539.3,362.9 536.7,360.8 534.1,358.5 531.6,356.1 529.3,353.6 527.3,351.0 525.6,348.2 524.1,345.1 522.7,342.0 521.6,338.9 520.6,335.8 519.8,333.0 519.2,330.5 518.8,328.4 518.5,326.3 518.4,324.2 518.4,321.8 518.5,319.0 518.7,315.7 519.0,312.0 519.4,308.0 520.0,304.0 520.9,300.0 522.3,296.3 524.1,292.8 526.1,289.4 528.4,286.0 531.2,282.8 534.4,279.5 538.3,276.3 543.0,273.1 548.3,269.8 554.2,266.6 560.4,263.5 566.7,260.5 573.0,257.7 579.3,255.1 585.8,252.6 592.4,250.2 599.1,248.1 606.0,246.1 613.0,244.3 620.2,242.8 627.4,241.5 634.9,240.4 642.4,239.4 650.3,238.5 658.3,237.7 666.5,236.9 674.7,236.2 683.1,235.6 692.0,235.1 701.4,234.7 711.6,234.5 723.1,234.4 735.8,234.5 749.1,234.8 762.4,235.1 775.0,235.6 786.3,236.3 795.8,237.0 803.7,237.8 810.9,238.8 818.4,240.0 826.9,241.5 837.3,243.5 850.4,246.0 865.5,248.9 881.7,252.2 897.9,255.8 913.1,259.6 926.3,263.5 937.6,267.7 947.6,272.1 956.7,276.8 965.0,281.7 972.5,286.6 979.5,291.5 986.0,296.5 991.7,301.8 996.7,307.2 1001.1,312.4 1004.9,317.4 1008.0,322.0 1010.5,326.1 1012.1,329.7 1013.2,333.0 1013.8,336.3 1014.0,339.7 1014.0,343.4 1013.9,347.4 1013.5,351.7 1012.7,356.0 1011.6,360.3 1010.1,364.5 1008.0,368.4 1005.7,372.0 1003.1,375.3 1000.1,378.6 996.4,381.7 992.0,384.7 986.6,387.8 980.2,391.0 972.7,394.2 964.4,397.5 955.6,400.5 946.4,403.3 936.9,405.6 926.8,407.5 915.6,408.9 904.1,410.1 892.7,411.1 882.1,411.9 872.9,412.7 865.5,413.4 859.5,413.9 854.3,414.3 849.3,414.5 843.8,414.7 837.3,414.7 829.6,414.6 821.2,414.4 812.3,414.0 803.4,413.6 794.6,413.1 786.3,412.7 778.1,412.2 769.6,411.7 761.3,411.2 753.7,410.7 747.3,410.2 742.6,409.9"/><polygon points="545.1,493.7 673.7,400.6 668.5,399.9 661.2,398.9 652.6,397.7 643.4,396.5 634.5,395.2 626.7,394.0 619.7,392.9 612.9,391.8 606.4,390.8 600.1,389.6 594.1,388.4 588.4,387.0 582.9,385.4 577.7,383.6 572.7,381.7 568.0,379.7 563.7,377.8 559.7,376.0 556.1,374.3 553.0,372.7 550.1,371.2 547.5,369.6 545.0,367.9 542.4,366.0 539.7,363.9 537.0,361.8 534.4,359.5 531.9,357.1 529.7,354.6 527.7,352.0 525.9,349.2 524.4,346.1 523.1,343.0 521.9,339.9 521.0,336.8 520.2,334.0 519.5,331.5 519.1,329.4 518.8,327.3 518.7,325.2 518.7,322.8 518.9,320.0 519.1,316.7 519.3,313.0 519.7,309.0 520.3,305.0 521.3,301.0 522.7,297.3 524.4,293.8 526.4,290.4 528.7,287.0 531.5,283.8 534.8,280.5 538.7,277.3 543.3,274.1 548.7,270.8 554.5,267.6 560.7,264.5 567.1,261.5 573.4,258.7 579.7,256.1 586.1,253.6 592.7,251.2 599.4,249.1 606.3,247.1 613.4,245.3 620.5,243.8 627.8,242.5 635.2,241.4 642.8,240.4 650.6,239.5 658.7,238.7 666.8,237.9 675.0,237.2 683.5,236.6 692.3,236.1 701.8,235.7 712.0,235.5 723.5,235.4 736.2,235.5 749.5,235.8 762.7,236.1 775.3,236.6 786.7,237.3 796.1,238.0 804.0,238.8 811.3,239.8 818.7,241.0 827.2,242.5 837.7,244.5 850.7,247.0 865.8,249.9 882.0,253.2 898.2,256.8 913.5,260.6 926.7,264.5 937.9,268.7 948.0,273.1 957.0,277.8 965.3,282.7 972.8,287.6 979.9,292.5 986.3,297.5 992.0,302.8 997.1,308.2 1001.4,313.4 1005.2,318.4 1008.4,323.0 1010.8,327.1 1012.5,330.7 1013.5,334.0 1014.1,337.3 1014.3,340.7 1014.4,344.4 1014.2,348.4 1013.8,352.7 1013.1,357.0 1012.0,361.3 1010.4,365.5 1008.4,369.4 1006.0,373.0 1003.4,376.3 1000.4,379.6 996.8,382.7 992.3,385.7 987.0,388.8 980.5,392.0 973.0,395.2 964.8,398.5 955.9,401.5 946.7,404.3 937.3,406.6 927.1,408.5 915.9,409.9 904.4,411.1 893.0,412.1 882.5,412.9 873.3,413.7 865.9,414.4 859.9,414.9 854.7,415.3 849.6,415.5 844.2,415.7 837.7,415.7 830.0,415.6 821.5,415.4 812.7,415.0 803.7,414.6 794.9,414.1 786.7,413.7 778.5,413.2 769.9,412.7 761.6,412.2 754.0,411.7 747.6,411.2 743.0,410.9"/><polygon points="545.4,494.7 674.0,401.6 668.8,400.9 661.5,399.9 652.9,398.7 643.8,397.5 634.9,396.2 627.0,395.0 620.0,393.9 613.2,392.8 606.7,391.8 600.4,390.6 594.4,389.4 588.7,388.0 583.2,386.4 578.0,384.6 573.0,382.7 568.4,380.7 564.0,378.8 560.0,377.0 556.4,375.3 553.3,373.7 550.5,372.2 547.9,370.6 545.3,368.9 542.7,367.0 540.0,364.9 537.3,362.8 534.7,360.5 532.3,358.1 530.0,355.6 528.0,353.0 526.3,350.2 524.7,347.1 523.4,344.0 522.3,340.9 521.3,337.8 520.5,335.0 519.9,332.5 519.4,330.4 519.1,328.3 519.0,326.2 519.0,323.8 519.2,321.0 519.4,317.7 519.6,314.0 520.0,310.0 520.6,306.0 521.6,302.0 523.0,298.3 524.7,294.8 526.7,291.4 529.1,288.0 531.8,284.8 535.1,281.5 539.0,278.3 543.6,275.1 549.0,271.8 554.9,268.6 561.0,265.5 567.4,262.5 573.7,259.7 580.0,257.1 586.4,254.6 593.0,252.2 599.8,250.1 606.7,248.1 613.7,246.3 620.9,244.8 628.1,243.5 635.5,242.4 643.1,241.4 650.9,240.5 659.0,239.7 667.2,238.9 675.4,238.2 683.8,237.6 692.7,237.1 702.1,236.7 712.3,236.5 723.8,236.4 736.5,236.5 749.8,236.8 763.1,237.1 775.7,237.6 787.0,238.3 796.4,239.0 804.3,239.8 811.6,240.8 819.1,242.0 827.6,243.5 838.0,245.5 851.0,248.0 866.2,250.9 882.4,254.2 898.6,257.8 913.8,261.6 927.0,265.5 938.2,269.7 948.3,274.1 957.4,278.8 965.6,283.7 973.2,288.6 980.2,293.5 986.6,298.5 992.4,303.8 997.4,309.2 1001.8,314.4 1005.5,319.4 1008.7,324.0 1011.1,328.1 1012.8,331.7 1013.9,335.0 1014.4,338.3 1014.7,341.7 1014.7,345.4 1014.6,349.4 1014.2,353.7 1013.4,358.0 1012.3,362.3 1010.7,366.5 1008.7,370.4 1006.4,374.0 1003.8,377.3 1000.7,380.6 997.1,383.7 992.7,386.7 987.3,389.8 980.8,393.0 973.4,396.2 965.1,399.5 956.3,402.5 947.0,405.3 937.6,407.6 927.4,409.5 916.3,410.9 904.7,412.1 893.4,413.1 882.8,413.9 873.6,414.7 866.2,415.4 860.2,415.9 855.0,416.3 850.0,416.5 844.5,416.7 838.0,416.7 830.3,416.6 821.9,416.4 813.0,416.0 804.0,415.6 795.3,415.1 787.0,414.7 778.8,414.2 770.3,413.7 762.0,413.2 754.4,412.7 748.0,412.2 743.3,411.9"/><polygon points="545.7,495.7 674.3,402.6 669.1,401.9 661.8,400.9 653.2,399.7 644.1,398.5 635.2,397.2 627.3,396.0 620.3,394.9 613.6,393.8 607.0,392.8 600.8,391.6 594.8,390.4 589.0,389.0 583.6,387.4 578.3,385.6 573.4,383.7 568.7,381.7 564.3,379.8 560.3,378.0 556.8,376.3 553.6,374.7 550.8,373.2 548.2,371.6 545.6,369.9 543.0,368.0 540.3,365.9 537.7,363.8 535.1,361.5 532.6,359.1 530.3,356.6 528.3,354.0 526.6,351.2 525.1,348.1 523.7,345.0 522.6,341.9 521.6,338.8 520.8,336.0 520.2,333.5 519.8,331.4 519.5,329.3 519.4,327.2 519.4,324.8 519.5,322.0 519.7,318.7 520.0,315.0 520.4,311.0 521.0,307.0 521.9,303.0 523.3,299.3 525.1,295.8 527.1,292.4 529.4,289.0 532.2,285.8 535.4,282.5 539.3,279.3 544.0,276.1 549.3,272.8 555.2,269.6 561.4,266.5 567.7,263.5 574.0,260.7 580.3,258.1 586.8,255.6 593.4,253.2 600.1,251.1 607.0,249.1 614.0,247.3 621.2,245.8 628.4,244.5 635.9,243.4 643.4,242.4 651.3,241.5 659.3,240.7 667.5,239.9 675.7,239.2 684.1,238.6 693.0,238.1 702.4,237.7 712.6,237.5 724.1,237.4 736.8,237.5 750.1,237.8 763.4,238.1 776.0,238.6 787.3,239.3 796.8,240.0 804.7,240.8 811.9,241.8 819.4,243.0 827.9,244.5 838.3,246.5 851.4,249.0 866.5,251.9 882.7,255.2 898.9,258.8 914.1,262.6 927.3,266.5 938.6,270.7 948.6,275.1 957.7,279.8 966.0,284.7 973.5,289.6 980.5,294.5 987.0,299.5 992.7,304.8 997.7,310.2 1002.1,315.4 1005.9,320.4 1009.0,325.0 1011.5,329.1 1013.1,332.7 1014.2,336.0 1014.8,339.3 1015.0,342.7 1015.0,346.4 1014.9,350.4 1014.5,354.7 1013.7,359.0 1012.6,363.3 1011.1,367.5 1009.0,371.4 1006.7,375.0 1004.1,378.3 1001.1,381.6 997.4,384.7 993.0,387.7 987.6,390.8 981.2,394.0 973.7,397.2 965.4,400.5 956.6,403.5 947.4,406.3 937.9,408.6 927.8,410.5 916.6,411.9 905.1,413.1 893.7,414.1 883.1,414.9 873.9,415.7 866.5,416.4 860.5,416.9 855.3,417.3 850.3,417.5 844.8,417.7 838.3,417.7 830.6,417.6 822.2,417.4 813.3,417.0 804.4,416.6 795.6,416.1 787.3,415.7 779.1,415.2 770.6,414.7 762.3,414.2 754.7,413.7 748.3,413.2 743.6,412.9"/><polygon points="546.1,496.7 674.7,403.6 669.5,402.9 662.2,401.9 653.6,400.7 644.4,399.5 635.5,398.2 627.7,397.0 620.7,395.9 613.9,394.8 607.4,393.8 601.1,392.6 595.1,391.4 589.4,390.0 583.9,388.4 578.7,386.6 573.7,384.7 569.0,382.7 564.7,380.8 560.7,379.0 557.1,377.3 554.0,375.7 551.1,374.2 548.5,372.6 546.0,370.9 543.4,369.0 540.7,366.9 538.0,364.8 535.4,362.5 532.9,360.1 530.7,357.6 528.7,355.0 526.9,352.2 525.4,349.1 524.1,346.0 522.9,342.9 522.0,339.8 521.2,337.0 520.5,334.5 520.1,332.4 519.8,330.3 519.7,328.2 519.7,325.8 519.9,323.0 520.1,319.7 520.3,316.0 520.7,312.0 521.3,308.0 522.3,304.0 523.7,300.3 525.4,296.8 527.4,293.4 529.7,290.0 532.5,286.8 535.8,283.5 539.7,280.3 544.3,277.1 549.7,273.8 555.5,270.6 561.7,267.5 568.1,264.5 574.4,261.7 580.7,259.1 587.1,256.6 593.7,254.2 600.4,252.1 607.3,250.1 614.4,248.3 621.5,246.8 628.8,245.5 636.2,244.4 643.8,243.4 651.6,242.5 659.7,241.7 667.8,240.9 676.0,240.2 684.5,239.6 693.3,239.1 702.8,238.7 713.0,238.5 724.5,238.4 737.2,238.5 750.5,238.8 763.7,239.1 776.3,239.6 787.7,240.3 797.1,241.0 805.0,241.8 812.3,242.8 819.7,244.0 828.2,245.5 838.7,247.5 851.7,250.0 866.8,252.9 883.0,256.2 899.2,259.8 914.5,263.6 927.7,267.5 938.9,271.7 949.0,276.1 958.0,280.8 966.3,285.7 973.8,290.6 980.9,295.5 987.3,300.5 993.0,305.8 998.1,311.2 1002.4,316.4 1006.2,321.4 1009.4,326.0 1011.8,330.1 1013.5,333.7 1014.5,337.0 1015.1,340.3 1015.3,343.7 1015.4,347.4 1015.2,351.4 1014.8,355.7 1014.1,360.0 1013.0,364.3 1011.4,368.5 1009.4,372.4 1007.0,376.0 1004.4,379.3 1001.4,382.6 997.8,385.7 993.3,388.7 988.0,391.8 981.5,395.0 974.0,398.2 965.8,401.5 956.9,404.5 947.7,407.3 938.3,409.6 928.1,411.5 916.9,412.9 905.4,414.1 894.0,415.1 883.5,415.9 874.3,416.7 866.9,417.4 860.9,417.9 855.7,418.3 850.6,418.5 845.2,418.7 838.7,418.7 831.0,418.6 822.5,418.4 813.7,418.0 804.7,417.6 795.9,417.1 787.7,416.7 779.5,416.2 770.9,415.7 762.6,415.2 755.0,414.7 748.6,414.2 744.0,413.9"/><polygon points="546.4,497.7 675.0,404.6 669.8,403.9 662.5,402.9 653.9,401.7 644.8,400.5 635.9,399.2 628.0,398.0 621.0,396.9 614.2,395.8 607.7,394.8 601.4,393.6 595.4,392.4 589.7,391.0 584.2,389.4 579.0,387.6 574.0,385.7 569.4,383.7 565.0,381.8 561.0,380.0 557.4,378.3 554.3,376.7 551.5,375.2 548.9,373.6 546.3,371.9 543.7,370.0 541.0,367.9 538.3,365.8 535.7,363.5 533.3,361.1 531.0,358.6 529.0,356.0 527.3,353.2 525.7,350.1 524.4,347.0 523.3,343.9 522.3,340.8 521.5,338.0 520.9,335.5 520.4,333.4 520.1,331.3 520.0,329.2 520.0,326.8 520.2,324.0 520.4,320.7 520.6,317.0 521.0,313.0 521.6,309.0 522.6,305.0 524.0,301.3 525.7,297.8 527.7,294.4 530.1,291.0 532.8,287.8 536.1,284.5 540.0,281.3 544.6,278.1 550.0,274.8 555.9,271.6 562.0,268.5 568.4,265.5 574.7,262.7 581.0,260.1 587.4,257.6 594.0,255.2 600.8,253.1 607.7,251.1 614.7,249.3 621.9,247.8 629.1,246.5 636.5,245.4 644.1,244.4 651.9,243.5 660.0,242.7 668.2,241.9 676.4,241.2 684.8,240.6 693.7,240.1 703.1,239.7 713.3,239.5 724.8,239.4 737.5,239.5 750.8,239.8 764.1,240.1 776.7,240.6 788.0,241.3 797.4,242.0 805.3,242.8 812.6,243.8 820.1,245.0 828.6,246.5 839.0,248.5 852.0,251.0 867.2,253.9 883.4,257.2 899.6,260.8 914.8,264.6 928.0,268.5 939.2,272.7 949.3,277.1 958.4,281.8 966.6,286.7 974.2,291.6 981.2,296.5 987.6,301.5 993.4,306.8 998.4,312.2 1002.8,317.4 1006.5,322.4 1009.7,327.0 1012.1,331.1 1013.8,334.7 1014.9,338.0 1015.4,341.3 1015.7,344.7 1015.7,348.4 1015.6,352.4 1015.2,356.7 1014.4,361.0 1013.3,365.3 1011.7,369.5 1009.7,373.4 1007.4,377.0 1004.8,380.3 1001.7,383.6 998.1,386.7 993.7,389.7 988.3,392.8 981.8,396.0 974.4,399.2 966.1,402.5 957.3,405.5 948.0,408.3 938.6,410.6 928.4,412.5 917.3,413.9 905.7,415.1 894.4,416.1 883.8,416.9 874.6,417.7 867.2,418.4 861.2,418.9 856.0,419.3 851.0,419.5 845.5,419.7 839.0,419.7 831.3,419.6 822.9,419.4 814.0,419.0 805.0,418.6 796.3,418.1 788.0,417.7 779.8,417.2 771.3,416.7 763.0,416.2 755.4,415.7 749.0,415.2 744.3,414.9"/></g>
<polygon points="538.4,473.7 736.3,390.9 744.3,414.9 546.4,497.7" fill="#625e10"/>
<polygon points="538.4,473.7 546.4,497.7 545,498 537.5,475" fill="#3a380a"/>
<line x1="538.4" y1="473.7" x2="546.4" y2="497.7" stroke="#111" stroke-width="1.1"/>
<line x1="736.3" y1="390.9" x2="744.3" y2="414.9" stroke="#111" stroke-width="1.1"/>
<line x1="1000" y1="353" x2="1008" y2="377" stroke="#111" stroke-width="1"/>
<polygon points="538.4,473.7 667.0,380.6 661.8,379.9 654.5,378.9 645.9,377.7 636.8,376.5 627.9,375.2 620.0,374.0 613.0,372.9 606.2,371.8 599.7,370.8 593.4,369.6 587.4,368.4 581.7,367.0 576.2,365.4 571.0,363.6 566.0,361.7 561.4,359.7 557.0,357.8 553.0,356.0 549.4,354.3 546.3,352.7 543.5,351.2 540.9,349.6 538.3,347.9 535.7,346.0 533.0,343.9 530.3,341.8 527.7,339.5 525.3,337.1 523.0,334.6 521.0,332.0 519.3,329.2 517.7,326.1 516.4,323.0 515.3,319.9 514.3,316.8 513.5,314.0 512.9,311.5 512.4,309.4 512.1,307.3 512.0,305.2 512.0,302.8 512.2,300.0 512.4,296.7 512.6,293.0 513.0,289.0 513.6,285.0 514.6,281.0 516.0,277.3 517.7,273.8 519.7,270.4 522.1,267.0 524.8,263.8 528.1,260.5 532.0,257.3 536.6,254.1 542.0,250.8 547.9,247.6 554.0,244.5 560.4,241.5 566.7,238.7 573.0,236.1 579.4,233.6 586.0,231.2 592.8,229.1 599.7,227.1 606.7,225.3 613.9,223.8 621.1,222.5 628.5,221.4 636.1,220.4 643.9,219.5 652.0,218.7 660.2,217.9 668.4,217.2 676.8,216.6 685.7,216.1 695.1,215.7 705.3,215.5 716.8,215.4 729.5,215.5 742.8,215.8 756.1,216.1 768.7,216.6 780.0,217.3 789.4,218.0 797.3,218.8 804.6,219.8 812.1,221.0 820.6,222.5 831.0,224.5 844.0,227.0 859.2,229.9 875.4,233.2 891.6,236.8 906.8,240.6 920.0,244.5 931.2,248.7 941.3,253.1 950.4,257.8 958.6,262.7 966.2,267.6 973.2,272.5 979.6,277.5 985.4,282.8 990.4,288.2 994.8,293.4 998.5,298.4 1001.7,303.0 1004.1,307.1 1005.8,310.7 1006.9,314.0 1007.4,317.3 1007.7,320.7 1007.7,324.4 1007.6,328.4 1007.2,332.7 1006.4,337.0 1005.3,341.3 1003.7,345.5 1001.7,349.4 999.4,353.0 996.8,356.3 993.7,359.6 990.1,362.7 985.7,365.7 980.3,368.8 973.8,372.0 966.4,375.2 958.1,378.5 949.3,381.5 940.0,384.3 930.6,386.6 920.4,388.5 909.3,389.9 897.7,391.1 886.4,392.1 875.8,392.9 866.6,393.7 859.2,394.4 853.2,394.9 848.0,395.3 843.0,395.5 837.5,395.7 831.0,395.7 823.3,395.6 814.9,395.4 806.0,395.0 797.0,394.6 788.3,394.1 780.0,393.7 771.8,393.2 763.3,392.7 755.0,392.2 747.4,391.7 741.0,391.2 736.3,390.9" fill="#f7f70a" stroke="#111" stroke-width="1.2" stroke-linejoin="round"/>
</svg>
<!-- axis -->
<svg class="a" style="left:1166px;top:572px" width="34" height="32">
<path d="M10 24.5 H26" stroke="#b01818" stroke-width="1.8"/>
<path d="M22 25.5 h4" stroke="#b01818" stroke-width="1.5"/>
<path d="M10 24.5 L11.5 12" stroke="#20a020" stroke-width="1.4"/>
<path d="M10 24.5 L6.5 15 L8.5 13.5z" fill="#1a2ab0" stroke="#1a2ab0" stroke-width="1"/>
<text x="6" y="18" font-size="9.5" fill="#222" font-family="Liberation Sans">Z</text>
<text x="13" y="11.5" font-size="9.5" fill="#222" font-family="Liberation Sans">Y</text>
<text x="27" y="28" font-size="9.5" fill="#222" font-family="Liberation Sans">X</text>
</svg>

<!-- doc tabs -->
<div class="a" style="left:322px;top:620px;width:97px;height:26px;border:1px solid #c9c6c1;border-top:none;border-radius:0 0 3px 3px;background:linear-gradient(#e3e2df,#eeedeb)"></div>
<div class="a" style="left:419px;top:620px;width:212px;height:28px;border:1px solid #c9c6c1;border-top:none;border-radius:0 0 3px 3px;background:#f8f8f7"></div>
<div class="t" style="left:329px;top:626px;letter-spacing:0.3px">Start page</div>
<div class="t" style="left:446px;top:626px">T34-ej1-bocadillo-comic : 1</div>
<svg class="a" style="left:397px;top:628px" width="12" height="11"><path d="M2 2l8 7M10 2l-8 7" stroke="#555" stroke-width="2.6" stroke-linecap="round"/></svg>
<svg class="a" style="left:609px;top:628px" width="12" height="11"><path d="M2 2l8 7M10 2l-8 7" stroke="#555" stroke-width="2.6" stroke-linecap="round"/></svg>
<svg class="a" style="left:425px;top:627px" width="15" height="14" viewBox="0 0 15 14">
<path d="M0.5 1 h7 v3 h-4 v2 h3 v2.5 h-3 v4.5 h-3z" fill="#e83818"/>
<g transform="translate(9.5 8)"><circle r="3.6" fill="#1b3fa0"/><g stroke="#1b3fa0" stroke-width="1.6"><path d="M0 -5v10M-5 0h10M-3.5 -3.5l7 7M3.5 -3.5l-7 7"/></g><circle r="1.4" fill="#f8f8f7"/></g>
</svg>


<!-- status bar -->
<div class="a" style="left:57px;top:648px;width:1143px;height:1px;background:#dcdad5"></div>
<div class="t" style="left:1089.5px;top:655px;font-size:12.8px">166.01 x 91.56 mm</div>
</body></html>
